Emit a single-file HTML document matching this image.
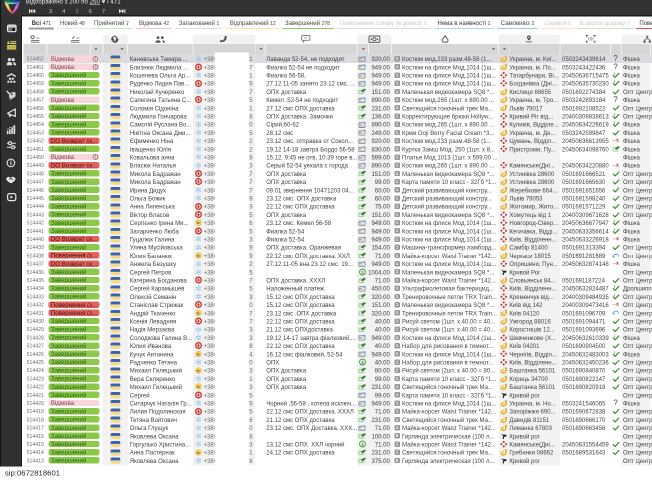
<!DOCTYPE html><html><head><meta charset="utf-8"><style>
*{box-sizing:border-box}
html,body{margin:0;padding:0}
body{width:652px;height:480px;overflow:hidden;background:#fff;position:relative;font-family:"Liberation Sans",sans-serif;color:#333}
.a{position:absolute}
svg.a{overflow:visible}
.t{position:absolute;white-space:nowrap;font-size:6px;line-height:8.2px}
#w{position:absolute;left:0;top:0;width:1304px;height:960px;overflow:hidden;transform:scale(0.5);transform-origin:0 0;will-change:transform}
#z{position:absolute;left:0;top:0;width:652px;height:480px;zoom:2}
.pill{position:absolute;height:6.4px;border-radius:2.2px;font-size:6.1px;line-height:8px;padding-left:2.2px;white-space:nowrap;overflow:hidden}
.pill span{position:relative;top:-0.6px}
.G{background:#8cc94a;color:#2f6216}
.P{background:#f7d6dc;color:#84404e}
.D{background:#e3625c;color:#451515}
</style></head><body><div id="w"><div id="z"><div class="a" style="left:102.9px;top:34.5px;width:24.5px;height:430.8px;background:#f2f2f2;border-radius:2.5px 2.5px 0 0"></div>
<div class="a" style="left:193px;top:34.5px;width:62.2px;height:430.8px;background:#f2f2f2;border-radius:2.5px 2.5px 0 0"></div>
<div class="a" style="left:357.2px;top:34.5px;width:34.3px;height:430.8px;background:#f2f2f2;border-radius:2.5px 2.5px 0 0"></div>
<div class="a" style="left:498.4px;top:34.5px;width:61.6px;height:430.8px;background:#f2f2f2;border-radius:2.5px 2.5px 0 0"></div>
<div class="a" style="left:621.4px;top:34.5px;width:29.2px;height:430.8px;background:#f2f2f2;border-radius:2.5px 2.5px 0 0"></div>
<svg class="a" style="left:30px;top:35px" width="10" height="8" viewBox="0 0 10 8"><circle cx="2.6" cy="2.2" r="1.6" fill="none" stroke="#6a6a6a" stroke-width="1"/><rect x="6" y="2.5" width="3.6" height="1" fill="#999"/><rect x="1" y="5" width="8.4" height="0.9" fill="#6a6a6a"/><rect x="1" y="6.8" width="8.4" height="0.9" fill="#6a6a6a"/></svg>
<svg class="a" style="left:70.5px;top:35px" width="10" height="8" viewBox="0 0 10 8"><path d="M2 3.8 L3.8 1" stroke="#6a6a6a" stroke-width="1.1"/><rect x="5.5" y="2.5" width="3.6" height="1" fill="#999"/><rect x="0.5" y="5" width="8.4" height="0.9" fill="#6a6a6a"/><rect x="0.5" y="6.8" width="8.4" height="0.9" fill="#6a6a6a"/></svg>
<svg class="a" style="left:111.2px;top:35.7px" width="8" height="8" viewBox="0 0 8 8"><circle cx="3.8" cy="3.8" r="3.6" fill="#4a4a4a"/><path d="M2.4 1.3 Q3.4 0.7 4.1 1.6 Q5.6 2 5.2 3.4 Q4.6 4.6 4.1 6.4 Q3.2 5.2 3 4 Q1.9 3.3 2.4 1.3Z" fill="#f4f4f4"/><path d="M5.3 0.8 Q7 1.6 7.2 3.4" fill="none" stroke="#f4f4f4" stroke-width="0.7"/><path d="M0.8 4.6 Q1.4 6.4 3 7.2" fill="none" stroke="#f4f4f4" stroke-width="0.5"/></svg>
<svg class="a" style="left:155.2px;top:36px" width="11" height="7.5" viewBox="0 0 11 7.5"><circle cx="3" cy="1.6" r="1.4" fill="#555"/><circle cx="7.3" cy="1.6" r="1.4" fill="#555"/><path d="M0.4 6.8 Q0.4 4.2 3 4.2 Q5.6 4.2 5.6 6.8Z" fill="#555"/><path d="M7.6 4.3 Q10 4.5 10 6.8 L8 6.8Z" fill="#555"/></svg>
<svg class="a" style="left:219.6px;top:35.6px" width="8" height="7" viewBox="0 0 8 7"><path d="M5.2 0.3 L7.1 0.8 Q7.8 3.8 5.2 5.6 Q2.6 7.2 0.3 6.4 L0.9 4.6 L2.8 4.9 Q4.6 4.2 5 2.4Z" fill="#505050"/></svg>
<svg class="a" style="left:301px;top:35px" width="10" height="8" viewBox="0 0 10 8"><path d="M1.6 0.6 H7.9 Q8.9 0.6 8.9 1.6 V4.3 Q8.9 5.3 7.9 5.3 H3.6 L2.4 7 L2.4 5.3 H1.6 Q0.6 5.3 0.6 4.3 V1.6 Q0.6 0.6 1.6 0.6Z" fill="none" stroke="#777" stroke-width="0.9"/><rect x="3" y="2.6" width="3.2" height="0.8" fill="#999"/></svg>
<svg class="a" style="left:368.6px;top:35.6px" width="12" height="7.5" viewBox="0 0 12 7.5"><rect x="0.5" y="0.5" width="10.8" height="6.4" rx="1.2" fill="none" stroke="#5a5a5a" stroke-width="1"/><path d="M1.6 3.7 L3.4 2.4 V5Z M10.2 3.7 L8.4 2.4 V5Z" fill="#666"/><circle cx="5.9" cy="3.7" r="1.6" fill="none" stroke="#555" stroke-width="0.9"/></svg>
<svg class="a" style="left:441.6px;top:35px" width="8" height="8" viewBox="0 0 8 8"><path d="M3.6 0.7 L1.6 3.6 Q0.6 4.2 0.7 5.6 Q0.9 7.2 2.4 7.2 H4.8 Q6.3 7.2 6.5 5.6 Q6.6 4.2 5.6 3.6Z" fill="none" stroke="#6a6a6a" stroke-width="1.1" stroke-linejoin="round"/></svg>
<svg class="a" style="left:525.5px;top:35px" width="8" height="8" viewBox="0 0 8 8"><path d="M3.4 0.4 Q5.2 0.4 5.3 2.4 Q5.3 3.8 3.4 5.6 Q1.5 3.8 1.5 2.4 Q1.6 0.4 3.4 0.4Z" fill="#555"/><circle cx="3.4" cy="2.3" r="0.7" fill="#f2f2f2"/><path d="M0.6 6 Q0.6 7 3.4 7 Q6.2 7 6.2 6" fill="none" stroke="#666" stroke-width="0.9"/></svg>
<svg class="a" style="left:585.8px;top:35.2px" width="10" height="8" viewBox="0 0 10 8"><path d="M0.5 2 V0.5 H2 M7.5 0.5 H9 V2 M9 5.5 V7 H7.5 M2 7 H0.5 V5.5" fill="none" stroke="#555" stroke-width="0.9"/><rect x="2.4" y="2" width="0.6" height="3.6" fill="#888"/><rect x="3.7" y="2" width="1" height="3.6" fill="#aaa"/><rect x="5.3" y="2" width="0.6" height="3.6" fill="#888"/><rect x="6.5" y="2" width="0.9" height="3.6" fill="#aaa"/></svg>
<svg class="a" style="left:643px;top:35.6px" width="9" height="8" viewBox="0 0 9 8"><circle cx="4.2" cy="1.2" r="1.1" fill="#666"/><path d="M4.2 1.2 V3.2 M4.2 3.2 Q1.6 3.6 1.6 5.6 M4.2 3.2 Q6.8 3.6 6.8 5.6" fill="none" stroke="#666" stroke-width="0.9"/><circle cx="1.6" cy="6.2" r="1.2" fill="#555"/><circle cx="6.8" cy="6.2" r="1.2" fill="#555"/></svg>
<div class="a" style="left:23.5px;top:44px;width:628.5px;height:10.6px;background:#d6d6d6"></div>
<div class="a" style="left:46.7px;top:44px;width:1px;height:10.6px;background:#f2f2f2"></div>
<div class="a" style="left:90px;top:44px;width:1px;height:10.6px;background:#f2f2f2"></div>
<div class="a" style="left:102.4px;top:44px;width:1px;height:10.6px;background:#f2f2f2"></div>
<div class="a" style="left:126.9px;top:44px;width:1px;height:10.6px;background:#f2f2f2"></div>
<div class="a" style="left:192.5px;top:44px;width:1px;height:10.6px;background:#f2f2f2"></div>
<div class="a" style="left:254.7px;top:44px;width:1px;height:10.6px;background:#f2f2f2"></div>
<div class="a" style="left:264.6px;top:44px;width:1px;height:10.6px;background:#f2f2f2"></div>
<div class="a" style="left:356.7px;top:44px;width:1px;height:10.6px;background:#f2f2f2"></div>
<div class="a" style="left:368px;top:44px;width:1px;height:10.6px;background:#f2f2f2"></div>
<div class="a" style="left:391px;top:44px;width:1px;height:10.6px;background:#f2f2f2"></div>
<div class="a" style="left:497.9px;top:44px;width:1px;height:10.6px;background:#f2f2f2"></div>
<div class="a" style="left:508.6px;top:44px;width:1px;height:10.6px;background:#f2f2f2"></div>
<div class="a" style="left:559.5px;top:44px;width:1px;height:10.6px;background:#f2f2f2"></div>
<div class="a" style="left:609.9px;top:44px;width:1px;height:10.6px;background:#f2f2f2"></div>
<div class="a" style="left:620.9px;top:44px;width:1px;height:10.6px;background:#f2f2f2"></div>
<div class="a" style="left:650.1px;top:44px;width:1px;height:10.6px;background:#f2f2f2"></div>
<svg class="a" style="left:94.6px;top:48px" width="3" height="2.3" viewBox="0 0 3 2.3"><path d="M0 0 H3 L1.5 2.3Z" fill="#6e6e6e"/></svg>
<svg class="a" style="left:120.3px;top:48px" width="3" height="2.3" viewBox="0 0 3 2.3"><path d="M0 0 H3 L1.5 2.3Z" fill="#6e6e6e"/></svg>
<svg class="a" style="left:259.5px;top:48px" width="3" height="2.3" viewBox="0 0 3 2.3"><path d="M0 0 H3 L1.5 2.3Z" fill="#6e6e6e"/></svg>
<svg class="a" style="left:361.8px;top:48px" width="3" height="2.3" viewBox="0 0 3 2.3"><path d="M0 0 H3 L1.5 2.3Z" fill="#6e6e6e"/></svg>
<svg class="a" style="left:492px;top:48px" width="3" height="2.3" viewBox="0 0 3 2.3"><path d="M0 0 H3 L1.5 2.3Z" fill="#6e6e6e"/></svg>
<svg class="a" style="left:503px;top:48px" width="3" height="2.3" viewBox="0 0 3 2.3"><path d="M0 0 H3 L1.5 2.3Z" fill="#6e6e6e"/></svg>
<div class="a" style="left:23.5px;top:54.6px;width:628.5px;height:8.2px;background:#dcdce0"></div>
<div class="t" style="left:26.6px;top:55.1px;color:#6c6c6c;font-size:5.2px">514462</div>
<div class="pill P" style="left:48.7px;top:55.4px;width:50.9px"><span>Відмова</span></div>
<svg class="a" style="left:92.4px;top:55.8px" width="6" height="6" viewBox="0 0 6 6"><circle cx="2.9" cy="2.9" r="2.4" fill="none" stroke="#8a5560" stroke-width="0.7"/><rect x="2.6" y="1.5" width="0.6" height="1.8" fill="#8a5560"/><rect x="2.6" y="3.8" width="0.6" height="0.6" fill="#8a5560"/></svg>
<svg class="a" style="left:110.3px;top:55.7px" width="9.8" height="6.2" viewBox="0 0 9.8 6.2"><rect x="0" y="0" width="9.8" height="6.2" rx="1.6" fill="#f6dc80"/><path d="M1.6 0 H8.2 Q9.8 0 9.8 1.6 V3 H0 V1.6 Q0 0 1.6 0Z" fill="#3d60ae"/><rect x="0" y="2.9" width="9.8" height="0.35" fill="#d8dce8"/></svg>
<div class="t" style="left:129.8px;top:55.1px;color:#3e3e3e">Каневська Тамара ...</div>
<svg class="a" style="left:195px;top:55.3px" width="7" height="7" viewBox="0 0 7 7"><line x1="3.4" y1="3.4" x2="3.4" y2="0.6" stroke="#7ab4ec" stroke-width="0.7" stroke-linecap="round"/><line x1="3.4" y1="3.4" x2="0.98" y2="2" stroke="#7ab4ec" stroke-width="0.7" stroke-linecap="round"/><line x1="3.4" y1="3.4" x2="0.98" y2="4.8" stroke="#7ab4ec" stroke-width="0.7" stroke-linecap="round"/><line x1="3.4" y1="3.4" x2="3.4" y2="6.2" stroke="#7ab4ec" stroke-width="0.7" stroke-linecap="round"/><line x1="3.4" y1="3.4" x2="5.82" y2="4.8" stroke="#7ab4ec" stroke-width="0.7" stroke-linecap="round"/><line x1="3.4" y1="3.4" x2="5.82" y2="2" stroke="#7ab4ec" stroke-width="0.7" stroke-linecap="round"/><circle cx="3.4" cy="3.4" r="0.7" fill="#fff"/></svg>
<div class="t" style="left:203.6px;top:55.1px;color:#6a6a6a">+380</div>
<div class="t" style="left:249.2px;top:55.1px;color:#6a6a6a">1</div>
<div class="t" style="left:266.3px;top:55.1px;color:#3e3e3e">Лаванда 52-54, не подходит</div>
<svg class="a" style="left:358.6px;top:55.9px" width="8" height="6" viewBox="0 0 8 6"><rect x="0.4" y="1.2" width="6.2" height="4.4" rx="0.6" fill="none" stroke="#8a8a8a" stroke-width="0.8"/><rect x="0.6" y="2.4" width="3" height="0.8" fill="#8a8a8a"/><rect x="1" y="4" width="4.6" height="0.6" fill="#b0b0b0"/><rect x="4.9" y="0.3" width="2" height="2" rx="0.4" fill="#5aa8ea"/></svg>
<div class="t" style="left:360px;width:29.8px;text-align:right;top:55.1px;color:#3e3e3e">920.00</div>
<div class="a" style="left:394.4px;top:56px;width:5.4px;height:5.4px;border-radius:1.3px;background:#979797;color:#fff;font-weight:bold;font-size:4.2px;line-height:5.6px;text-align:center">1</div>
<div class="t" style="left:402px;top:55.1px;color:#444">Костюм мод.233 разм.48-58 (1...</div>
<svg class="a" style="left:500px;top:55.5px" width="8" height="7" viewBox="0 0 8 7"><path d="M4.4 0.5 L7 0.3 Q7.6 4.4 5 6.3 Q2.4 7.6 0.9 5.6 Q0.2 4 1.4 2.4 L2.7 3.3 Q2.1 4.4 2.8 5 Q4.4 5.6 5.1 3.4 Q5.3 1.8 4.4 0.5Z" fill="#f0b22c"/><path d="M3.4 1.6 Q3.9 3 3.3 4.2" fill="none" stroke="#f4c24a" stroke-width="0.9"/></svg>
<div class="t" style="left:509.4px;top:55.1px;color:#444">Украина, м. Киї...</div>
<div class="t" style="left:562px;top:55.1px;color:#444">0503243439614</div>
<div class="t" style="left:613.2px;top:54.2px;color:#474747;font-size:8px;line-height:8.6px">?</div>
<div class="t" style="left:623px;top:55.1px;color:#444">Фішка</div>
<div class="t" style="left:26.6px;top:63.3px;color:#6c6c6c;font-size:5.2px">514461</div>
<div class="pill P" style="left:48.7px;top:63.6px;width:50.9px"><span>Відмова</span></div>
<svg class="a" style="left:92.4px;top:64px" width="6" height="6" viewBox="0 0 6 6"><circle cx="2.9" cy="2.9" r="2.4" fill="none" stroke="#8a5560" stroke-width="0.7"/><rect x="2.6" y="1.5" width="0.6" height="1.8" fill="#8a5560"/><rect x="2.6" y="3.8" width="0.6" height="0.6" fill="#8a5560"/></svg>
<svg class="a" style="left:110.3px;top:63.9px" width="9.8" height="6.2" viewBox="0 0 9.8 6.2"><rect x="0" y="0" width="9.8" height="6.2" rx="1.6" fill="#f6dc80"/><path d="M1.6 0 H8.2 Q9.8 0 9.8 1.6 V3 H0 V1.6 Q0 0 1.6 0Z" fill="#3d60ae"/><rect x="0" y="2.9" width="9.8" height="0.35" fill="#d8dce8"/></svg>
<div class="t" style="left:129.8px;top:63.3px;color:#3e3e3e">Близнюк Людмила ...</div>
<svg class="a" style="left:194.9px;top:63.4px" width="7" height="7" viewBox="0 0 7 7"><circle cx="3.5" cy="3.5" r="2.8" fill="#fff" stroke="#c8322a" stroke-width="1.3"/><path d="M4 1.6 Q2.2 2.2 2.3 3.9 Q2.6 5.2 3.8 5 Q4.9 4.6 4.6 3.3 Q3.7 3 4 1.6Z" fill="#c8322a"/></svg>
<div class="t" style="left:203.6px;top:63.3px;color:#6a6a6a">+380</div>
<div class="t" style="left:249.2px;top:63.3px;color:#6a6a6a">7</div>
<div class="t" style="left:266.3px;top:63.3px;color:#3e3e3e">Фиалка 52-54 не подходит</div>
<svg class="a" style="left:358.6px;top:64.1px" width="8" height="6" viewBox="0 0 8 6"><rect x="0.4" y="1.2" width="6.2" height="4.4" rx="0.6" fill="none" stroke="#8a8a8a" stroke-width="0.8"/><rect x="0.6" y="2.4" width="3" height="0.8" fill="#8a8a8a"/><rect x="1" y="4" width="4.6" height="0.6" fill="#b0b0b0"/><rect x="4.9" y="0.3" width="2" height="2" rx="0.4" fill="#5aa8ea"/></svg>
<div class="t" style="left:360px;width:29.8px;text-align:right;top:63.3px;color:#3e3e3e">949.00</div>
<div class="a" style="left:394.4px;top:64.2px;width:5.4px;height:5.4px;border-radius:1.3px;background:#979797;color:#fff;font-weight:bold;font-size:4.2px;line-height:5.6px;text-align:center">1</div>
<div class="t" style="left:402px;top:63.3px;color:#444">Костюм на флисе Мод.1014 (1ш...</div>
<svg class="a" style="left:500px;top:63.7px" width="8" height="7" viewBox="0 0 8 7"><path d="M4.4 0.5 L7 0.3 Q7.6 4.4 5 6.3 Q2.4 7.6 0.9 5.6 Q0.2 4 1.4 2.4 L2.7 3.3 Q2.1 4.4 2.8 5 Q4.4 5.6 5.1 3.4 Q5.3 1.8 4.4 0.5Z" fill="#f0b22c"/><path d="M3.4 1.6 Q3.9 3 3.3 4.2" fill="none" stroke="#f4c24a" stroke-width="0.9"/></svg>
<div class="t" style="left:509.4px;top:63.3px;color:#444">Украина, м. По...</div>
<div class="t" style="left:562px;top:63.3px;color:#444">0503243422436</div>
<div class="t" style="left:613.2px;top:62.4px;color:#474747;font-size:8px;line-height:8.6px">?</div>
<div class="t" style="left:623px;top:63.3px;color:#444">Фішка</div>
<div class="t" style="left:26.6px;top:71.5px;color:#6c6c6c;font-size:5.2px">514460</div>
<div class="pill G" style="left:48.7px;top:71.8px;width:50.9px"><span>Завершений</span></div>
<svg class="a" style="left:110.3px;top:72.1px" width="9.8" height="6.2" viewBox="0 0 9.8 6.2"><rect x="0" y="0" width="9.8" height="6.2" rx="1.6" fill="#f6dc80"/><path d="M1.6 0 H8.2 Q9.8 0 9.8 1.6 V3 H0 V1.6 Q0 0 1.6 0Z" fill="#3d60ae"/><rect x="0" y="2.9" width="9.8" height="0.35" fill="#d8dce8"/></svg>
<div class="t" style="left:129.8px;top:71.5px;color:#3e3e3e">Кошелева Ольга Ар...</div>
<svg class="a" style="left:195px;top:71.7px" width="7" height="7" viewBox="0 0 7 7"><line x1="3.4" y1="3.4" x2="3.4" y2="0.6" stroke="#7ab4ec" stroke-width="0.7" stroke-linecap="round"/><line x1="3.4" y1="3.4" x2="0.98" y2="2" stroke="#7ab4ec" stroke-width="0.7" stroke-linecap="round"/><line x1="3.4" y1="3.4" x2="0.98" y2="4.8" stroke="#7ab4ec" stroke-width="0.7" stroke-linecap="round"/><line x1="3.4" y1="3.4" x2="3.4" y2="6.2" stroke="#7ab4ec" stroke-width="0.7" stroke-linecap="round"/><line x1="3.4" y1="3.4" x2="5.82" y2="4.8" stroke="#7ab4ec" stroke-width="0.7" stroke-linecap="round"/><line x1="3.4" y1="3.4" x2="5.82" y2="2" stroke="#7ab4ec" stroke-width="0.7" stroke-linecap="round"/><circle cx="3.4" cy="3.4" r="0.7" fill="#fff"/></svg>
<div class="t" style="left:203.6px;top:71.5px;color:#6a6a6a">+380</div>
<div class="t" style="left:249.2px;top:71.5px;color:#6a6a6a">1</div>
<div class="t" style="left:266.3px;top:71.5px;color:#3e3e3e">Фиалка 56-58,</div>
<svg class="a" style="left:358.6px;top:72.3px" width="8" height="6" viewBox="0 0 8 6"><rect x="0.4" y="1.2" width="6.2" height="4.4" rx="0.6" fill="none" stroke="#8a8a8a" stroke-width="0.8"/><rect x="0.6" y="2.4" width="3" height="0.8" fill="#8a8a8a"/><rect x="1" y="4" width="4.6" height="0.6" fill="#b0b0b0"/><rect x="4.9" y="0.3" width="2" height="2" rx="0.4" fill="#5aa8ea"/></svg>
<div class="t" style="left:360px;width:29.8px;text-align:right;top:71.5px;color:#3e3e3e">949.00</div>
<div class="a" style="left:394.4px;top:72.4px;width:5.4px;height:5.4px;border-radius:1.3px;background:#979797;color:#fff;font-weight:bold;font-size:4.2px;line-height:5.6px;text-align:center">1</div>
<div class="t" style="left:402px;top:71.5px;color:#444">Костюм на флисе Мод.1014 (1ш...</div>
<svg class="a" style="left:500.6px;top:71.9px" width="7" height="7" viewBox="0 0 7 7"><circle cx="3.2" cy="3.2" r="3.4" fill="#fbe4e4"/><circle cx="3.2" cy="3.2" r="1.4" fill="#fff"/><circle cx="3.2" cy="1" r="1.05" fill="#a04040"/><circle cx="3.2" cy="5.4" r="1.05" fill="#a04040"/><circle cx="1" cy="3.2" r="1" fill="#a04040"/><circle cx="5.4" cy="3.2" r="1" fill="#a04040"/></svg>
<div class="t" style="left:509.4px;top:71.5px;color:#444">Татарбунари, Ві...</div>
<div class="t" style="left:562px;top:71.5px;color:#444">20450636715475</div>
<svg class="a" style="left:612.5px;top:72px" width="7" height="6.5" viewBox="0 0 7 6.5"><path d="M0.8 3.6 L2.6 5.3 L6.4 1.4" fill="none" stroke="#3a9032" stroke-width="1.25" stroke-linecap="round" stroke-linejoin="round"/><path d="M1.8 0.4 V3" stroke="#3a9032" stroke-width="0.6"/></svg>
<div class="t" style="left:623px;top:71.5px;color:#444">Фішка</div>
<div class="t" style="left:26.6px;top:79.7px;color:#6c6c6c;font-size:5.2px">514459</div>
<div class="pill G" style="left:48.7px;top:80px;width:50.9px"><span>Завершений</span></div>
<svg class="a" style="left:110.3px;top:80.3px" width="9.8" height="6.2" viewBox="0 0 9.8 6.2"><rect x="0" y="0" width="9.8" height="6.2" rx="1.6" fill="#f6dc80"/><path d="M1.6 0 H8.2 Q9.8 0 9.8 1.6 V3 H0 V1.6 Q0 0 1.6 0Z" fill="#3d60ae"/><rect x="0" y="2.9" width="9.8" height="0.35" fill="#d8dce8"/></svg>
<div class="t" style="left:129.8px;top:79.7px;color:#3e3e3e">Руденко Лидия Пав...</div>
<svg class="a" style="left:194.9px;top:79.8px" width="7" height="7" viewBox="0 0 7 7"><circle cx="3.5" cy="3.5" r="2.8" fill="#fff" stroke="#c8322a" stroke-width="1.3"/><path d="M4 1.6 Q2.2 2.2 2.3 3.9 Q2.6 5.2 3.8 5 Q4.9 4.6 4.6 3.3 Q3.7 3 4 1.6Z" fill="#c8322a"/></svg>
<div class="t" style="left:203.6px;top:79.7px;color:#6a6a6a">+380</div>
<div class="t" style="left:249.2px;top:79.7px;color:#6a6a6a">9</div>
<div class="t" style="left:266.3px;top:79.7px;color:#3e3e3e">27.12 11-05 занято 23.12 смс. ...</div>
<svg class="a" style="left:358.6px;top:80.5px" width="8" height="6" viewBox="0 0 8 6"><rect x="0.4" y="1.2" width="6.2" height="4.4" rx="0.6" fill="none" stroke="#8a8a8a" stroke-width="0.8"/><rect x="0.6" y="2.4" width="3" height="0.8" fill="#8a8a8a"/><rect x="1" y="4" width="4.6" height="0.6" fill="#b0b0b0"/><rect x="4.9" y="0.3" width="2" height="2" rx="0.4" fill="#5aa8ea"/></svg>
<div class="t" style="left:360px;width:29.8px;text-align:right;top:79.7px;color:#3e3e3e">949.00</div>
<div class="a" style="left:394.4px;top:80.6px;width:5.4px;height:5.4px;border-radius:1.3px;background:#979797;color:#fff;font-weight:bold;font-size:4.2px;line-height:5.6px;text-align:center">1</div>
<div class="t" style="left:402px;top:79.7px;color:#444">Костюм на флисе Мод.1014 (1ш...</div>
<svg class="a" style="left:500.6px;top:80.1px" width="7" height="7" viewBox="0 0 7 7"><circle cx="3.2" cy="3.2" r="3.4" fill="#fbe4e4"/><circle cx="3.2" cy="3.2" r="1.4" fill="#fff"/><circle cx="3.2" cy="1" r="1.05" fill="#a04040"/><circle cx="3.2" cy="5.4" r="1.05" fill="#a04040"/><circle cx="1" cy="3.2" r="1" fill="#a04040"/><circle cx="5.4" cy="3.2" r="1" fill="#a04040"/></svg>
<div class="t" style="left:509.4px;top:79.7px;color:#444">Богданівка (Дні...</div>
<div class="t" style="left:562px;top:79.7px;color:#444">20450635730230</div>
<svg class="a" style="left:612.5px;top:80.2px" width="7" height="6.5" viewBox="0 0 7 6.5"><path d="M0.8 3.6 L2.6 5.3 L6.4 1.4" fill="none" stroke="#3a9032" stroke-width="1.25" stroke-linecap="round" stroke-linejoin="round"/><path d="M1.8 0.4 V3" stroke="#3a9032" stroke-width="0.6"/></svg>
<div class="t" style="left:623px;top:79.7px;color:#444">Фішка</div>
<div class="t" style="left:26.6px;top:87.9px;color:#6c6c6c;font-size:5.2px">514458</div>
<div class="pill G" style="left:48.7px;top:88.2px;width:50.9px"><span>Завершений</span></div>
<svg class="a" style="left:110.3px;top:88.5px" width="9.8" height="6.2" viewBox="0 0 9.8 6.2"><rect x="0" y="0" width="9.8" height="6.2" rx="1.6" fill="#f6dc80"/><path d="M1.6 0 H8.2 Q9.8 0 9.8 1.6 V3 H0 V1.6 Q0 0 1.6 0Z" fill="#3d60ae"/><rect x="0" y="2.9" width="9.8" height="0.35" fill="#d8dce8"/></svg>
<div class="t" style="left:129.8px;top:87.9px;color:#3e3e3e">Николай Кучеренко</div>
<svg class="a" style="left:195px;top:88.1px" width="7" height="7" viewBox="0 0 7 7"><line x1="3.4" y1="3.4" x2="3.4" y2="0.6" stroke="#7ab4ec" stroke-width="0.7" stroke-linecap="round"/><line x1="3.4" y1="3.4" x2="0.98" y2="2" stroke="#7ab4ec" stroke-width="0.7" stroke-linecap="round"/><line x1="3.4" y1="3.4" x2="0.98" y2="4.8" stroke="#7ab4ec" stroke-width="0.7" stroke-linecap="round"/><line x1="3.4" y1="3.4" x2="3.4" y2="6.2" stroke="#7ab4ec" stroke-width="0.7" stroke-linecap="round"/><line x1="3.4" y1="3.4" x2="5.82" y2="4.8" stroke="#7ab4ec" stroke-width="0.7" stroke-linecap="round"/><line x1="3.4" y1="3.4" x2="5.82" y2="2" stroke="#7ab4ec" stroke-width="0.7" stroke-linecap="round"/><circle cx="3.4" cy="3.4" r="0.7" fill="#fff"/></svg>
<div class="t" style="left:203.6px;top:87.9px;color:#6a6a6a">+380</div>
<div class="t" style="left:249.2px;top:87.9px;color:#6a6a6a">7</div>
<div class="t" style="left:266.3px;top:87.9px;color:#3e3e3e">ОПХ доставка</div>
<svg class="a" style="left:358.6px;top:88.2px" width="8" height="6" viewBox="0 0 8 6"><rect x="0.5" y="2.2" width="4.6" height="3.4" rx="0.4" fill="none" stroke="#8fbf88" stroke-width="0.8"/><path d="M2.4 3.6 Q3.6 1.4 6 0.8 Q7.6 0.8 7 2.2 Q5.6 3.6 3.4 4.2Z" fill="#2f8a2a"/></svg>
<div class="t" style="left:360px;width:29.8px;text-align:right;top:87.9px;color:#3e3e3e">151.00</div>
<div class="a" style="left:394.4px;top:88.8px;width:5.4px;height:5.4px;border-radius:1.3px;background:#979797;color:#fff;font-weight:bold;font-size:4.2px;line-height:5.6px;text-align:center">1</div>
<div class="t" style="left:402px;top:87.9px;color:#444">Маленькая видеокамера SQ8 *...</div>
<svg class="a" style="left:500px;top:88.3px" width="8" height="7" viewBox="0 0 8 7"><path d="M4.4 0.5 L7 0.3 Q7.6 4.4 5 6.3 Q2.4 7.6 0.9 5.6 Q0.2 4 1.4 2.4 L2.7 3.3 Q2.1 4.4 2.8 5 Q4.4 5.6 5.1 3.4 Q5.3 1.8 4.4 0.5Z" fill="#f0b22c"/><path d="M3.4 1.6 Q3.9 3 3.3 4.2" fill="none" stroke="#f4c24a" stroke-width="0.9"/></svg>
<div class="t" style="left:509.4px;top:87.9px;color:#444">Кислиця 68655</div>
<div class="t" style="left:562px;top:87.9px;color:#444">0501692274384</div>
<svg class="a" style="left:612.5px;top:88.8px" width="7" height="6" viewBox="0 0 7 6"><path d="M0.8 3.2 L2.6 4.9 L6.4 1" fill="none" stroke="#3a9032" stroke-width="1.25" stroke-linecap="round" stroke-linejoin="round"/></svg>
<div class="t" style="left:623px;top:87.9px;color:#444">Опт Центр</div>
<div class="t" style="left:26.6px;top:96.1px;color:#6c6c6c;font-size:5.2px">514457</div>
<div class="pill P" style="left:48.7px;top:96.4px;width:50.9px"><span>Відмова</span></div>
<svg class="a" style="left:110.3px;top:96.7px" width="9.8" height="6.2" viewBox="0 0 9.8 6.2"><rect x="0" y="0" width="9.8" height="6.2" rx="1.6" fill="#f6dc80"/><path d="M1.6 0 H8.2 Q9.8 0 9.8 1.6 V3 H0 V1.6 Q0 0 1.6 0Z" fill="#3d60ae"/><rect x="0" y="2.9" width="9.8" height="0.35" fill="#d8dce8"/></svg>
<div class="t" style="left:129.8px;top:96.1px;color:#3e3e3e">Сапегина Татьяна С...</div>
<svg class="a" style="left:194.9px;top:96.2px" width="7" height="7" viewBox="0 0 7 7"><circle cx="3.5" cy="3.5" r="2.8" fill="#fff" stroke="#c8322a" stroke-width="1.3"/><path d="M4 1.6 Q2.2 2.2 2.3 3.9 Q2.6 5.2 3.8 5 Q4.9 4.6 4.6 3.3 Q3.7 3 4 1.6Z" fill="#c8322a"/></svg>
<div class="t" style="left:203.6px;top:96.1px;color:#6a6a6a">+380</div>
<div class="t" style="left:249.2px;top:96.1px;color:#6a6a6a">5</div>
<div class="t" style="left:266.3px;top:96.1px;color:#3e3e3e">Кемел ,52-54 не подходит</div>
<svg class="a" style="left:358.6px;top:96.9px" width="8" height="6" viewBox="0 0 8 6"><rect x="0.4" y="1.2" width="6.2" height="4.4" rx="0.6" fill="none" stroke="#8a8a8a" stroke-width="0.8"/><rect x="0.6" y="2.4" width="3" height="0.8" fill="#8a8a8a"/><rect x="1" y="4" width="4.6" height="0.6" fill="#b0b0b0"/><rect x="4.9" y="0.3" width="2" height="2" rx="0.4" fill="#5aa8ea"/></svg>
<div class="t" style="left:360px;width:29.8px;text-align:right;top:96.1px;color:#3e3e3e">890.00</div>
<div class="a" style="left:394.4px;top:97px;width:5.4px;height:5.4px;border-radius:1.3px;background:#979797;color:#fff;font-weight:bold;font-size:4.2px;line-height:5.6px;text-align:center">1</div>
<div class="t" style="left:402px;top:96.1px;color:#444">Костюм мод.265 (1шт. x 890.00 ...</div>
<svg class="a" style="left:500px;top:96.5px" width="8" height="7" viewBox="0 0 8 7"><path d="M4.4 0.5 L7 0.3 Q7.6 4.4 5 6.3 Q2.4 7.6 0.9 5.6 Q0.2 4 1.4 2.4 L2.7 3.3 Q2.1 4.4 2.8 5 Q4.4 5.6 5.1 3.4 Q5.3 1.8 4.4 0.5Z" fill="#f0b22c"/><path d="M3.4 1.6 Q3.9 3 3.3 4.2" fill="none" stroke="#f4c24a" stroke-width="0.9"/></svg>
<div class="t" style="left:509.4px;top:96.1px;color:#444">Украина, м. Тро...</div>
<div class="t" style="left:562px;top:96.1px;color:#444">0503242893184</div>
<div class="t" style="left:613.2px;top:95.2px;color:#474747;font-size:8px;line-height:8.6px">?</div>
<div class="t" style="left:623px;top:96.1px;color:#444">Фішка</div>
<div class="t" style="left:26.6px;top:104.3px;color:#6c6c6c;font-size:5.2px">514456</div>
<div class="pill G" style="left:48.7px;top:104.6px;width:50.9px"><span>Завершений</span></div>
<svg class="a" style="left:110.3px;top:104.9px" width="9.8" height="6.2" viewBox="0 0 9.8 6.2"><rect x="0" y="0" width="9.8" height="6.2" rx="1.6" fill="#f6dc80"/><path d="M1.6 0 H8.2 Q9.8 0 9.8 1.6 V3 H0 V1.6 Q0 0 1.6 0Z" fill="#3d60ae"/><rect x="0" y="2.9" width="9.8" height="0.35" fill="#d8dce8"/></svg>
<div class="t" style="left:129.8px;top:104.3px;color:#3e3e3e">Соломія Сідоніна</div>
<svg class="a" style="left:195px;top:104.5px" width="7" height="7" viewBox="0 0 7 7"><line x1="3.4" y1="3.4" x2="3.4" y2="0.6" stroke="#7ab4ec" stroke-width="0.7" stroke-linecap="round"/><line x1="3.4" y1="3.4" x2="0.98" y2="2" stroke="#7ab4ec" stroke-width="0.7" stroke-linecap="round"/><line x1="3.4" y1="3.4" x2="0.98" y2="4.8" stroke="#7ab4ec" stroke-width="0.7" stroke-linecap="round"/><line x1="3.4" y1="3.4" x2="3.4" y2="6.2" stroke="#7ab4ec" stroke-width="0.7" stroke-linecap="round"/><line x1="3.4" y1="3.4" x2="5.82" y2="4.8" stroke="#7ab4ec" stroke-width="0.7" stroke-linecap="round"/><line x1="3.4" y1="3.4" x2="5.82" y2="2" stroke="#7ab4ec" stroke-width="0.7" stroke-linecap="round"/><circle cx="3.4" cy="3.4" r="0.7" fill="#fff"/></svg>
<div class="t" style="left:203.6px;top:104.3px;color:#6a6a6a">+380</div>
<div class="t" style="left:249.2px;top:104.3px;color:#6a6a6a">1</div>
<div class="t" style="left:266.3px;top:104.3px;color:#3e3e3e">27.12 смс ОПХ доставка</div>
<svg class="a" style="left:358.6px;top:104.6px" width="8" height="6" viewBox="0 0 8 6"><rect x="0.5" y="2.2" width="4.6" height="3.4" rx="0.4" fill="none" stroke="#8fbf88" stroke-width="0.8"/><path d="M2.4 3.6 Q3.6 1.4 6 0.8 Q7.6 0.8 7 2.2 Q5.6 3.6 3.4 4.2Z" fill="#2f8a2a"/></svg>
<div class="t" style="left:360px;width:29.8px;text-align:right;top:104.3px;color:#3e3e3e">231.00</div>
<div class="a" style="left:394.4px;top:105.2px;width:5.4px;height:5.4px;border-radius:1.3px;background:#979797;color:#fff;font-weight:bold;font-size:4.2px;line-height:5.6px;text-align:center">1</div>
<div class="t" style="left:402px;top:104.3px;color:#444">Светящийся гоночный трек Ма...</div>
<svg class="a" style="left:500px;top:104.7px" width="8" height="7" viewBox="0 0 8 7"><path d="M4.4 0.5 L7 0.3 Q7.6 4.4 5 6.3 Q2.4 7.6 0.9 5.6 Q0.2 4 1.4 2.4 L2.7 3.3 Q2.1 4.4 2.8 5 Q4.4 5.6 5.1 3.4 Q5.3 1.8 4.4 0.5Z" fill="#f0b22c"/><path d="M3.4 1.6 Q3.9 3 3.3 4.2" fill="none" stroke="#f4c24a" stroke-width="0.9"/></svg>
<div class="t" style="left:509.4px;top:104.3px;color:#444">Львів 79017</div>
<div class="t" style="left:562px;top:104.3px;color:#444">0501692108522</div>
<svg class="a" style="left:612.5px;top:105.2px" width="7" height="6" viewBox="0 0 7 6"><path d="M0.8 3.2 L2.6 4.9 L6.4 1" fill="none" stroke="#3a9032" stroke-width="1.25" stroke-linecap="round" stroke-linejoin="round"/></svg>
<div class="t" style="left:623px;top:104.3px;color:#444">Опт Центр</div>
<div class="t" style="left:26.6px;top:112.5px;color:#6c6c6c;font-size:5.2px">514455</div>
<div class="pill G" style="left:48.7px;top:112.8px;width:50.9px"><span>Завершений</span></div>
<svg class="a" style="left:110.3px;top:113.1px" width="9.8" height="6.2" viewBox="0 0 9.8 6.2"><rect x="0" y="0" width="9.8" height="6.2" rx="1.6" fill="#f6dc80"/><path d="M1.6 0 H8.2 Q9.8 0 9.8 1.6 V3 H0 V1.6 Q0 0 1.6 0Z" fill="#3d60ae"/><rect x="0" y="2.9" width="9.8" height="0.35" fill="#d8dce8"/></svg>
<div class="t" style="left:129.8px;top:112.5px;color:#3e3e3e">Людмила Гончарова</div>
<svg class="a" style="left:195px;top:112.7px" width="7" height="7" viewBox="0 0 7 7"><line x1="3.4" y1="3.4" x2="3.4" y2="0.6" stroke="#7ab4ec" stroke-width="0.7" stroke-linecap="round"/><line x1="3.4" y1="3.4" x2="0.98" y2="2" stroke="#7ab4ec" stroke-width="0.7" stroke-linecap="round"/><line x1="3.4" y1="3.4" x2="0.98" y2="4.8" stroke="#7ab4ec" stroke-width="0.7" stroke-linecap="round"/><line x1="3.4" y1="3.4" x2="3.4" y2="6.2" stroke="#7ab4ec" stroke-width="0.7" stroke-linecap="round"/><line x1="3.4" y1="3.4" x2="5.82" y2="4.8" stroke="#7ab4ec" stroke-width="0.7" stroke-linecap="round"/><line x1="3.4" y1="3.4" x2="5.82" y2="2" stroke="#7ab4ec" stroke-width="0.7" stroke-linecap="round"/><circle cx="3.4" cy="3.4" r="0.7" fill="#fff"/></svg>
<div class="t" style="left:203.6px;top:112.5px;color:#6a6a6a">+380</div>
<div class="t" style="left:249.2px;top:112.5px;color:#6a6a6a">8</div>
<div class="t" style="left:266.3px;top:112.5px;color:#3e3e3e">ОПХ доставка. Замочки</div>
<svg class="a" style="left:358.6px;top:112.8px" width="8" height="6" viewBox="0 0 8 6"><rect x="0.5" y="2.2" width="4.6" height="3.4" rx="0.4" fill="none" stroke="#8fbf88" stroke-width="0.8"/><path d="M2.4 3.6 Q3.6 1.4 6 0.8 Q7.6 0.8 7 2.2 Q5.6 3.6 3.4 4.2Z" fill="#2f8a2a"/></svg>
<div class="t" style="left:360px;width:29.8px;text-align:right;top:112.5px;color:#3e3e3e">136.00</div>
<div class="a" style="left:394.4px;top:113.4px;width:5.4px;height:5.4px;border-radius:1.3px;background:#979797;color:#fff;font-weight:bold;font-size:4.2px;line-height:5.6px;text-align:center">1</div>
<div class="t" style="left:402px;top:112.5px;color:#444">Корректирующие брюки Hollyw...</div>
<svg class="a" style="left:500.6px;top:112.9px" width="7" height="7" viewBox="0 0 7 7"><circle cx="3.2" cy="3.2" r="3.4" fill="#fbe4e4"/><circle cx="3.2" cy="3.2" r="1.4" fill="#fff"/><circle cx="3.2" cy="1" r="1.05" fill="#a04040"/><circle cx="3.2" cy="5.4" r="1.05" fill="#a04040"/><circle cx="1" cy="3.2" r="1" fill="#a04040"/><circle cx="5.4" cy="3.2" r="1" fill="#a04040"/></svg>
<div class="t" style="left:509.4px;top:112.5px;color:#444">Кривий Ріг від...</div>
<div class="t" style="left:562px;top:112.5px;color:#444">20400309838613</div>
<svg class="a" style="left:612.5px;top:113px" width="7" height="6.5" viewBox="0 0 7 6.5"><path d="M0.8 3.6 L2.6 5.3 L6.4 1.4" fill="none" stroke="#3a9032" stroke-width="1.25" stroke-linecap="round" stroke-linejoin="round"/><path d="M1.8 0.4 V3" stroke="#3a9032" stroke-width="0.6"/></svg>
<div class="t" style="left:623px;top:112.5px;color:#444">Опт Центр</div>
<div class="t" style="left:26.6px;top:120.7px;color:#6c6c6c;font-size:5.2px">514454</div>
<div class="pill G" style="left:48.7px;top:121px;width:50.9px"><span>Завершений</span></div>
<svg class="a" style="left:110.3px;top:121.3px" width="9.8" height="6.2" viewBox="0 0 9.8 6.2"><rect x="0" y="0" width="9.8" height="6.2" rx="1.6" fill="#f6dc80"/><path d="M1.6 0 H8.2 Q9.8 0 9.8 1.6 V3 H0 V1.6 Q0 0 1.6 0Z" fill="#3d60ae"/><rect x="0" y="2.9" width="9.8" height="0.35" fill="#d8dce8"/></svg>
<div class="t" style="left:129.8px;top:120.7px;color:#3e3e3e">Самотій Руслана Во...</div>
<svg class="a" style="left:195px;top:120.9px" width="7" height="7" viewBox="0 0 7 7"><line x1="3.4" y1="3.4" x2="3.4" y2="0.6" stroke="#7ab4ec" stroke-width="0.7" stroke-linecap="round"/><line x1="3.4" y1="3.4" x2="0.98" y2="2" stroke="#7ab4ec" stroke-width="0.7" stroke-linecap="round"/><line x1="3.4" y1="3.4" x2="0.98" y2="4.8" stroke="#7ab4ec" stroke-width="0.7" stroke-linecap="round"/><line x1="3.4" y1="3.4" x2="3.4" y2="6.2" stroke="#7ab4ec" stroke-width="0.7" stroke-linecap="round"/><line x1="3.4" y1="3.4" x2="5.82" y2="4.8" stroke="#7ab4ec" stroke-width="0.7" stroke-linecap="round"/><line x1="3.4" y1="3.4" x2="5.82" y2="2" stroke="#7ab4ec" stroke-width="0.7" stroke-linecap="round"/><circle cx="3.4" cy="3.4" r="0.7" fill="#fff"/></svg>
<div class="t" style="left:203.6px;top:120.7px;color:#6a6a6a">+380</div>
<div class="t" style="left:249.2px;top:120.7px;color:#6a6a6a">0</div>
<div class="t" style="left:266.3px;top:120.7px;color:#3e3e3e">Сірий,60-62</div>
<svg class="a" style="left:358.6px;top:121.5px" width="8" height="6" viewBox="0 0 8 6"><rect x="0.4" y="1.2" width="6.2" height="4.4" rx="0.6" fill="none" stroke="#8a8a8a" stroke-width="0.8"/><rect x="0.6" y="2.4" width="3" height="0.8" fill="#8a8a8a"/><rect x="1" y="4" width="4.6" height="0.6" fill="#b0b0b0"/><rect x="4.9" y="0.3" width="2" height="2" rx="0.4" fill="#5aa8ea"/></svg>
<div class="t" style="left:360px;width:29.8px;text-align:right;top:120.7px;color:#3e3e3e">890.00</div>
<div class="a" style="left:394.4px;top:121.6px;width:5.4px;height:5.4px;border-radius:1.3px;background:#979797;color:#fff;font-weight:bold;font-size:4.2px;line-height:5.6px;text-align:center">1</div>
<div class="t" style="left:402px;top:120.7px;color:#444">Костюм мод.265 (1шт. x 890.00 ...</div>
<svg class="a" style="left:500.6px;top:121.1px" width="7" height="7" viewBox="0 0 7 7"><circle cx="3.2" cy="3.2" r="3.4" fill="#fbe4e4"/><circle cx="3.2" cy="3.2" r="1.4" fill="#fff"/><circle cx="3.2" cy="1" r="1.05" fill="#a04040"/><circle cx="3.2" cy="5.4" r="1.05" fill="#a04040"/><circle cx="1" cy="3.2" r="1" fill="#a04040"/><circle cx="5.4" cy="3.2" r="1" fill="#a04040"/></svg>
<div class="t" style="left:509.4px;top:120.7px;color:#444">Куликів, Відділе...</div>
<div class="t" style="left:562px;top:120.7px;color:#444">20450634226619</div>
<svg class="a" style="left:612.5px;top:121.2px" width="7" height="6.5" viewBox="0 0 7 6.5"><path d="M0.8 3.6 L2.6 5.3 L6.4 1.4" fill="none" stroke="#3a9032" stroke-width="1.25" stroke-linecap="round" stroke-linejoin="round"/><path d="M1.8 0.4 V3" stroke="#3a9032" stroke-width="0.6"/></svg>
<div class="t" style="left:623px;top:120.7px;color:#444">Фішка</div>
<div class="t" style="left:26.6px;top:128.9px;color:#6c6c6c;font-size:5.2px">514453</div>
<div class="pill G" style="left:48.7px;top:129.2px;width:50.9px"><span>Завершений</span></div>
<svg class="a" style="left:110.3px;top:129.5px" width="9.8" height="6.2" viewBox="0 0 9.8 6.2"><rect x="0" y="0" width="9.8" height="6.2" rx="1.6" fill="#f6dc80"/><path d="M1.6 0 H8.2 Q9.8 0 9.8 1.6 V3 H0 V1.6 Q0 0 1.6 0Z" fill="#3d60ae"/><rect x="0" y="2.9" width="9.8" height="0.35" fill="#d8dce8"/></svg>
<div class="t" style="left:129.8px;top:128.9px;color:#3e3e3e">Нікітіна Оксана Дми...</div>
<svg class="a" style="left:195px;top:129.1px" width="7" height="7" viewBox="0 0 7 7"><line x1="3.4" y1="3.4" x2="3.4" y2="0.6" stroke="#7ab4ec" stroke-width="0.7" stroke-linecap="round"/><line x1="3.4" y1="3.4" x2="0.98" y2="2" stroke="#7ab4ec" stroke-width="0.7" stroke-linecap="round"/><line x1="3.4" y1="3.4" x2="0.98" y2="4.8" stroke="#7ab4ec" stroke-width="0.7" stroke-linecap="round"/><line x1="3.4" y1="3.4" x2="3.4" y2="6.2" stroke="#7ab4ec" stroke-width="0.7" stroke-linecap="round"/><line x1="3.4" y1="3.4" x2="5.82" y2="4.8" stroke="#7ab4ec" stroke-width="0.7" stroke-linecap="round"/><line x1="3.4" y1="3.4" x2="5.82" y2="2" stroke="#7ab4ec" stroke-width="0.7" stroke-linecap="round"/><circle cx="3.4" cy="3.4" r="0.7" fill="#fff"/></svg>
<div class="t" style="left:203.6px;top:128.9px;color:#6a6a6a">+380</div>
<div class="t" style="left:249.2px;top:128.9px;color:#6a6a6a">5</div>
<div class="t" style="left:266.3px;top:128.9px;color:#3e3e3e">28.12 смс</div>
<svg class="a" style="left:358.6px;top:129.7px" width="8" height="6" viewBox="0 0 8 6"><rect x="0.4" y="1.2" width="6.2" height="4.4" rx="0.6" fill="none" stroke="#8a8a8a" stroke-width="0.8"/><rect x="0.6" y="2.4" width="3" height="0.8" fill="#8a8a8a"/><rect x="1" y="4" width="4.6" height="0.6" fill="#b0b0b0"/><rect x="4.9" y="0.3" width="2" height="2" rx="0.4" fill="#5aa8ea"/></svg>
<div class="t" style="left:360px;width:29.8px;text-align:right;top:128.9px;color:#3e3e3e">249.00</div>
<div class="a" style="left:394.4px;top:129.8px;width:5.4px;height:5.4px;border-radius:1.3px;background:#979797;color:#fff;font-weight:bold;font-size:4.2px;line-height:5.6px;text-align:center">1</div>
<div class="t" style="left:402px;top:128.9px;color:#444">Крем Goji Berry Facial Cream *3...</div>
<svg class="a" style="left:500px;top:129.3px" width="8" height="7" viewBox="0 0 8 7"><path d="M4.4 0.5 L7 0.3 Q7.6 4.4 5 6.3 Q2.4 7.6 0.9 5.6 Q0.2 4 1.4 2.4 L2.7 3.3 Q2.1 4.4 2.8 5 Q4.4 5.6 5.1 3.4 Q5.3 1.8 4.4 0.5Z" fill="#f0b22c"/><path d="M3.4 1.6 Q3.9 3 3.3 4.2" fill="none" stroke="#f4c24a" stroke-width="0.9"/></svg>
<div class="t" style="left:509.4px;top:128.9px;color:#444">Украина, м. Де...</div>
<div class="t" style="left:562px;top:128.9px;color:#444">0503242599847</div>
<svg class="a" style="left:612.5px;top:129.8px" width="7" height="6" viewBox="0 0 7 6"><path d="M0.8 3.2 L2.6 4.9 L6.4 1" fill="none" stroke="#3a9032" stroke-width="1.25" stroke-linecap="round" stroke-linejoin="round"/></svg>
<div class="t" style="left:623px;top:128.9px;color:#444">Фішка</div>
<div class="t" style="left:26.6px;top:137.1px;color:#6c6c6c;font-size:5.2px">514452</div>
<div class="pill D" style="left:48.7px;top:137.4px;width:50.9px"><span>DO Возврат ск...</span></div>
<svg class="a" style="left:110.3px;top:137.7px" width="9.8" height="6.2" viewBox="0 0 9.8 6.2"><rect x="0" y="0" width="9.8" height="6.2" rx="1.6" fill="#f6dc80"/><path d="M1.6 0 H8.2 Q9.8 0 9.8 1.6 V3 H0 V1.6 Q0 0 1.6 0Z" fill="#3d60ae"/><rect x="0" y="2.9" width="9.8" height="0.35" fill="#d8dce8"/></svg>
<div class="t" style="left:129.8px;top:137.1px;color:#3e3e3e">Єфименко Ніна</div>
<svg class="a" style="left:195px;top:137.3px" width="7" height="7" viewBox="0 0 7 7"><line x1="3.4" y1="3.4" x2="3.4" y2="0.6" stroke="#7ab4ec" stroke-width="0.7" stroke-linecap="round"/><line x1="3.4" y1="3.4" x2="0.98" y2="2" stroke="#7ab4ec" stroke-width="0.7" stroke-linecap="round"/><line x1="3.4" y1="3.4" x2="0.98" y2="4.8" stroke="#7ab4ec" stroke-width="0.7" stroke-linecap="round"/><line x1="3.4" y1="3.4" x2="3.4" y2="6.2" stroke="#7ab4ec" stroke-width="0.7" stroke-linecap="round"/><line x1="3.4" y1="3.4" x2="5.82" y2="4.8" stroke="#7ab4ec" stroke-width="0.7" stroke-linecap="round"/><line x1="3.4" y1="3.4" x2="5.82" y2="2" stroke="#7ab4ec" stroke-width="0.7" stroke-linecap="round"/><circle cx="3.4" cy="3.4" r="0.7" fill="#fff"/></svg>
<div class="t" style="left:203.6px;top:137.1px;color:#6a6a6a">+380</div>
<div class="t" style="left:249.2px;top:137.1px;color:#6a6a6a">2</div>
<div class="t" style="left:266.3px;top:137.1px;color:#3e3e3e">23.12 смс. отправка от Сокол...</div>
<svg class="a" style="left:358.6px;top:137.9px" width="8" height="6" viewBox="0 0 8 6"><rect x="0.4" y="1.2" width="6.2" height="4.4" rx="0.6" fill="none" stroke="#8a8a8a" stroke-width="0.8"/><rect x="0.6" y="2.4" width="3" height="0.8" fill="#8a8a8a"/><rect x="1" y="4" width="4.6" height="0.6" fill="#b0b0b0"/><rect x="4.9" y="0.3" width="2" height="2" rx="0.4" fill="#5aa8ea"/></svg>
<div class="t" style="left:360px;width:29.8px;text-align:right;top:137.1px;color:#3e3e3e">920.00</div>
<div class="a" style="left:394.4px;top:138px;width:5.4px;height:5.4px;border-radius:1.3px;background:#979797;color:#fff;font-weight:bold;font-size:4.2px;line-height:5.6px;text-align:center">1</div>
<div class="t" style="left:402px;top:137.1px;color:#444">Костюм мод.233 разм.48-58 (1...</div>
<svg class="a" style="left:500.6px;top:137.5px" width="7" height="7" viewBox="0 0 7 7"><circle cx="3.2" cy="3.2" r="3.4" fill="#fbe4e4"/><circle cx="3.2" cy="3.2" r="1.4" fill="#fff"/><circle cx="3.2" cy="1" r="1.05" fill="#a04040"/><circle cx="3.2" cy="5.4" r="1.05" fill="#a04040"/><circle cx="1" cy="3.2" r="1" fill="#a04040"/><circle cx="5.4" cy="3.2" r="1" fill="#a04040"/></svg>
<div class="t" style="left:509.4px;top:137.1px;color:#444">Цумань, Відділ...</div>
<div class="t" style="left:562px;top:137.1px;color:#444">20450636613955</div>
<svg class="a" style="left:612px;top:138.2px" width="8" height="5" viewBox="0 0 8 5"><path d="M0.4 2.4 H4" stroke="#e0a0a0" stroke-width="0.7"/><path d="M4.4 0.8 L6.6 3.6 M6.6 0.8 L4.4 3.6" stroke="#c85050" stroke-width="0.8"/></svg>
<div class="t" style="left:623px;top:137.1px;color:#444">Фішка</div>
<div class="t" style="left:26.6px;top:145.3px;color:#6c6c6c;font-size:5.2px">514451</div>
<div class="pill G" style="left:48.7px;top:145.6px;width:50.9px"><span>Завершений</span></div>
<svg class="a" style="left:110.3px;top:145.9px" width="9.8" height="6.2" viewBox="0 0 9.8 6.2"><rect x="0" y="0" width="9.8" height="6.2" rx="1.6" fill="#f6dc80"/><path d="M1.6 0 H8.2 Q9.8 0 9.8 1.6 V3 H0 V1.6 Q0 0 1.6 0Z" fill="#3d60ae"/><rect x="0" y="2.9" width="9.8" height="0.35" fill="#d8dce8"/></svg>
<div class="t" style="left:129.8px;top:145.3px;color:#3e3e3e">Іващенко Юлія</div>
<svg class="a" style="left:195px;top:145.5px" width="7" height="7" viewBox="0 0 7 7"><line x1="3.4" y1="3.4" x2="3.4" y2="0.6" stroke="#7ab4ec" stroke-width="0.7" stroke-linecap="round"/><line x1="3.4" y1="3.4" x2="0.98" y2="2" stroke="#7ab4ec" stroke-width="0.7" stroke-linecap="round"/><line x1="3.4" y1="3.4" x2="0.98" y2="4.8" stroke="#7ab4ec" stroke-width="0.7" stroke-linecap="round"/><line x1="3.4" y1="3.4" x2="3.4" y2="6.2" stroke="#7ab4ec" stroke-width="0.7" stroke-linecap="round"/><line x1="3.4" y1="3.4" x2="5.82" y2="4.8" stroke="#7ab4ec" stroke-width="0.7" stroke-linecap="round"/><line x1="3.4" y1="3.4" x2="5.82" y2="2" stroke="#7ab4ec" stroke-width="0.7" stroke-linecap="round"/><circle cx="3.4" cy="3.4" r="0.7" fill="#fff"/></svg>
<div class="t" style="left:203.6px;top:145.3px;color:#6a6a6a">+380</div>
<div class="t" style="left:249.2px;top:145.3px;color:#6a6a6a">2</div>
<div class="t" style="left:266.3px;top:145.3px;color:#3e3e3e">19.12 14-18 завтра Бордо 56-58</div>
<svg class="a" style="left:358.6px;top:146.1px" width="8" height="6" viewBox="0 0 8 6"><rect x="0.4" y="1.2" width="6.2" height="4.4" rx="0.6" fill="none" stroke="#8a8a8a" stroke-width="0.8"/><rect x="0.6" y="2.4" width="3" height="0.8" fill="#8a8a8a"/><rect x="1" y="4" width="4.6" height="0.6" fill="#b0b0b0"/><rect x="4.9" y="0.3" width="2" height="2" rx="0.4" fill="#5aa8ea"/></svg>
<div class="t" style="left:360px;width:29.8px;text-align:right;top:145.3px;color:#3e3e3e">830.00</div>
<div class="a" style="left:394.4px;top:146.2px;width:5.4px;height:5.4px;border-radius:1.3px;background:#979797;color:#fff;font-weight:bold;font-size:4.2px;line-height:5.6px;text-align:center">1</div>
<div class="t" style="left:402px;top:145.3px;color:#444">Куртка Замш Мод. 250 (1шт. x 8...</div>
<svg class="a" style="left:500.6px;top:145.7px" width="7" height="7" viewBox="0 0 7 7"><circle cx="3.2" cy="3.2" r="3.4" fill="#fbe4e4"/><circle cx="3.2" cy="3.2" r="1.4" fill="#fff"/><circle cx="3.2" cy="1" r="1.05" fill="#a04040"/><circle cx="3.2" cy="5.4" r="1.05" fill="#a04040"/><circle cx="1" cy="3.2" r="1" fill="#a04040"/><circle cx="5.4" cy="3.2" r="1" fill="#a04040"/></svg>
<div class="t" style="left:509.4px;top:145.3px;color:#444">Пристроми, Пу...</div>
<div class="t" style="left:562px;top:145.3px;color:#444">20450634098760</div>
<svg class="a" style="left:612.4px;top:145.6px" width="8" height="6" viewBox="0 0 8 6"><rect x="0.5" y="2.2" width="4.6" height="3.4" rx="0.4" fill="none" stroke="#8fbf88" stroke-width="0.8"/><path d="M2.4 3.6 Q3.6 1.4 6 0.8 Q7.6 0.8 7 2.2 Q5.6 3.6 3.4 4.2Z" fill="#2f8a2a"/></svg>
<div class="t" style="left:623px;top:145.3px;color:#444">Фішка</div>
<div class="t" style="left:26.6px;top:153.5px;color:#6c6c6c;font-size:5.2px">514450</div>
<div class="pill P" style="left:48.7px;top:153.8px;width:50.9px"><span>Відмова</span></div>
<svg class="a" style="left:92.4px;top:154.2px" width="6" height="6" viewBox="0 0 6 6"><circle cx="2.9" cy="2.9" r="2.4" fill="none" stroke="#8a5560" stroke-width="0.7"/><rect x="2.6" y="1.5" width="0.6" height="1.8" fill="#8a5560"/><rect x="2.6" y="3.8" width="0.6" height="0.6" fill="#8a5560"/></svg>
<svg class="a" style="left:110.3px;top:154.1px" width="9.8" height="6.2" viewBox="0 0 9.8 6.2"><rect x="0" y="0" width="9.8" height="6.2" rx="1.6" fill="#f6dc80"/><path d="M1.6 0 H8.2 Q9.8 0 9.8 1.6 V3 H0 V1.6 Q0 0 1.6 0Z" fill="#3d60ae"/><rect x="0" y="2.9" width="9.8" height="0.35" fill="#d8dce8"/></svg>
<div class="t" style="left:129.8px;top:153.5px;color:#3e3e3e">Ковальова анна</div>
<svg class="a" style="left:195px;top:153.7px" width="7" height="7" viewBox="0 0 7 7"><line x1="3.4" y1="3.4" x2="3.4" y2="0.6" stroke="#7ab4ec" stroke-width="0.7" stroke-linecap="round"/><line x1="3.4" y1="3.4" x2="0.98" y2="2" stroke="#7ab4ec" stroke-width="0.7" stroke-linecap="round"/><line x1="3.4" y1="3.4" x2="0.98" y2="4.8" stroke="#7ab4ec" stroke-width="0.7" stroke-linecap="round"/><line x1="3.4" y1="3.4" x2="3.4" y2="6.2" stroke="#7ab4ec" stroke-width="0.7" stroke-linecap="round"/><line x1="3.4" y1="3.4" x2="5.82" y2="4.8" stroke="#7ab4ec" stroke-width="0.7" stroke-linecap="round"/><line x1="3.4" y1="3.4" x2="5.82" y2="2" stroke="#7ab4ec" stroke-width="0.7" stroke-linecap="round"/><circle cx="3.4" cy="3.4" r="0.7" fill="#fff"/></svg>
<div class="t" style="left:203.6px;top:153.5px;color:#6a6a6a">+380</div>
<div class="t" style="left:249.2px;top:153.5px;color:#6a6a6a">8</div>
<div class="t" style="left:266.3px;top:153.5px;color:#3e3e3e">15.12. 9:45 не отв, 10:39 горе в...</div>
<svg class="a" style="left:358.6px;top:154.3px" width="8" height="6" viewBox="0 0 8 6"><rect x="0.4" y="1.2" width="6.2" height="4.4" rx="0.6" fill="none" stroke="#8a8a8a" stroke-width="0.8"/><rect x="0.6" y="2.4" width="3" height="0.8" fill="#8a8a8a"/><rect x="1" y="4" width="4.6" height="0.6" fill="#b0b0b0"/><rect x="4.9" y="0.3" width="2" height="2" rx="0.4" fill="#5aa8ea"/></svg>
<div class="t" style="left:360px;width:29.8px;text-align:right;top:153.5px;color:#3e3e3e">599.00</div>
<div class="a" style="left:394.4px;top:154.4px;width:5.4px;height:5.4px;border-radius:1.3px;background:#979797;color:#fff;font-weight:bold;font-size:4.2px;line-height:5.6px;text-align:center">1</div>
<div class="t" style="left:402px;top:153.5px;color:#444">Платье Мод 1013 (1шт. x 599.00 ...</div>
<div class="t" style="left:509.4px;top:153.5px;color:#444"></div>
<div class="t" style="left:562px;top:153.5px;color:#444"></div>
<div class="t" style="left:623px;top:153.5px;color:#444">Фішка</div>
<div class="t" style="left:26.6px;top:161.7px;color:#6c6c6c;font-size:5.2px">514449</div>
<div class="pill D" style="left:48.7px;top:162px;width:50.9px"><span>DO Возврат ск...</span></div>
<svg class="a" style="left:110.3px;top:162.3px" width="9.8" height="6.2" viewBox="0 0 9.8 6.2"><rect x="0" y="0" width="9.8" height="6.2" rx="1.6" fill="#f6dc80"/><path d="M1.6 0 H8.2 Q9.8 0 9.8 1.6 V3 H0 V1.6 Q0 0 1.6 0Z" fill="#3d60ae"/><rect x="0" y="2.9" width="9.8" height="0.35" fill="#d8dce8"/></svg>
<div class="t" style="left:129.8px;top:161.7px;color:#3e3e3e">Власюк Наталья</div>
<svg class="a" style="left:195px;top:161.9px" width="7" height="7" viewBox="0 0 7 7"><line x1="3.4" y1="3.4" x2="3.4" y2="0.6" stroke="#7ab4ec" stroke-width="0.7" stroke-linecap="round"/><line x1="3.4" y1="3.4" x2="0.98" y2="2" stroke="#7ab4ec" stroke-width="0.7" stroke-linecap="round"/><line x1="3.4" y1="3.4" x2="0.98" y2="4.8" stroke="#7ab4ec" stroke-width="0.7" stroke-linecap="round"/><line x1="3.4" y1="3.4" x2="3.4" y2="6.2" stroke="#7ab4ec" stroke-width="0.7" stroke-linecap="round"/><line x1="3.4" y1="3.4" x2="5.82" y2="4.8" stroke="#7ab4ec" stroke-width="0.7" stroke-linecap="round"/><line x1="3.4" y1="3.4" x2="5.82" y2="2" stroke="#7ab4ec" stroke-width="0.7" stroke-linecap="round"/><circle cx="3.4" cy="3.4" r="0.7" fill="#fff"/></svg>
<div class="t" style="left:203.6px;top:161.7px;color:#6a6a6a">+380</div>
<div class="t" style="left:249.2px;top:161.7px;color:#6a6a6a">3</div>
<div class="t" style="left:266.3px;top:161.7px;color:#3e3e3e">Серый 52-54 уехала с города</div>
<svg class="a" style="left:358.6px;top:162.5px" width="8" height="6" viewBox="0 0 8 6"><rect x="0.4" y="1.2" width="6.2" height="4.4" rx="0.6" fill="none" stroke="#8a8a8a" stroke-width="0.8"/><rect x="0.6" y="2.4" width="3" height="0.8" fill="#8a8a8a"/><rect x="1" y="4" width="4.6" height="0.6" fill="#b0b0b0"/><rect x="4.9" y="0.3" width="2" height="2" rx="0.4" fill="#5aa8ea"/></svg>
<div class="t" style="left:360px;width:29.8px;text-align:right;top:161.7px;color:#3e3e3e">890.00</div>
<div class="a" style="left:394.4px;top:162.6px;width:5.4px;height:5.4px;border-radius:1.3px;background:#979797;color:#fff;font-weight:bold;font-size:4.2px;line-height:5.6px;text-align:center">1</div>
<div class="t" style="left:402px;top:161.7px;color:#444">Костюм мод.265 (1шт. x 890.00 ...</div>
<svg class="a" style="left:500.6px;top:162.1px" width="7" height="7" viewBox="0 0 7 7"><circle cx="3.2" cy="3.2" r="3.4" fill="#fbe4e4"/><circle cx="3.2" cy="3.2" r="1.4" fill="#fff"/><circle cx="3.2" cy="1" r="1.05" fill="#a04040"/><circle cx="3.2" cy="5.4" r="1.05" fill="#a04040"/><circle cx="1" cy="3.2" r="1" fill="#a04040"/><circle cx="5.4" cy="3.2" r="1" fill="#a04040"/></svg>
<div class="t" style="left:509.4px;top:161.7px;color:#444">Камянське(Дні...</div>
<div class="t" style="left:562px;top:161.7px;color:#444">20450634220880</div>
<svg class="a" style="left:612px;top:162.8px" width="8" height="5" viewBox="0 0 8 5"><path d="M0.4 2.4 H4" stroke="#e0a0a0" stroke-width="0.7"/><path d="M4.4 0.8 L6.6 3.6 M6.6 0.8 L4.4 3.6" stroke="#c85050" stroke-width="0.8"/></svg>
<div class="t" style="left:623px;top:161.7px;color:#444">Фішка</div>
<div class="t" style="left:26.6px;top:169.9px;color:#6c6c6c;font-size:5.2px">514448</div>
<div class="pill G" style="left:48.7px;top:170.2px;width:50.9px"><span>Завершений</span></div>
<svg class="a" style="left:110.3px;top:170.5px" width="9.8" height="6.2" viewBox="0 0 9.8 6.2"><rect x="0" y="0" width="9.8" height="6.2" rx="1.6" fill="#f6dc80"/><path d="M1.6 0 H8.2 Q9.8 0 9.8 1.6 V3 H0 V1.6 Q0 0 1.6 0Z" fill="#3d60ae"/><rect x="0" y="2.9" width="9.8" height="0.35" fill="#d8dce8"/></svg>
<div class="t" style="left:129.8px;top:169.9px;color:#3e3e3e">Микола Бадражан</div>
<svg class="a" style="left:194.9px;top:170px" width="7" height="7" viewBox="0 0 7 7"><circle cx="3.5" cy="3.5" r="2.8" fill="#fff" stroke="#c8322a" stroke-width="1.3"/><path d="M4 1.6 Q2.2 2.2 2.3 3.9 Q2.6 5.2 3.8 5 Q4.9 4.6 4.6 3.3 Q3.7 3 4 1.6Z" fill="#c8322a"/></svg>
<div class="t" style="left:203.6px;top:169.9px;color:#6a6a6a">+380</div>
<div class="t" style="left:249.2px;top:169.9px;color:#6a6a6a">7</div>
<div class="t" style="left:266.3px;top:169.9px;color:#3e3e3e">ОПХ доставка</div>
<svg class="a" style="left:358.6px;top:170.2px" width="8" height="6" viewBox="0 0 8 6"><rect x="0.5" y="2.2" width="4.6" height="3.4" rx="0.4" fill="none" stroke="#8fbf88" stroke-width="0.8"/><path d="M2.4 3.6 Q3.6 1.4 6 0.8 Q7.6 0.8 7 2.2 Q5.6 3.6 3.4 4.2Z" fill="#2f8a2a"/></svg>
<div class="t" style="left:360px;width:29.8px;text-align:right;top:169.9px;color:#3e3e3e">151.00</div>
<div class="a" style="left:394.4px;top:170.8px;width:5.4px;height:5.4px;border-radius:1.3px;background:#979797;color:#fff;font-weight:bold;font-size:4.2px;line-height:5.6px;text-align:center">1</div>
<div class="t" style="left:402px;top:169.9px;color:#444">Маленькая видеокамера SQ8 *...</div>
<svg class="a" style="left:500px;top:170.3px" width="8" height="7" viewBox="0 0 8 7"><path d="M4.4 0.5 L7 0.3 Q7.6 4.4 5 6.3 Q2.4 7.6 0.9 5.6 Q0.2 4 1.4 2.4 L2.7 3.3 Q2.1 4.4 2.8 5 Q4.4 5.6 5.1 3.4 Q5.3 1.8 4.4 0.5Z" fill="#f0b22c"/><path d="M3.4 1.6 Q3.9 3 3.3 4.2" fill="none" stroke="#f4c24a" stroke-width="0.9"/></svg>
<div class="t" style="left:509.4px;top:169.9px;color:#444">Устинівка 28600</div>
<div class="t" style="left:562px;top:169.9px;color:#444">0501691666521</div>
<svg class="a" style="left:612.5px;top:170.8px" width="7" height="6" viewBox="0 0 7 6"><path d="M0.8 3.2 L2.6 4.9 L6.4 1" fill="none" stroke="#3a9032" stroke-width="1.25" stroke-linecap="round" stroke-linejoin="round"/></svg>
<div class="t" style="left:623px;top:169.9px;color:#444">Опт Центр</div>
<div class="t" style="left:26.6px;top:178.1px;color:#6c6c6c;font-size:5.2px">514447</div>
<div class="pill G" style="left:48.7px;top:178.4px;width:50.9px"><span>Завершений</span></div>
<svg class="a" style="left:110.3px;top:178.7px" width="9.8" height="6.2" viewBox="0 0 9.8 6.2"><rect x="0" y="0" width="9.8" height="6.2" rx="1.6" fill="#f6dc80"/><path d="M1.6 0 H8.2 Q9.8 0 9.8 1.6 V3 H0 V1.6 Q0 0 1.6 0Z" fill="#3d60ae"/><rect x="0" y="2.9" width="9.8" height="0.35" fill="#d8dce8"/></svg>
<div class="t" style="left:129.8px;top:178.1px;color:#3e3e3e">Микола Бадражан</div>
<svg class="a" style="left:194.9px;top:178.2px" width="7" height="7" viewBox="0 0 7 7"><circle cx="3.5" cy="3.5" r="2.8" fill="#fff" stroke="#c8322a" stroke-width="1.3"/><path d="M4 1.6 Q2.2 2.2 2.3 3.9 Q2.6 5.2 3.8 5 Q4.9 4.6 4.6 3.3 Q3.7 3 4 1.6Z" fill="#c8322a"/></svg>
<div class="t" style="left:203.6px;top:178.1px;color:#6a6a6a">+380</div>
<div class="t" style="left:249.2px;top:178.1px;color:#6a6a6a">7</div>
<div class="t" style="left:266.3px;top:178.1px;color:#3e3e3e">ОПХ доставка</div>
<svg class="a" style="left:358.6px;top:178.4px" width="8" height="6" viewBox="0 0 8 6"><rect x="0.5" y="2.2" width="4.6" height="3.4" rx="0.4" fill="none" stroke="#8fbf88" stroke-width="0.8"/><path d="M2.4 3.6 Q3.6 1.4 6 0.8 Q7.6 0.8 7 2.2 Q5.6 3.6 3.4 4.2Z" fill="#2f8a2a"/></svg>
<div class="t" style="left:360px;width:29.8px;text-align:right;top:178.1px;color:#3e3e3e">99.00</div>
<div class="a" style="left:394.4px;top:179px;width:5.4px;height:5.4px;border-radius:1.3px;background:#979797;color:#fff;font-weight:bold;font-size:4.2px;line-height:5.6px;text-align:center">1</div>
<div class="t" style="left:402px;top:178.1px;color:#444">Карта памяти 10 класс - 32Гб *1...</div>
<svg class="a" style="left:500px;top:178.5px" width="8" height="7" viewBox="0 0 8 7"><path d="M4.4 0.5 L7 0.3 Q7.6 4.4 5 6.3 Q2.4 7.6 0.9 5.6 Q0.2 4 1.4 2.4 L2.7 3.3 Q2.1 4.4 2.8 5 Q4.4 5.6 5.1 3.4 Q5.3 1.8 4.4 0.5Z" fill="#f0b22c"/><path d="M3.4 1.6 Q3.9 3 3.3 4.2" fill="none" stroke="#f4c24a" stroke-width="0.9"/></svg>
<div class="t" style="left:509.4px;top:178.1px;color:#444">Устинівка 28600</div>
<div class="t" style="left:562px;top:178.1px;color:#444">0501691665630</div>
<svg class="a" style="left:612.5px;top:179px" width="7" height="6" viewBox="0 0 7 6"><path d="M0.8 3.2 L2.6 4.9 L6.4 1" fill="none" stroke="#3a9032" stroke-width="1.25" stroke-linecap="round" stroke-linejoin="round"/></svg>
<div class="t" style="left:623px;top:178.1px;color:#444">Опт Центр</div>
<div class="t" style="left:26.6px;top:186.3px;color:#6c6c6c;font-size:5.2px">514446</div>
<div class="pill G" style="left:48.7px;top:186.6px;width:50.9px"><span>Завершений</span></div>
<svg class="a" style="left:110.3px;top:186.9px" width="9.8" height="6.2" viewBox="0 0 9.8 6.2"><rect x="0" y="0" width="9.8" height="6.2" rx="1.6" fill="#f6dc80"/><path d="M1.6 0 H8.2 Q9.8 0 9.8 1.6 V3 H0 V1.6 Q0 0 1.6 0Z" fill="#3d60ae"/><rect x="0" y="2.9" width="9.8" height="0.35" fill="#d8dce8"/></svg>
<div class="t" style="left:129.8px;top:186.3px;color:#3e3e3e">Ирина Дидух</div>
<svg class="a" style="left:195px;top:186.5px" width="7" height="7" viewBox="0 0 7 7"><line x1="3.4" y1="3.4" x2="3.4" y2="0.6" stroke="#7ab4ec" stroke-width="0.7" stroke-linecap="round"/><line x1="3.4" y1="3.4" x2="0.98" y2="2" stroke="#7ab4ec" stroke-width="0.7" stroke-linecap="round"/><line x1="3.4" y1="3.4" x2="0.98" y2="4.8" stroke="#7ab4ec" stroke-width="0.7" stroke-linecap="round"/><line x1="3.4" y1="3.4" x2="3.4" y2="6.2" stroke="#7ab4ec" stroke-width="0.7" stroke-linecap="round"/><line x1="3.4" y1="3.4" x2="5.82" y2="4.8" stroke="#7ab4ec" stroke-width="0.7" stroke-linecap="round"/><line x1="3.4" y1="3.4" x2="5.82" y2="2" stroke="#7ab4ec" stroke-width="0.7" stroke-linecap="round"/><circle cx="3.4" cy="3.4" r="0.7" fill="#fff"/></svg>
<div class="t" style="left:203.6px;top:186.3px;color:#6a6a6a">+380</div>
<div class="t" style="left:249.2px;top:186.3px;color:#6a6a6a">7</div>
<div class="t" style="left:266.3px;top:186.3px;color:#3e3e3e">09.01 звернення 10471203 04...</div>
<svg class="a" style="left:358.6px;top:186.6px" width="8" height="6" viewBox="0 0 8 6"><rect x="0.5" y="2.2" width="4.6" height="3.4" rx="0.4" fill="none" stroke="#8fbf88" stroke-width="0.8"/><path d="M2.4 3.6 Q3.6 1.4 6 0.8 Q7.6 0.8 7 2.2 Q5.6 3.6 3.4 4.2Z" fill="#2f8a2a"/></svg>
<div class="t" style="left:360px;width:29.8px;text-align:right;top:186.3px;color:#3e3e3e">60.00</div>
<div class="a" style="left:394.4px;top:187.2px;width:5.4px;height:5.4px;border-radius:1.3px;background:#979797;color:#fff;font-weight:bold;font-size:4.2px;line-height:5.6px;text-align:center">1</div>
<div class="t" style="left:402px;top:186.3px;color:#444">Детский развивающий констру...</div>
<svg class="a" style="left:500px;top:186.7px" width="8" height="7" viewBox="0 0 8 7"><path d="M4.4 0.5 L7 0.3 Q7.6 4.4 5 6.3 Q2.4 7.6 0.9 5.6 Q0.2 4 1.4 2.4 L2.7 3.3 Q2.1 4.4 2.8 5 Q4.4 5.6 5.1 3.4 Q5.3 1.8 4.4 0.5Z" fill="#f0b22c"/><path d="M3.4 1.6 Q3.9 3 3.3 4.2" fill="none" stroke="#f4c24a" stroke-width="0.9"/></svg>
<div class="t" style="left:509.4px;top:186.3px;color:#444">Жеребкове 664...</div>
<div class="t" style="left:562px;top:186.3px;color:#444">0501691651656</div>
<svg class="a" style="left:612.5px;top:187.2px" width="7" height="6" viewBox="0 0 7 6"><path d="M0.8 3.2 L2.6 4.9 L6.4 1" fill="none" stroke="#3a9032" stroke-width="1.25" stroke-linecap="round" stroke-linejoin="round"/></svg>
<div class="t" style="left:623px;top:186.3px;color:#444">Опт Центр</div>
<div class="t" style="left:26.6px;top:194.5px;color:#6c6c6c;font-size:5.2px">514445</div>
<div class="pill G" style="left:48.7px;top:194.8px;width:50.9px"><span>Завершений</span></div>
<svg class="a" style="left:110.3px;top:195.1px" width="9.8" height="6.2" viewBox="0 0 9.8 6.2"><rect x="0" y="0" width="9.8" height="6.2" rx="1.6" fill="#f6dc80"/><path d="M1.6 0 H8.2 Q9.8 0 9.8 1.6 V3 H0 V1.6 Q0 0 1.6 0Z" fill="#3d60ae"/><rect x="0" y="2.9" width="9.8" height="0.35" fill="#d8dce8"/></svg>
<div class="t" style="left:129.8px;top:194.5px;color:#3e3e3e">Ольга Божик</div>
<svg class="a" style="left:195px;top:194.7px" width="7" height="7" viewBox="0 0 7 7"><line x1="3.4" y1="3.4" x2="3.4" y2="0.6" stroke="#7ab4ec" stroke-width="0.7" stroke-linecap="round"/><line x1="3.4" y1="3.4" x2="0.98" y2="2" stroke="#7ab4ec" stroke-width="0.7" stroke-linecap="round"/><line x1="3.4" y1="3.4" x2="0.98" y2="4.8" stroke="#7ab4ec" stroke-width="0.7" stroke-linecap="round"/><line x1="3.4" y1="3.4" x2="3.4" y2="6.2" stroke="#7ab4ec" stroke-width="0.7" stroke-linecap="round"/><line x1="3.4" y1="3.4" x2="5.82" y2="4.8" stroke="#7ab4ec" stroke-width="0.7" stroke-linecap="round"/><line x1="3.4" y1="3.4" x2="5.82" y2="2" stroke="#7ab4ec" stroke-width="0.7" stroke-linecap="round"/><circle cx="3.4" cy="3.4" r="0.7" fill="#fff"/></svg>
<div class="t" style="left:203.6px;top:194.5px;color:#6a6a6a">+380</div>
<div class="t" style="left:249.2px;top:194.5px;color:#6a6a6a">9</div>
<div class="t" style="left:266.3px;top:194.5px;color:#3e3e3e">23.12 смс. ОПХ доставка</div>
<svg class="a" style="left:358.6px;top:194.8px" width="8" height="6" viewBox="0 0 8 6"><rect x="0.5" y="2.2" width="4.6" height="3.4" rx="0.4" fill="none" stroke="#8fbf88" stroke-width="0.8"/><path d="M2.4 3.6 Q3.6 1.4 6 0.8 Q7.6 0.8 7 2.2 Q5.6 3.6 3.4 4.2Z" fill="#2f8a2a"/></svg>
<div class="t" style="left:360px;width:29.8px;text-align:right;top:194.5px;color:#3e3e3e">60.00</div>
<div class="a" style="left:394.4px;top:195.4px;width:5.4px;height:5.4px;border-radius:1.3px;background:#979797;color:#fff;font-weight:bold;font-size:4.2px;line-height:5.6px;text-align:center">1</div>
<div class="t" style="left:402px;top:194.5px;color:#444">Детский развивающий констру...</div>
<svg class="a" style="left:500px;top:194.9px" width="8" height="7" viewBox="0 0 8 7"><path d="M4.4 0.5 L7 0.3 Q7.6 4.4 5 6.3 Q2.4 7.6 0.9 5.6 Q0.2 4 1.4 2.4 L2.7 3.3 Q2.1 4.4 2.8 5 Q4.4 5.6 5.1 3.4 Q5.3 1.8 4.4 0.5Z" fill="#f0b22c"/><path d="M3.4 1.6 Q3.9 3 3.3 4.2" fill="none" stroke="#f4c24a" stroke-width="0.9"/></svg>
<div class="t" style="left:509.4px;top:194.5px;color:#444">Львів 79053</div>
<div class="t" style="left:562px;top:194.5px;color:#444">0501691598240</div>
<svg class="a" style="left:612.5px;top:195.4px" width="7" height="6" viewBox="0 0 7 6"><path d="M0.8 3.2 L2.6 4.9 L6.4 1" fill="none" stroke="#3a9032" stroke-width="1.25" stroke-linecap="round" stroke-linejoin="round"/></svg>
<div class="t" style="left:623px;top:194.5px;color:#444">Опт Центр</div>
<div class="t" style="left:26.6px;top:202.7px;color:#6c6c6c;font-size:5.2px">514444</div>
<div class="pill G" style="left:48.7px;top:203px;width:50.9px"><span>Завершений</span></div>
<svg class="a" style="left:110.3px;top:203.3px" width="9.8" height="6.2" viewBox="0 0 9.8 6.2"><rect x="0" y="0" width="9.8" height="6.2" rx="1.6" fill="#f6dc80"/><path d="M1.6 0 H8.2 Q9.8 0 9.8 1.6 V3 H0 V1.6 Q0 0 1.6 0Z" fill="#3d60ae"/><rect x="0" y="2.9" width="9.8" height="0.35" fill="#d8dce8"/></svg>
<div class="t" style="left:129.8px;top:202.7px;color:#3e3e3e">Анна Липенська</div>
<svg class="a" style="left:194.9px;top:202.8px" width="7" height="7" viewBox="0 0 7 7"><circle cx="3.5" cy="3.5" r="2.8" fill="#fff" stroke="#c8322a" stroke-width="1.3"/><path d="M4 1.6 Q2.2 2.2 2.3 3.9 Q2.6 5.2 3.8 5 Q4.9 4.6 4.6 3.3 Q3.7 3 4 1.6Z" fill="#c8322a"/></svg>
<div class="t" style="left:203.6px;top:202.7px;color:#6a6a6a">+380</div>
<div class="t" style="left:249.2px;top:202.7px;color:#6a6a6a">3</div>
<div class="t" style="left:266.3px;top:202.7px;color:#3e3e3e">22.12 смс ОПХ доставка</div>
<svg class="a" style="left:358.6px;top:203px" width="8" height="6" viewBox="0 0 8 6"><rect x="0.5" y="2.2" width="4.6" height="3.4" rx="0.4" fill="none" stroke="#8fbf88" stroke-width="0.8"/><path d="M2.4 3.6 Q3.6 1.4 6 0.8 Q7.6 0.8 7 2.2 Q5.6 3.6 3.4 4.2Z" fill="#2f8a2a"/></svg>
<div class="t" style="left:360px;width:29.8px;text-align:right;top:202.7px;color:#3e3e3e">75.00</div>
<div class="a" style="left:394.4px;top:203.6px;width:5.4px;height:5.4px;border-radius:1.3px;background:#979797;color:#fff;font-weight:bold;font-size:4.2px;line-height:5.6px;text-align:center">1</div>
<div class="t" style="left:402px;top:202.7px;color:#444">Детский развивающий констру...</div>
<svg class="a" style="left:500px;top:203.1px" width="8" height="7" viewBox="0 0 8 7"><path d="M4.4 0.5 L7 0.3 Q7.6 4.4 5 6.3 Q2.4 7.6 0.9 5.6 Q0.2 4 1.4 2.4 L2.7 3.3 Q2.1 4.4 2.8 5 Q4.4 5.6 5.1 3.4 Q5.3 1.8 4.4 0.5Z" fill="#f0b22c"/><path d="M3.4 1.6 Q3.9 3 3.3 4.2" fill="none" stroke="#f4c24a" stroke-width="0.9"/></svg>
<div class="t" style="left:509.4px;top:202.7px;color:#444">Житомир, Жито...</div>
<div class="t" style="left:562px;top:202.7px;color:#444">0501691571229</div>
<svg class="a" style="left:612.5px;top:203.6px" width="7" height="6" viewBox="0 0 7 6"><path d="M0.8 3.2 L2.6 4.9 L6.4 1" fill="none" stroke="#3a9032" stroke-width="1.25" stroke-linecap="round" stroke-linejoin="round"/></svg>
<div class="t" style="left:623px;top:202.7px;color:#444">Опт Центр</div>
<div class="t" style="left:26.6px;top:210.9px;color:#6c6c6c;font-size:5.2px">514443</div>
<div class="pill G" style="left:48.7px;top:211.2px;width:50.9px"><span>Завершений</span></div>
<svg class="a" style="left:110.3px;top:211.5px" width="9.8" height="6.2" viewBox="0 0 9.8 6.2"><rect x="0" y="0" width="9.8" height="6.2" rx="1.6" fill="#f6dc80"/><path d="M1.6 0 H8.2 Q9.8 0 9.8 1.6 V3 H0 V1.6 Q0 0 1.6 0Z" fill="#3d60ae"/><rect x="0" y="2.9" width="9.8" height="0.35" fill="#d8dce8"/></svg>
<div class="t" style="left:129.8px;top:210.9px;color:#3e3e3e">Віктор Власов</div>
<svg class="a" style="left:194.9px;top:211px" width="7" height="7" viewBox="0 0 7 7"><circle cx="3.5" cy="3.5" r="2.8" fill="#fff" stroke="#c8322a" stroke-width="1.3"/><path d="M4 1.6 Q2.2 2.2 2.3 3.9 Q2.6 5.2 3.8 5 Q4.9 4.6 4.6 3.3 Q3.7 3 4 1.6Z" fill="#c8322a"/></svg>
<div class="t" style="left:203.6px;top:210.9px;color:#6a6a6a">+380</div>
<div class="t" style="left:249.2px;top:210.9px;color:#6a6a6a">5</div>
<div class="t" style="left:266.3px;top:210.9px;color:#3e3e3e">ОПХ доставка</div>
<svg class="a" style="left:358.6px;top:211.2px" width="8" height="6" viewBox="0 0 8 6"><rect x="0.5" y="2.2" width="4.6" height="3.4" rx="0.4" fill="none" stroke="#8fbf88" stroke-width="0.8"/><path d="M2.4 3.6 Q3.6 1.4 6 0.8 Q7.6 0.8 7 2.2 Q5.6 3.6 3.4 4.2Z" fill="#2f8a2a"/></svg>
<div class="t" style="left:360px;width:29.8px;text-align:right;top:210.9px;color:#3e3e3e">151.00</div>
<div class="a" style="left:394.4px;top:211.8px;width:5.4px;height:5.4px;border-radius:1.3px;background:#979797;color:#fff;font-weight:bold;font-size:4.2px;line-height:5.6px;text-align:center">1</div>
<div class="t" style="left:402px;top:210.9px;color:#444">Маленькая видеокамера SQ8 *...</div>
<svg class="a" style="left:500.6px;top:211.3px" width="7" height="7" viewBox="0 0 7 7"><circle cx="3.2" cy="3.2" r="3.4" fill="#fbe4e4"/><circle cx="3.2" cy="3.2" r="1.4" fill="#fff"/><circle cx="3.2" cy="1" r="1.05" fill="#a04040"/><circle cx="3.2" cy="5.4" r="1.05" fill="#a04040"/><circle cx="1" cy="3.2" r="1" fill="#a04040"/><circle cx="5.4" cy="3.2" r="1" fill="#a04040"/></svg>
<div class="t" style="left:509.4px;top:210.9px;color:#444">Хомутець від 1</div>
<div class="t" style="left:562px;top:210.9px;color:#444">20400309671628</div>
<svg class="a" style="left:612.5px;top:211.8px" width="7" height="6" viewBox="0 0 7 6"><path d="M0.8 3.2 L2.6 4.9 L6.4 1" fill="none" stroke="#3a9032" stroke-width="1.25" stroke-linecap="round" stroke-linejoin="round"/></svg>
<div class="t" style="left:623px;top:210.9px;color:#444">Опт Центр</div>
<div class="t" style="left:26.6px;top:219.1px;color:#6c6c6c;font-size:5.2px">514442</div>
<div class="pill G" style="left:48.7px;top:219.4px;width:50.9px"><span>Завершений</span></div>
<svg class="a" style="left:110.3px;top:219.7px" width="9.8" height="6.2" viewBox="0 0 9.8 6.2"><rect x="0" y="0" width="9.8" height="6.2" rx="1.6" fill="#f6dc80"/><path d="M1.6 0 H8.2 Q9.8 0 9.8 1.6 V3 H0 V1.6 Q0 0 1.6 0Z" fill="#3d60ae"/><rect x="0" y="2.9" width="9.8" height="0.35" fill="#d8dce8"/></svg>
<div class="t" style="left:129.8px;top:219.1px;color:#3e3e3e">Сергієнко Ірина Ми...</div>
<svg class="a" style="left:194.9px;top:219.2px" width="7" height="7" viewBox="0 0 7 7"><circle cx="3.5" cy="3.5" r="3.3" fill="#f1cc5a"/><text x="1.6" y="5" font-size="3.6" font-family="Liberation Sans" font-weight="bold" fill="#555">lc</text></svg>
<div class="t" style="left:203.6px;top:219.1px;color:#6a6a6a">+380</div>
<div class="t" style="left:249.2px;top:219.1px;color:#6a6a6a">6</div>
<div class="t" style="left:266.3px;top:219.1px;color:#3e3e3e">23.12 смс. Кемел 56-58</div>
<svg class="a" style="left:358.6px;top:219.9px" width="8" height="6" viewBox="0 0 8 6"><rect x="0.4" y="1.2" width="6.2" height="4.4" rx="0.6" fill="none" stroke="#8a8a8a" stroke-width="0.8"/><rect x="0.6" y="2.4" width="3" height="0.8" fill="#8a8a8a"/><rect x="1" y="4" width="4.6" height="0.6" fill="#b0b0b0"/><rect x="4.9" y="0.3" width="2" height="2" rx="0.4" fill="#5aa8ea"/></svg>
<div class="t" style="left:360px;width:29.8px;text-align:right;top:219.1px;color:#3e3e3e">949.00</div>
<div class="a" style="left:394.4px;top:220px;width:5.4px;height:5.4px;border-radius:1.3px;background:#979797;color:#fff;font-weight:bold;font-size:4.2px;line-height:5.6px;text-align:center">1</div>
<div class="t" style="left:402px;top:219.1px;color:#444">Костюм на флисе Мод.1014 (1ш...</div>
<svg class="a" style="left:500.6px;top:219.5px" width="7" height="7" viewBox="0 0 7 7"><circle cx="3.2" cy="3.2" r="3.4" fill="#fbe4e4"/><circle cx="3.2" cy="3.2" r="1.4" fill="#fff"/><circle cx="3.2" cy="1" r="1.05" fill="#a04040"/><circle cx="3.2" cy="5.4" r="1.05" fill="#a04040"/><circle cx="1" cy="3.2" r="1" fill="#a04040"/><circle cx="5.4" cy="3.2" r="1" fill="#a04040"/></svg>
<div class="t" style="left:509.4px;top:219.1px;color:#444">Новгород-Сівер...</div>
<div class="t" style="left:562px;top:219.1px;color:#444">20450636677947</div>
<svg class="a" style="left:612.5px;top:219.6px" width="7" height="6.5" viewBox="0 0 7 6.5"><path d="M0.8 3.6 L2.6 5.3 L6.4 1.4" fill="none" stroke="#3a9032" stroke-width="1.25" stroke-linecap="round" stroke-linejoin="round"/><path d="M1.8 0.4 V3" stroke="#3a9032" stroke-width="0.6"/></svg>
<div class="t" style="left:623px;top:219.1px;color:#444">Фішка</div>
<div class="t" style="left:26.6px;top:227.3px;color:#6c6c6c;font-size:5.2px">514441</div>
<div class="pill G" style="left:48.7px;top:227.6px;width:50.9px"><span>Завершений</span></div>
<svg class="a" style="left:110.3px;top:227.9px" width="9.8" height="6.2" viewBox="0 0 9.8 6.2"><rect x="0" y="0" width="9.8" height="6.2" rx="1.6" fill="#f6dc80"/><path d="M1.6 0 H8.2 Q9.8 0 9.8 1.6 V3 H0 V1.6 Q0 0 1.6 0Z" fill="#3d60ae"/><rect x="0" y="2.9" width="9.8" height="0.35" fill="#d8dce8"/></svg>
<div class="t" style="left:129.8px;top:227.3px;color:#3e3e3e">Захарченко Люба</div>
<svg class="a" style="left:194.9px;top:227.4px" width="7" height="7" viewBox="0 0 7 7"><circle cx="3.5" cy="3.5" r="2.8" fill="#fff" stroke="#c8322a" stroke-width="1.3"/><path d="M4 1.6 Q2.2 2.2 2.3 3.9 Q2.6 5.2 3.8 5 Q4.9 4.6 4.6 3.3 Q3.7 3 4 1.6Z" fill="#c8322a"/></svg>
<div class="t" style="left:203.6px;top:227.3px;color:#6a6a6a">+380</div>
<div class="t" style="left:249.2px;top:227.3px;color:#6a6a6a">5</div>
<div class="t" style="left:266.3px;top:227.3px;color:#3e3e3e">Фиалка 52-54</div>
<svg class="a" style="left:358.6px;top:228.1px" width="8" height="6" viewBox="0 0 8 6"><rect x="0.4" y="1.2" width="6.2" height="4.4" rx="0.6" fill="none" stroke="#8a8a8a" stroke-width="0.8"/><rect x="0.6" y="2.4" width="3" height="0.8" fill="#8a8a8a"/><rect x="1" y="4" width="4.6" height="0.6" fill="#b0b0b0"/><rect x="4.9" y="0.3" width="2" height="2" rx="0.4" fill="#5aa8ea"/></svg>
<div class="t" style="left:360px;width:29.8px;text-align:right;top:227.3px;color:#3e3e3e">949.00</div>
<div class="a" style="left:394.4px;top:228.2px;width:5.4px;height:5.4px;border-radius:1.3px;background:#979797;color:#fff;font-weight:bold;font-size:4.2px;line-height:5.6px;text-align:center">1</div>
<div class="t" style="left:402px;top:227.3px;color:#444">Костюм на флисе Мод.1014 (1ш...</div>
<svg class="a" style="left:500.6px;top:227.7px" width="7" height="7" viewBox="0 0 7 7"><circle cx="3.2" cy="3.2" r="3.4" fill="#fbe4e4"/><circle cx="3.2" cy="3.2" r="1.4" fill="#fff"/><circle cx="3.2" cy="1" r="1.05" fill="#a04040"/><circle cx="3.2" cy="5.4" r="1.05" fill="#a04040"/><circle cx="1" cy="3.2" r="1" fill="#a04040"/><circle cx="5.4" cy="3.2" r="1" fill="#a04040"/></svg>
<div class="t" style="left:509.4px;top:227.3px;color:#444">Кегичівка, Відді...</div>
<div class="t" style="left:562px;top:227.3px;color:#444">20450633356614</div>
<svg class="a" style="left:612.5px;top:227.8px" width="7" height="6.5" viewBox="0 0 7 6.5"><path d="M0.8 3.6 L2.6 5.3 L6.4 1.4" fill="none" stroke="#3a9032" stroke-width="1.25" stroke-linecap="round" stroke-linejoin="round"/><path d="M1.8 0.4 V3" stroke="#3a9032" stroke-width="0.6"/></svg>
<div class="t" style="left:623px;top:227.3px;color:#444">Фішка</div>
<div class="t" style="left:26.6px;top:235.5px;color:#6c6c6c;font-size:5.2px">514440</div>
<div class="pill D" style="left:48.7px;top:235.8px;width:50.9px"><span>DO Возврат ск...</span></div>
<svg class="a" style="left:110.3px;top:236.1px" width="9.8" height="6.2" viewBox="0 0 9.8 6.2"><rect x="0" y="0" width="9.8" height="6.2" rx="1.6" fill="#f6dc80"/><path d="M1.6 0 H8.2 Q9.8 0 9.8 1.6 V3 H0 V1.6 Q0 0 1.6 0Z" fill="#3d60ae"/><rect x="0" y="2.9" width="9.8" height="0.35" fill="#d8dce8"/></svg>
<div class="t" style="left:129.8px;top:235.5px;color:#3e3e3e">Гуцалюк Галина</div>
<svg class="a" style="left:195px;top:235.7px" width="7" height="7" viewBox="0 0 7 7"><line x1="3.4" y1="3.4" x2="3.4" y2="0.6" stroke="#7ab4ec" stroke-width="0.7" stroke-linecap="round"/><line x1="3.4" y1="3.4" x2="0.98" y2="2" stroke="#7ab4ec" stroke-width="0.7" stroke-linecap="round"/><line x1="3.4" y1="3.4" x2="0.98" y2="4.8" stroke="#7ab4ec" stroke-width="0.7" stroke-linecap="round"/><line x1="3.4" y1="3.4" x2="3.4" y2="6.2" stroke="#7ab4ec" stroke-width="0.7" stroke-linecap="round"/><line x1="3.4" y1="3.4" x2="5.82" y2="4.8" stroke="#7ab4ec" stroke-width="0.7" stroke-linecap="round"/><line x1="3.4" y1="3.4" x2="5.82" y2="2" stroke="#7ab4ec" stroke-width="0.7" stroke-linecap="round"/><circle cx="3.4" cy="3.4" r="0.7" fill="#fff"/></svg>
<div class="t" style="left:203.6px;top:235.5px;color:#6a6a6a">+380</div>
<div class="t" style="left:249.2px;top:235.5px;color:#6a6a6a">3</div>
<div class="t" style="left:266.3px;top:235.5px;color:#3e3e3e">Фиалка 52-54</div>
<svg class="a" style="left:358.6px;top:236.3px" width="8" height="6" viewBox="0 0 8 6"><rect x="0.4" y="1.2" width="6.2" height="4.4" rx="0.6" fill="none" stroke="#8a8a8a" stroke-width="0.8"/><rect x="0.6" y="2.4" width="3" height="0.8" fill="#8a8a8a"/><rect x="1" y="4" width="4.6" height="0.6" fill="#b0b0b0"/><rect x="4.9" y="0.3" width="2" height="2" rx="0.4" fill="#5aa8ea"/></svg>
<div class="t" style="left:360px;width:29.8px;text-align:right;top:235.5px;color:#3e3e3e">949.00</div>
<div class="a" style="left:394.4px;top:236.4px;width:5.4px;height:5.4px;border-radius:1.3px;background:#979797;color:#fff;font-weight:bold;font-size:4.2px;line-height:5.6px;text-align:center">1</div>
<div class="t" style="left:402px;top:235.5px;color:#444">Костюм на флисе Мод.1014 (1ш...</div>
<svg class="a" style="left:500.6px;top:235.9px" width="7" height="7" viewBox="0 0 7 7"><circle cx="3.2" cy="3.2" r="3.4" fill="#fbe4e4"/><circle cx="3.2" cy="3.2" r="1.4" fill="#fff"/><circle cx="3.2" cy="1" r="1.05" fill="#a04040"/><circle cx="3.2" cy="5.4" r="1.05" fill="#a04040"/><circle cx="1" cy="3.2" r="1" fill="#a04040"/><circle cx="5.4" cy="3.2" r="1" fill="#a04040"/></svg>
<div class="t" style="left:509.4px;top:235.5px;color:#444">Київ, Відділенн...</div>
<div class="t" style="left:562px;top:235.5px;color:#444">20450633226918</div>
<svg class="a" style="left:612px;top:236.6px" width="8" height="5" viewBox="0 0 8 5"><path d="M0.4 2.4 H4" stroke="#e0a0a0" stroke-width="0.7"/><path d="M4.4 0.8 L6.6 3.6 M6.6 0.8 L4.4 3.6" stroke="#c85050" stroke-width="0.8"/></svg>
<div class="t" style="left:623px;top:235.5px;color:#444">Фішка</div>
<div class="t" style="left:26.6px;top:243.7px;color:#6c6c6c;font-size:5.2px">514439</div>
<div class="pill G" style="left:48.7px;top:244px;width:50.9px"><span>Завершений</span></div>
<svg class="a" style="left:110.3px;top:244.3px" width="9.8" height="6.2" viewBox="0 0 9.8 6.2"><rect x="0" y="0" width="9.8" height="6.2" rx="1.6" fill="#f6dc80"/><path d="M1.6 0 H8.2 Q9.8 0 9.8 1.6 V3 H0 V1.6 Q0 0 1.6 0Z" fill="#3d60ae"/><rect x="0" y="2.9" width="9.8" height="0.35" fill="#d8dce8"/></svg>
<div class="t" style="left:129.8px;top:243.7px;color:#3e3e3e">Уляна Мусійовська</div>
<svg class="a" style="left:195px;top:243.9px" width="7" height="7" viewBox="0 0 7 7"><line x1="3.4" y1="3.4" x2="3.4" y2="0.6" stroke="#7ab4ec" stroke-width="0.7" stroke-linecap="round"/><line x1="3.4" y1="3.4" x2="0.98" y2="2" stroke="#7ab4ec" stroke-width="0.7" stroke-linecap="round"/><line x1="3.4" y1="3.4" x2="0.98" y2="4.8" stroke="#7ab4ec" stroke-width="0.7" stroke-linecap="round"/><line x1="3.4" y1="3.4" x2="3.4" y2="6.2" stroke="#7ab4ec" stroke-width="0.7" stroke-linecap="round"/><line x1="3.4" y1="3.4" x2="5.82" y2="4.8" stroke="#7ab4ec" stroke-width="0.7" stroke-linecap="round"/><line x1="3.4" y1="3.4" x2="5.82" y2="2" stroke="#7ab4ec" stroke-width="0.7" stroke-linecap="round"/><circle cx="3.4" cy="3.4" r="0.7" fill="#fff"/></svg>
<div class="t" style="left:203.6px;top:243.7px;color:#6a6a6a">+380</div>
<div class="t" style="left:249.2px;top:243.7px;color:#6a6a6a">9</div>
<div class="t" style="left:266.3px;top:243.7px;color:#3e3e3e">ОПХ доставка. Оранжевая</div>
<svg class="a" style="left:358.6px;top:244px" width="8" height="6" viewBox="0 0 8 6"><rect x="0.5" y="2.2" width="4.6" height="3.4" rx="0.4" fill="none" stroke="#8fbf88" stroke-width="0.8"/><path d="M2.4 3.6 Q3.6 1.4 6 0.8 Q7.6 0.8 7 2.2 Q5.6 3.6 3.4 4.2Z" fill="#2f8a2a"/></svg>
<div class="t" style="left:360px;width:29.8px;text-align:right;top:243.7px;color:#3e3e3e">154.00</div>
<div class="a" style="left:394.4px;top:244.6px;width:5.4px;height:5.4px;border-radius:1.3px;background:#979797;color:#fff;font-weight:bold;font-size:4.2px;line-height:5.6px;text-align:center">1</div>
<div class="t" style="left:402px;top:243.7px;color:#444">Машина-трансформер ламборд...</div>
<svg class="a" style="left:500px;top:244.1px" width="8" height="7" viewBox="0 0 8 7"><path d="M4.4 0.5 L7 0.3 Q7.6 4.4 5 6.3 Q2.4 7.6 0.9 5.6 Q0.2 4 1.4 2.4 L2.7 3.3 Q2.1 4.4 2.8 5 Q4.4 5.6 5.1 3.4 Q5.3 1.8 4.4 0.5Z" fill="#f0b22c"/><path d="M3.4 1.6 Q3.9 3 3.3 4.2" fill="none" stroke="#f4c24a" stroke-width="0.9"/></svg>
<div class="t" style="left:509.4px;top:243.7px;color:#444">Самбір 81400</div>
<div class="t" style="left:562px;top:243.7px;color:#444">0501691313394</div>
<svg class="a" style="left:612.5px;top:244.6px" width="7" height="6" viewBox="0 0 7 6"><path d="M0.8 3.2 L2.6 4.9 L6.4 1" fill="none" stroke="#3a9032" stroke-width="1.25" stroke-linecap="round" stroke-linejoin="round"/></svg>
<div class="t" style="left:623px;top:243.7px;color:#444">Опт Центр</div>
<div class="t" style="left:26.6px;top:251.9px;color:#6c6c6c;font-size:5.2px">514438</div>
<div class="pill D" style="left:48.7px;top:252.2px;width:50.9px"><span>Повернення (з...</span></div>
<svg class="a" style="left:110.3px;top:252.5px" width="9.8" height="6.2" viewBox="0 0 9.8 6.2"><rect x="0" y="0" width="9.8" height="6.2" rx="1.6" fill="#f6dc80"/><path d="M1.6 0 H8.2 Q9.8 0 9.8 1.6 V3 H0 V1.6 Q0 0 1.6 0Z" fill="#3d60ae"/><rect x="0" y="2.9" width="9.8" height="0.35" fill="#d8dce8"/></svg>
<div class="t" style="left:129.8px;top:251.9px;color:#3e3e3e">Юлия Баланюк</div>
<svg class="a" style="left:194.9px;top:252px" width="7" height="7" viewBox="0 0 7 7"><circle cx="3.5" cy="3.5" r="3.3" fill="#f1cc5a"/><text x="1.6" y="5" font-size="3.6" font-family="Liberation Sans" font-weight="bold" fill="#555">lc</text></svg>
<div class="t" style="left:203.6px;top:251.9px;color:#6a6a6a">+380</div>
<div class="t" style="left:249.2px;top:251.9px;color:#6a6a6a">9</div>
<div class="t" style="left:266.3px;top:251.9px;color:#3e3e3e">22.12 смс ОПХ доставка. ХХЛ</div>
<svg class="a" style="left:358.6px;top:252.2px" width="8" height="6" viewBox="0 0 8 6"><rect x="0.5" y="2.2" width="4.6" height="3.4" rx="0.4" fill="none" stroke="#8fbf88" stroke-width="0.8"/><path d="M2.4 3.6 Q3.6 1.4 6 0.8 Q7.6 0.8 7 2.2 Q5.6 3.6 3.4 4.2Z" fill="#2f8a2a"/></svg>
<div class="t" style="left:360px;width:29.8px;text-align:right;top:251.9px;color:#3e3e3e">71.00</div>
<div class="a" style="left:394.4px;top:252.8px;width:5.4px;height:5.4px;border-radius:1.3px;background:#979797;color:#fff;font-weight:bold;font-size:4.2px;line-height:5.6px;text-align:center">1</div>
<div class="t" style="left:402px;top:251.9px;color:#444">Майка-корсет Waist Trainer *142...</div>
<svg class="a" style="left:500px;top:252.3px" width="8" height="7" viewBox="0 0 8 7"><path d="M4.4 0.5 L7 0.3 Q7.6 4.4 5 6.3 Q2.4 7.6 0.9 5.6 Q0.2 4 1.4 2.4 L2.7 3.3 Q2.1 4.4 2.8 5 Q4.4 5.6 5.1 3.4 Q5.3 1.8 4.4 0.5Z" fill="#f0b22c"/><path d="M3.4 1.6 Q3.9 3 3.3 4.2" fill="none" stroke="#f4c24a" stroke-width="0.9"/></svg>
<div class="t" style="left:509.4px;top:251.9px;color:#444">Черкаси 18015</div>
<div class="t" style="left:562px;top:251.9px;color:#444">0501691281689</div>
<svg class="a" style="left:612px;top:252.8px" width="8" height="6" viewBox="0 0 8 6"><path d="M1.2 4 Q1 1.2 4 1.2 Q6.8 1.2 6.6 3.6" fill="none" stroke="#5a9be0" stroke-width="0.8"/><path d="M1 2.2 L1.2 4.4 L3 3.4" fill="none" stroke="#5a9be0" stroke-width="0.7"/></svg>
<div class="t" style="left:623px;top:251.9px;color:#444">Опт Центр</div>
<div class="t" style="left:26.6px;top:260.1px;color:#6c6c6c;font-size:5.2px">514437</div>
<div class="pill D" style="left:48.7px;top:260.4px;width:50.9px"><span>DO Возврат ск...</span></div>
<svg class="a" style="left:110.3px;top:260.7px" width="9.8" height="6.2" viewBox="0 0 9.8 6.2"><rect x="0" y="0" width="9.8" height="6.2" rx="1.6" fill="#f6dc80"/><path d="M1.6 0 H8.2 Q9.8 0 9.8 1.6 V3 H0 V1.6 Q0 0 1.6 0Z" fill="#3d60ae"/><rect x="0" y="2.9" width="9.8" height="0.35" fill="#d8dce8"/></svg>
<div class="t" style="left:129.8px;top:260.1px;color:#3e3e3e">Анжела Безушку</div>
<svg class="a" style="left:195px;top:260.3px" width="7" height="7" viewBox="0 0 7 7"><line x1="3.4" y1="3.4" x2="3.4" y2="0.6" stroke="#7ab4ec" stroke-width="0.7" stroke-linecap="round"/><line x1="3.4" y1="3.4" x2="0.98" y2="2" stroke="#7ab4ec" stroke-width="0.7" stroke-linecap="round"/><line x1="3.4" y1="3.4" x2="0.98" y2="4.8" stroke="#7ab4ec" stroke-width="0.7" stroke-linecap="round"/><line x1="3.4" y1="3.4" x2="3.4" y2="6.2" stroke="#7ab4ec" stroke-width="0.7" stroke-linecap="round"/><line x1="3.4" y1="3.4" x2="5.82" y2="4.8" stroke="#7ab4ec" stroke-width="0.7" stroke-linecap="round"/><line x1="3.4" y1="3.4" x2="5.82" y2="2" stroke="#7ab4ec" stroke-width="0.7" stroke-linecap="round"/><circle cx="3.4" cy="3.4" r="0.7" fill="#fff"/></svg>
<div class="t" style="left:203.6px;top:260.1px;color:#6a6a6a">+380</div>
<div class="t" style="left:249.2px;top:260.1px;color:#6a6a6a">2</div>
<div class="t" style="left:266.3px;top:260.1px;color:#3e3e3e">27.12 11-05 вна 23.12 смс. 19...</div>
<svg class="a" style="left:358.6px;top:260.9px" width="8" height="6" viewBox="0 0 8 6"><rect x="0.4" y="1.2" width="6.2" height="4.4" rx="0.6" fill="none" stroke="#8a8a8a" stroke-width="0.8"/><rect x="0.6" y="2.4" width="3" height="0.8" fill="#8a8a8a"/><rect x="1" y="4" width="4.6" height="0.6" fill="#b0b0b0"/><rect x="4.9" y="0.3" width="2" height="2" rx="0.4" fill="#5aa8ea"/></svg>
<div class="t" style="left:360px;width:29.8px;text-align:right;top:260.1px;color:#3e3e3e">949.00</div>
<div class="a" style="left:394.4px;top:261px;width:5.4px;height:5.4px;border-radius:1.3px;background:#979797;color:#fff;font-weight:bold;font-size:4.2px;line-height:5.6px;text-align:center">1</div>
<div class="t" style="left:402px;top:260.1px;color:#444">Костюм на флисе Мод.1014 (1ш...</div>
<svg class="a" style="left:500.6px;top:260.5px" width="7" height="7" viewBox="0 0 7 7"><circle cx="3.2" cy="3.2" r="3.4" fill="#fbe4e4"/><circle cx="3.2" cy="3.2" r="1.4" fill="#fff"/><circle cx="3.2" cy="1" r="1.05" fill="#a04040"/><circle cx="3.2" cy="5.4" r="1.05" fill="#a04040"/><circle cx="1" cy="3.2" r="1" fill="#a04040"/><circle cx="5.4" cy="3.2" r="1" fill="#a04040"/></svg>
<div class="t" style="left:509.4px;top:260.1px;color:#444">Опришени, Пун...</div>
<div class="t" style="left:562px;top:260.1px;color:#444">20450632874148</div>
<svg class="a" style="left:612px;top:261.2px" width="8" height="5" viewBox="0 0 8 5"><path d="M0.4 2.4 H4" stroke="#e0a0a0" stroke-width="0.7"/><path d="M4.4 0.8 L6.6 3.6 M6.6 0.8 L4.4 3.6" stroke="#c85050" stroke-width="0.8"/></svg>
<div class="t" style="left:623px;top:260.1px;color:#444">Фішка</div>
<div class="t" style="left:26.6px;top:268.3px;color:#6c6c6c;font-size:5.2px">514436</div>
<div class="pill G" style="left:48.7px;top:268.6px;width:50.9px"><span>Завершений</span></div>
<svg class="a" style="left:110.3px;top:268.9px" width="9.8" height="6.2" viewBox="0 0 9.8 6.2"><rect x="0" y="0" width="9.8" height="6.2" rx="1.6" fill="#f6dc80"/><path d="M1.6 0 H8.2 Q9.8 0 9.8 1.6 V3 H0 V1.6 Q0 0 1.6 0Z" fill="#3d60ae"/><rect x="0" y="2.9" width="9.8" height="0.35" fill="#d8dce8"/></svg>
<div class="t" style="left:129.8px;top:268.3px;color:#3e3e3e">Сергей Петров</div>
<svg class="a" style="left:195px;top:268.5px" width="7" height="7" viewBox="0 0 7 7"><line x1="3.4" y1="3.4" x2="3.4" y2="0.6" stroke="#7ab4ec" stroke-width="0.7" stroke-linecap="round"/><line x1="3.4" y1="3.4" x2="0.98" y2="2" stroke="#7ab4ec" stroke-width="0.7" stroke-linecap="round"/><line x1="3.4" y1="3.4" x2="0.98" y2="4.8" stroke="#7ab4ec" stroke-width="0.7" stroke-linecap="round"/><line x1="3.4" y1="3.4" x2="3.4" y2="6.2" stroke="#7ab4ec" stroke-width="0.7" stroke-linecap="round"/><line x1="3.4" y1="3.4" x2="5.82" y2="4.8" stroke="#7ab4ec" stroke-width="0.7" stroke-linecap="round"/><line x1="3.4" y1="3.4" x2="5.82" y2="2" stroke="#7ab4ec" stroke-width="0.7" stroke-linecap="round"/><circle cx="3.4" cy="3.4" r="0.7" fill="#fff"/></svg>
<div class="t" style="left:203.6px;top:268.3px;color:#6a6a6a">+380</div>
<div class="t" style="left:249.2px;top:268.3px;color:#6a6a6a">5</div>
<div class="t" style="left:266.3px;top:268.3px;color:#3e3e3e"></div>
<svg class="a" style="left:358.8px;top:268.4px" width="7" height="7" viewBox="0 0 7 7"><circle cx="3.5" cy="3.5" r="3" fill="#e6f4e2" stroke="#4a9a4a" stroke-width="0.9"/><text x="2.2" y="5.3" font-size="4.6" font-family="Liberation Sans" fill="#3a8a3a">$</text></svg>
<div class="t" style="left:360px;width:29.8px;text-align:right;top:268.3px;color:#3e3e3e">1004.00</div>
<div class="a" style="left:394.4px;top:269.2px;width:5.4px;height:5.4px;border-radius:1.3px;background:#979797;color:#fff;font-weight:bold;font-size:4.2px;line-height:5.6px;text-align:center">2</div>
<div class="t" style="left:402px;top:268.3px;color:#444">Маленькая видеокамера SQ8 *...</div>
<svg class="a" style="left:500.6px;top:268.8px" width="7" height="7" viewBox="0 0 7 7"><path d="M0.6 0.6 L2.8 3.2 L2 6 L3.2 6 L3.8 3.8 L6.2 3.2 L5.6 1.6 L3 1.8Z" fill="#1e1e1e"/></svg>
<div class="t" style="left:509.4px;top:268.3px;color:#444">Кривой Рог</div>
<div class="t" style="left:562px;top:268.3px;color:#444"></div>
<div class="t" style="left:623px;top:268.3px;color:#444">Опт Центр</div>
<div class="t" style="left:26.6px;top:276.5px;color:#6c6c6c;font-size:5.2px">514435</div>
<div class="pill G" style="left:48.7px;top:276.8px;width:50.9px"><span>Завершений</span></div>
<svg class="a" style="left:110.3px;top:277.1px" width="9.8" height="6.2" viewBox="0 0 9.8 6.2"><rect x="0" y="0" width="9.8" height="6.2" rx="1.6" fill="#f6dc80"/><path d="M1.6 0 H8.2 Q9.8 0 9.8 1.6 V3 H0 V1.6 Q0 0 1.6 0Z" fill="#3d60ae"/><rect x="0" y="2.9" width="9.8" height="0.35" fill="#d8dce8"/></svg>
<div class="t" style="left:129.8px;top:276.5px;color:#3e3e3e">Катерина Богданова</div>
<svg class="a" style="left:194.9px;top:276.6px" width="7" height="7" viewBox="0 0 7 7"><circle cx="3.5" cy="3.5" r="2.8" fill="#fff" stroke="#c8322a" stroke-width="1.3"/><path d="M4 1.6 Q2.2 2.2 2.3 3.9 Q2.6 5.2 3.8 5 Q4.9 4.6 4.6 3.3 Q3.7 3 4 1.6Z" fill="#c8322a"/></svg>
<div class="t" style="left:203.6px;top:276.5px;color:#6a6a6a">+380</div>
<div class="t" style="left:249.2px;top:276.5px;color:#6a6a6a">7</div>
<div class="t" style="left:266.3px;top:276.5px;color:#3e3e3e">ОПХ доставка. ХХХЛ</div>
<svg class="a" style="left:358.6px;top:276.8px" width="8" height="6" viewBox="0 0 8 6"><rect x="0.5" y="2.2" width="4.6" height="3.4" rx="0.4" fill="none" stroke="#8fbf88" stroke-width="0.8"/><path d="M2.4 3.6 Q3.6 1.4 6 0.8 Q7.6 0.8 7 2.2 Q5.6 3.6 3.4 4.2Z" fill="#2f8a2a"/></svg>
<div class="t" style="left:360px;width:29.8px;text-align:right;top:276.5px;color:#3e3e3e">71.00</div>
<div class="a" style="left:394.4px;top:277.4px;width:5.4px;height:5.4px;border-radius:1.3px;background:#979797;color:#fff;font-weight:bold;font-size:4.2px;line-height:5.6px;text-align:center">1</div>
<div class="t" style="left:402px;top:276.5px;color:#444">Майка-корсет Waist Trainer *142...</div>
<svg class="a" style="left:500px;top:276.9px" width="8" height="7" viewBox="0 0 8 7"><path d="M4.4 0.5 L7 0.3 Q7.6 4.4 5 6.3 Q2.4 7.6 0.9 5.6 Q0.2 4 1.4 2.4 L2.7 3.3 Q2.1 4.4 2.8 5 Q4.4 5.6 5.1 3.4 Q5.3 1.8 4.4 0.5Z" fill="#f0b22c"/><path d="M3.4 1.6 Q3.9 3 3.3 4.2" fill="none" stroke="#f4c24a" stroke-width="0.9"/></svg>
<div class="t" style="left:509.4px;top:276.5px;color:#444">Словьянськ 84...</div>
<div class="t" style="left:562px;top:276.5px;color:#444">0501691187224</div>
<svg class="a" style="left:612.5px;top:277.4px" width="7" height="6" viewBox="0 0 7 6"><path d="M0.8 3.2 L2.6 4.9 L6.4 1" fill="none" stroke="#3a9032" stroke-width="1.25" stroke-linecap="round" stroke-linejoin="round"/></svg>
<div class="t" style="left:623px;top:276.5px;color:#444">Опт Центр</div>
<div class="t" style="left:26.6px;top:284.7px;color:#6c6c6c;font-size:5.2px">514434</div>
<div class="pill G" style="left:48.7px;top:285px;width:50.9px"><span>Завершений</span></div>
<svg class="a" style="left:110.3px;top:285.3px" width="9.8" height="6.2" viewBox="0 0 9.8 6.2"><rect x="0" y="0" width="9.8" height="6.2" rx="1.6" fill="#f6dc80"/><path d="M1.6 0 H8.2 Q9.8 0 9.8 1.6 V3 H0 V1.6 Q0 0 1.6 0Z" fill="#3d60ae"/><rect x="0" y="2.9" width="9.8" height="0.35" fill="#d8dce8"/></svg>
<div class="t" style="left:129.8px;top:284.7px;color:#3e3e3e">Сергей Карамышев</div>
<svg class="a" style="left:195px;top:284.9px" width="7" height="7" viewBox="0 0 7 7"><line x1="3.4" y1="3.4" x2="3.4" y2="0.6" stroke="#7ab4ec" stroke-width="0.7" stroke-linecap="round"/><line x1="3.4" y1="3.4" x2="0.98" y2="2" stroke="#7ab4ec" stroke-width="0.7" stroke-linecap="round"/><line x1="3.4" y1="3.4" x2="0.98" y2="4.8" stroke="#7ab4ec" stroke-width="0.7" stroke-linecap="round"/><line x1="3.4" y1="3.4" x2="3.4" y2="6.2" stroke="#7ab4ec" stroke-width="0.7" stroke-linecap="round"/><line x1="3.4" y1="3.4" x2="5.82" y2="4.8" stroke="#7ab4ec" stroke-width="0.7" stroke-linecap="round"/><line x1="3.4" y1="3.4" x2="5.82" y2="2" stroke="#7ab4ec" stroke-width="0.7" stroke-linecap="round"/><circle cx="3.4" cy="3.4" r="0.7" fill="#fff"/></svg>
<div class="t" style="left:203.6px;top:284.7px;color:#6a6a6a">+380</div>
<div class="t" style="left:249.2px;top:284.7px;color:#6a6a6a">5</div>
<div class="t" style="left:266.3px;top:284.7px;color:#3e3e3e">Наложенный платеж</div>
<svg class="a" style="left:358.6px;top:285.5px" width="8" height="6" viewBox="0 0 8 6"><rect x="0.4" y="1.2" width="6.2" height="4.4" rx="0.6" fill="none" stroke="#8a8a8a" stroke-width="0.8"/><rect x="0.6" y="2.4" width="3" height="0.8" fill="#8a8a8a"/><rect x="1" y="4" width="4.6" height="0.6" fill="#b0b0b0"/><rect x="4.9" y="0.3" width="2" height="2" rx="0.4" fill="#5aa8ea"/></svg>
<div class="t" style="left:360px;width:29.8px;text-align:right;top:284.7px;color:#3e3e3e">450.00</div>
<div class="a" style="left:394.4px;top:285.6px;width:5.4px;height:5.4px;border-radius:1.3px;background:#979797;color:#fff;font-weight:bold;font-size:4.2px;line-height:5.6px;text-align:center">1</div>
<div class="t" style="left:402px;top:284.7px;color:#444">Ультрафиолетовая бактерицид...</div>
<svg class="a" style="left:500.6px;top:285.1px" width="7" height="7" viewBox="0 0 7 7"><circle cx="3.2" cy="3.2" r="3.4" fill="#fbe4e4"/><circle cx="3.2" cy="3.2" r="1.4" fill="#fff"/><circle cx="3.2" cy="1" r="1.05" fill="#a04040"/><circle cx="3.2" cy="5.4" r="1.05" fill="#a04040"/><circle cx="1" cy="3.2" r="1" fill="#a04040"/><circle cx="5.4" cy="3.2" r="1" fill="#a04040"/></svg>
<div class="t" style="left:509.4px;top:284.7px;color:#444">Київ, Відділенн...</div>
<div class="t" style="left:562px;top:284.7px;color:#444">20450632824487</div>
<svg class="a" style="left:612.5px;top:285.2px" width="7" height="6.5" viewBox="0 0 7 6.5"><path d="M0.8 3.6 L2.6 5.3 L6.4 1.4" fill="none" stroke="#3a9032" stroke-width="1.25" stroke-linecap="round" stroke-linejoin="round"/><path d="M1.8 0.4 V3" stroke="#3a9032" stroke-width="0.6"/></svg>
<div class="t" style="left:623px;top:284.7px;color:#444">Дропшипп...</div>
<div class="t" style="left:26.6px;top:292.9px;color:#6c6c6c;font-size:5.2px">514433</div>
<div class="pill G" style="left:48.7px;top:293.2px;width:50.9px"><span>Завершений</span></div>
<svg class="a" style="left:110.3px;top:293.5px" width="9.8" height="6.2" viewBox="0 0 9.8 6.2"><rect x="0" y="0" width="9.8" height="6.2" rx="1.6" fill="#f6dc80"/><path d="M1.6 0 H8.2 Q9.8 0 9.8 1.6 V3 H0 V1.6 Q0 0 1.6 0Z" fill="#3d60ae"/><rect x="0" y="2.9" width="9.8" height="0.35" fill="#d8dce8"/></svg>
<div class="t" style="left:129.8px;top:292.9px;color:#3e3e3e">Олексій Семанін</div>
<svg class="a" style="left:195px;top:293.1px" width="7" height="7" viewBox="0 0 7 7"><line x1="3.4" y1="3.4" x2="3.4" y2="0.6" stroke="#7ab4ec" stroke-width="0.7" stroke-linecap="round"/><line x1="3.4" y1="3.4" x2="0.98" y2="2" stroke="#7ab4ec" stroke-width="0.7" stroke-linecap="round"/><line x1="3.4" y1="3.4" x2="0.98" y2="4.8" stroke="#7ab4ec" stroke-width="0.7" stroke-linecap="round"/><line x1="3.4" y1="3.4" x2="3.4" y2="6.2" stroke="#7ab4ec" stroke-width="0.7" stroke-linecap="round"/><line x1="3.4" y1="3.4" x2="5.82" y2="4.8" stroke="#7ab4ec" stroke-width="0.7" stroke-linecap="round"/><line x1="3.4" y1="3.4" x2="5.82" y2="2" stroke="#7ab4ec" stroke-width="0.7" stroke-linecap="round"/><circle cx="3.4" cy="3.4" r="0.7" fill="#fff"/></svg>
<div class="t" style="left:203.6px;top:292.9px;color:#6a6a6a">+380</div>
<div class="t" style="left:249.2px;top:292.9px;color:#6a6a6a">3</div>
<div class="t" style="left:266.3px;top:292.9px;color:#3e3e3e">15.12 смс ОПХ доставка</div>
<svg class="a" style="left:358.6px;top:293.2px" width="8" height="6" viewBox="0 0 8 6"><rect x="0.5" y="2.2" width="4.6" height="3.4" rx="0.4" fill="none" stroke="#8fbf88" stroke-width="0.8"/><path d="M2.4 3.6 Q3.6 1.4 6 0.8 Q7.6 0.8 7 2.2 Q5.6 3.6 3.4 4.2Z" fill="#2f8a2a"/></svg>
<div class="t" style="left:360px;width:29.8px;text-align:right;top:292.9px;color:#3e3e3e">320.00</div>
<div class="a" style="left:394.4px;top:293.8px;width:5.4px;height:5.4px;border-radius:1.3px;background:#979797;color:#fff;font-weight:bold;font-size:4.2px;line-height:5.6px;text-align:center">1</div>
<div class="t" style="left:402px;top:292.9px;color:#444">Тренировочные петли TRX Train...</div>
<svg class="a" style="left:500.6px;top:293.3px" width="7" height="7" viewBox="0 0 7 7"><circle cx="3.2" cy="3.2" r="3.4" fill="#fbe4e4"/><circle cx="3.2" cy="3.2" r="1.4" fill="#fff"/><circle cx="3.2" cy="1" r="1.05" fill="#a04040"/><circle cx="3.2" cy="5.4" r="1.05" fill="#a04040"/><circle cx="1" cy="3.2" r="1" fill="#a04040"/><circle cx="5.4" cy="3.2" r="1" fill="#a04040"/></svg>
<div class="t" style="left:509.4px;top:292.9px;color:#444">Кременчук від...</div>
<div class="t" style="left:562px;top:292.9px;color:#444">20400309484935</div>
<svg class="a" style="left:612.5px;top:293.4px" width="7" height="6.5" viewBox="0 0 7 6.5"><path d="M0.8 3.6 L2.6 5.3 L6.4 1.4" fill="none" stroke="#3a9032" stroke-width="1.25" stroke-linecap="round" stroke-linejoin="round"/><path d="M1.8 0.4 V3" stroke="#3a9032" stroke-width="0.6"/></svg>
<div class="t" style="left:623px;top:292.9px;color:#444">Опт Центр</div>
<div class="t" style="left:26.6px;top:301.1px;color:#6c6c6c;font-size:5.2px">514432</div>
<div class="pill D" style="left:48.7px;top:301.4px;width:50.9px"><span>Повернення (з...</span></div>
<svg class="a" style="left:110.3px;top:301.7px" width="9.8" height="6.2" viewBox="0 0 9.8 6.2"><rect x="0" y="0" width="9.8" height="6.2" rx="1.6" fill="#f6dc80"/><path d="M1.6 0 H8.2 Q9.8 0 9.8 1.6 V3 H0 V1.6 Q0 0 1.6 0Z" fill="#3d60ae"/><rect x="0" y="2.9" width="9.8" height="0.35" fill="#d8dce8"/></svg>
<div class="t" style="left:129.8px;top:301.1px;color:#3e3e3e">Станіслав Стрижак</div>
<svg class="a" style="left:194.9px;top:301.2px" width="7" height="7" viewBox="0 0 7 7"><circle cx="3.5" cy="3.5" r="2.8" fill="#fff" stroke="#c8322a" stroke-width="1.3"/><path d="M4 1.6 Q2.2 2.2 2.3 3.9 Q2.6 5.2 3.8 5 Q4.9 4.6 4.6 3.3 Q3.7 3 4 1.6Z" fill="#c8322a"/></svg>
<div class="t" style="left:203.6px;top:301.1px;color:#6a6a6a">+380</div>
<div class="t" style="left:249.2px;top:301.1px;color:#6a6a6a">0</div>
<div class="t" style="left:266.3px;top:301.1px;color:#3e3e3e">15.12 смс ОПХ доставка</div>
<svg class="a" style="left:358.6px;top:301.4px" width="8" height="6" viewBox="0 0 8 6"><rect x="0.5" y="2.2" width="4.6" height="3.4" rx="0.4" fill="none" stroke="#8fbf88" stroke-width="0.8"/><path d="M2.4 3.6 Q3.6 1.4 6 0.8 Q7.6 0.8 7 2.2 Q5.6 3.6 3.4 4.2Z" fill="#2f8a2a"/></svg>
<div class="t" style="left:360px;width:29.8px;text-align:right;top:301.1px;color:#3e3e3e">151.00</div>
<div class="a" style="left:394.4px;top:302px;width:5.4px;height:5.4px;border-radius:1.3px;background:#979797;color:#fff;font-weight:bold;font-size:4.2px;line-height:5.6px;text-align:center">1</div>
<div class="t" style="left:402px;top:301.1px;color:#444">Маленькая видеокамера SQ8 *...</div>
<svg class="a" style="left:500.6px;top:301.5px" width="7" height="7" viewBox="0 0 7 7"><circle cx="3.2" cy="3.2" r="3.4" fill="#fbe4e4"/><circle cx="3.2" cy="3.2" r="1.4" fill="#fff"/><circle cx="3.2" cy="1" r="1.05" fill="#a04040"/><circle cx="3.2" cy="5.4" r="1.05" fill="#a04040"/><circle cx="1" cy="3.2" r="1" fill="#a04040"/><circle cx="5.4" cy="3.2" r="1" fill="#a04040"/></svg>
<div class="t" style="left:509.4px;top:301.1px;color:#444">Київ від 142</div>
<div class="t" style="left:562px;top:301.1px;color:#444">20400309473416</div>
<svg class="a" style="left:612px;top:302.2px" width="8" height="5" viewBox="0 0 8 5"><path d="M0.4 2.4 H4" stroke="#e0a0a0" stroke-width="0.7"/><path d="M4.4 0.8 L6.6 3.6 M6.6 0.8 L4.4 3.6" stroke="#c85050" stroke-width="0.8"/></svg>
<div class="t" style="left:623px;top:301.1px;color:#444">Опт Центр</div>
<div class="t" style="left:26.6px;top:309.3px;color:#6c6c6c;font-size:5.2px">514431</div>
<div class="pill D" style="left:48.7px;top:309.6px;width:50.9px"><span>Повернення (з...</span></div>
<svg class="a" style="left:110.3px;top:309.9px" width="9.8" height="6.2" viewBox="0 0 9.8 6.2"><rect x="0" y="0" width="9.8" height="6.2" rx="1.6" fill="#f6dc80"/><path d="M1.6 0 H8.2 Q9.8 0 9.8 1.6 V3 H0 V1.6 Q0 0 1.6 0Z" fill="#3d60ae"/><rect x="0" y="2.9" width="9.8" height="0.35" fill="#d8dce8"/></svg>
<div class="t" style="left:129.8px;top:309.3px;color:#3e3e3e">Андрій Ткаченко</div>
<svg class="a" style="left:194.9px;top:309.4px" width="7" height="7" viewBox="0 0 7 7"><circle cx="3.5" cy="3.5" r="3.3" fill="#f1cc5a"/><text x="1.6" y="5" font-size="3.6" font-family="Liberation Sans" font-weight="bold" fill="#555">lc</text></svg>
<div class="t" style="left:203.6px;top:309.3px;color:#6a6a6a">+380</div>
<div class="t" style="left:249.2px;top:309.3px;color:#6a6a6a">7</div>
<div class="t" style="left:266.3px;top:309.3px;color:#3e3e3e">23.12 смс .ОПХ доставка</div>
<svg class="a" style="left:358.6px;top:309.6px" width="8" height="6" viewBox="0 0 8 6"><rect x="0.5" y="2.2" width="4.6" height="3.4" rx="0.4" fill="none" stroke="#8fbf88" stroke-width="0.8"/><path d="M2.4 3.6 Q3.6 1.4 6 0.8 Q7.6 0.8 7 2.2 Q5.6 3.6 3.4 4.2Z" fill="#2f8a2a"/></svg>
<div class="t" style="left:360px;width:29.8px;text-align:right;top:309.3px;color:#3e3e3e">320.00</div>
<div class="a" style="left:394.4px;top:310.2px;width:5.4px;height:5.4px;border-radius:1.3px;background:#979797;color:#fff;font-weight:bold;font-size:4.2px;line-height:5.6px;text-align:center">1</div>
<div class="t" style="left:402px;top:309.3px;color:#444">Тренировочные петли TRX Train...</div>
<svg class="a" style="left:500px;top:309.7px" width="8" height="7" viewBox="0 0 8 7"><path d="M4.4 0.5 L7 0.3 Q7.6 4.4 5 6.3 Q2.4 7.6 0.9 5.6 Q0.2 4 1.4 2.4 L2.7 3.3 Q2.1 4.4 2.8 5 Q4.4 5.6 5.1 3.4 Q5.3 1.8 4.4 0.5Z" fill="#f0b22c"/><path d="M3.4 1.6 Q3.9 3 3.3 4.2" fill="none" stroke="#f4c24a" stroke-width="0.9"/></svg>
<div class="t" style="left:509.4px;top:309.3px;color:#444">Київ 04120</div>
<div class="t" style="left:562px;top:309.3px;color:#444">0501691096709</div>
<svg class="a" style="left:612px;top:310.2px" width="8" height="6" viewBox="0 0 8 6"><path d="M1.2 4 Q1 1.2 4 1.2 Q6.8 1.2 6.6 3.6" fill="none" stroke="#5a9be0" stroke-width="0.8"/><path d="M1 2.2 L1.2 4.4 L3 3.4" fill="none" stroke="#5a9be0" stroke-width="0.7"/></svg>
<div class="t" style="left:623px;top:309.3px;color:#444">Опт Центр</div>
<div class="t" style="left:26.6px;top:317.5px;color:#6c6c6c;font-size:5.2px">514430</div>
<div class="pill G" style="left:48.7px;top:317.8px;width:50.9px"><span>Завершений</span></div>
<svg class="a" style="left:110.3px;top:318.1px" width="9.8" height="6.2" viewBox="0 0 9.8 6.2"><rect x="0" y="0" width="9.8" height="6.2" rx="1.6" fill="#f6dc80"/><path d="M1.6 0 H8.2 Q9.8 0 9.8 1.6 V3 H0 V1.6 Q0 0 1.6 0Z" fill="#3d60ae"/><rect x="0" y="2.9" width="9.8" height="0.35" fill="#d8dce8"/></svg>
<div class="t" style="left:129.8px;top:317.5px;color:#3e3e3e">Ксенія Левадняя</div>
<svg class="a" style="left:194.9px;top:317.6px" width="7" height="7" viewBox="0 0 7 7"><circle cx="3.5" cy="3.5" r="2.8" fill="#fff" stroke="#c8322a" stroke-width="1.3"/><path d="M4 1.6 Q2.2 2.2 2.3 3.9 Q2.6 5.2 3.8 5 Q4.9 4.6 4.6 3.3 Q3.7 3 4 1.6Z" fill="#c8322a"/></svg>
<div class="t" style="left:203.6px;top:317.5px;color:#6a6a6a">+380</div>
<div class="t" style="left:249.2px;top:317.5px;color:#6a6a6a">7</div>
<div class="t" style="left:266.3px;top:317.5px;color:#3e3e3e">22.12 смс ОПХ доставка</div>
<svg class="a" style="left:358.6px;top:317.8px" width="8" height="6" viewBox="0 0 8 6"><rect x="0.5" y="2.2" width="4.6" height="3.4" rx="0.4" fill="none" stroke="#8fbf88" stroke-width="0.8"/><path d="M2.4 3.6 Q3.6 1.4 6 0.8 Q7.6 0.8 7 2.2 Q5.6 3.6 3.4 4.2Z" fill="#2f8a2a"/></svg>
<div class="t" style="left:360px;width:29.8px;text-align:right;top:317.5px;color:#3e3e3e">40.00</div>
<div class="a" style="left:394.4px;top:318.4px;width:5.4px;height:5.4px;border-radius:1.3px;background:#979797;color:#fff;font-weight:bold;font-size:4.2px;line-height:5.6px;text-align:center">1</div>
<div class="t" style="left:402px;top:317.5px;color:#444">Рисуй светом (1шт. x 40.00 = 40...</div>
<svg class="a" style="left:500px;top:317.9px" width="8" height="7" viewBox="0 0 8 7"><path d="M4.4 0.5 L7 0.3 Q7.6 4.4 5 6.3 Q2.4 7.6 0.9 5.6 Q0.2 4 1.4 2.4 L2.7 3.3 Q2.1 4.4 2.8 5 Q4.4 5.6 5.1 3.4 Q5.3 1.8 4.4 0.5Z" fill="#f0b22c"/><path d="M3.4 1.6 Q3.9 3 3.3 4.2" fill="none" stroke="#f4c24a" stroke-width="0.9"/></svg>
<div class="t" style="left:509.4px;top:317.5px;color:#444">Ужгород 88016</div>
<div class="t" style="left:562px;top:317.5px;color:#444">0501691094471</div>
<svg class="a" style="left:612.5px;top:318.4px" width="7" height="6" viewBox="0 0 7 6"><path d="M0.8 3.2 L2.6 4.9 L6.4 1" fill="none" stroke="#3a9032" stroke-width="1.25" stroke-linecap="round" stroke-linejoin="round"/></svg>
<div class="t" style="left:623px;top:317.5px;color:#444">Опт Центр</div>
<div class="t" style="left:26.6px;top:325.7px;color:#6c6c6c;font-size:5.2px">514429</div>
<div class="pill G" style="left:48.7px;top:326px;width:50.9px"><span>Завершений</span></div>
<svg class="a" style="left:110.3px;top:326.3px" width="9.8" height="6.2" viewBox="0 0 9.8 6.2"><rect x="0" y="0" width="9.8" height="6.2" rx="1.6" fill="#f6dc80"/><path d="M1.6 0 H8.2 Q9.8 0 9.8 1.6 V3 H0 V1.6 Q0 0 1.6 0Z" fill="#3d60ae"/><rect x="0" y="2.9" width="9.8" height="0.35" fill="#d8dce8"/></svg>
<div class="t" style="left:129.8px;top:325.7px;color:#3e3e3e">Надія Мерзаєва</div>
<svg class="a" style="left:195px;top:325.9px" width="7" height="7" viewBox="0 0 7 7"><line x1="3.4" y1="3.4" x2="3.4" y2="0.6" stroke="#7ab4ec" stroke-width="0.7" stroke-linecap="round"/><line x1="3.4" y1="3.4" x2="0.98" y2="2" stroke="#7ab4ec" stroke-width="0.7" stroke-linecap="round"/><line x1="3.4" y1="3.4" x2="0.98" y2="4.8" stroke="#7ab4ec" stroke-width="0.7" stroke-linecap="round"/><line x1="3.4" y1="3.4" x2="3.4" y2="6.2" stroke="#7ab4ec" stroke-width="0.7" stroke-linecap="round"/><line x1="3.4" y1="3.4" x2="5.82" y2="4.8" stroke="#7ab4ec" stroke-width="0.7" stroke-linecap="round"/><line x1="3.4" y1="3.4" x2="5.82" y2="2" stroke="#7ab4ec" stroke-width="0.7" stroke-linecap="round"/><circle cx="3.4" cy="3.4" r="0.7" fill="#fff"/></svg>
<div class="t" style="left:203.6px;top:325.7px;color:#6a6a6a">+380</div>
<div class="t" style="left:249.2px;top:325.7px;color:#6a6a6a">3</div>
<div class="t" style="left:266.3px;top:325.7px;color:#3e3e3e">21.12 смс ОПХдоставка</div>
<svg class="a" style="left:358.6px;top:326px" width="8" height="6" viewBox="0 0 8 6"><rect x="0.5" y="2.2" width="4.6" height="3.4" rx="0.4" fill="none" stroke="#8fbf88" stroke-width="0.8"/><path d="M2.4 3.6 Q3.6 1.4 6 0.8 Q7.6 0.8 7 2.2 Q5.6 3.6 3.4 4.2Z" fill="#2f8a2a"/></svg>
<div class="t" style="left:360px;width:29.8px;text-align:right;top:325.7px;color:#3e3e3e">40.00</div>
<div class="a" style="left:394.4px;top:326.6px;width:5.4px;height:5.4px;border-radius:1.3px;background:#979797;color:#fff;font-weight:bold;font-size:4.2px;line-height:5.6px;text-align:center">1</div>
<div class="t" style="left:402px;top:325.7px;color:#444">Рисуй светом (1шт. x 40.00 = 40...</div>
<svg class="a" style="left:500px;top:326.1px" width="8" height="7" viewBox="0 0 8 7"><path d="M4.4 0.5 L7 0.3 Q7.6 4.4 5 6.3 Q2.4 7.6 0.9 5.6 Q0.2 4 1.4 2.4 L2.7 3.3 Q2.1 4.4 2.8 5 Q4.4 5.6 5.1 3.4 Q5.3 1.8 4.4 0.5Z" fill="#f0b22c"/><path d="M3.4 1.6 Q3.9 3 3.3 4.2" fill="none" stroke="#f4c24a" stroke-width="0.9"/></svg>
<div class="t" style="left:509.4px;top:325.7px;color:#444">Коростишів 12...</div>
<div class="t" style="left:562px;top:325.7px;color:#444">0501691093696</div>
<svg class="a" style="left:612.5px;top:326.6px" width="7" height="6" viewBox="0 0 7 6"><path d="M0.8 3.2 L2.6 4.9 L6.4 1" fill="none" stroke="#3a9032" stroke-width="1.25" stroke-linecap="round" stroke-linejoin="round"/></svg>
<div class="t" style="left:623px;top:325.7px;color:#444">Опт Центр</div>
<div class="t" style="left:26.6px;top:333.9px;color:#6c6c6c;font-size:5.2px">514428</div>
<div class="pill G" style="left:48.7px;top:334.2px;width:50.9px"><span>Завершений</span></div>
<svg class="a" style="left:110.3px;top:334.5px" width="9.8" height="6.2" viewBox="0 0 9.8 6.2"><rect x="0" y="0" width="9.8" height="6.2" rx="1.6" fill="#f6dc80"/><path d="M1.6 0 H8.2 Q9.8 0 9.8 1.6 V3 H0 V1.6 Q0 0 1.6 0Z" fill="#3d60ae"/><rect x="0" y="2.9" width="9.8" height="0.35" fill="#d8dce8"/></svg>
<div class="t" style="left:129.8px;top:333.9px;color:#3e3e3e">Солодкова Галина В...</div>
<svg class="a" style="left:195px;top:334.1px" width="7" height="7" viewBox="0 0 7 7"><line x1="3.4" y1="3.4" x2="3.4" y2="0.6" stroke="#7ab4ec" stroke-width="0.7" stroke-linecap="round"/><line x1="3.4" y1="3.4" x2="0.98" y2="2" stroke="#7ab4ec" stroke-width="0.7" stroke-linecap="round"/><line x1="3.4" y1="3.4" x2="0.98" y2="4.8" stroke="#7ab4ec" stroke-width="0.7" stroke-linecap="round"/><line x1="3.4" y1="3.4" x2="3.4" y2="6.2" stroke="#7ab4ec" stroke-width="0.7" stroke-linecap="round"/><line x1="3.4" y1="3.4" x2="5.82" y2="4.8" stroke="#7ab4ec" stroke-width="0.7" stroke-linecap="round"/><line x1="3.4" y1="3.4" x2="5.82" y2="2" stroke="#7ab4ec" stroke-width="0.7" stroke-linecap="round"/><circle cx="3.4" cy="3.4" r="0.7" fill="#fff"/></svg>
<div class="t" style="left:203.6px;top:333.9px;color:#6a6a6a">+380</div>
<div class="t" style="left:249.2px;top:333.9px;color:#6a6a6a">3</div>
<div class="t" style="left:266.3px;top:333.9px;color:#3e3e3e">19.12 14-17 завтра фіалковий,...</div>
<svg class="a" style="left:358.6px;top:334.7px" width="8" height="6" viewBox="0 0 8 6"><rect x="0.4" y="1.2" width="6.2" height="4.4" rx="0.6" fill="none" stroke="#8a8a8a" stroke-width="0.8"/><rect x="0.6" y="2.4" width="3" height="0.8" fill="#8a8a8a"/><rect x="1" y="4" width="4.6" height="0.6" fill="#b0b0b0"/><rect x="4.9" y="0.3" width="2" height="2" rx="0.4" fill="#5aa8ea"/></svg>
<div class="t" style="left:360px;width:29.8px;text-align:right;top:333.9px;color:#3e3e3e">949.00</div>
<div class="a" style="left:394.4px;top:334.8px;width:5.4px;height:5.4px;border-radius:1.3px;background:#979797;color:#fff;font-weight:bold;font-size:4.2px;line-height:5.6px;text-align:center">1</div>
<div class="t" style="left:402px;top:333.9px;color:#444">Костюм на флисе Мод.1014 (1ш...</div>
<svg class="a" style="left:500.6px;top:334.3px" width="7" height="7" viewBox="0 0 7 7"><circle cx="3.2" cy="3.2" r="3.4" fill="#fbe4e4"/><circle cx="3.2" cy="3.2" r="1.4" fill="#fff"/><circle cx="3.2" cy="1" r="1.05" fill="#a04040"/><circle cx="3.2" cy="5.4" r="1.05" fill="#a04040"/><circle cx="1" cy="3.2" r="1" fill="#a04040"/><circle cx="5.4" cy="3.2" r="1" fill="#a04040"/></svg>
<div class="t" style="left:509.4px;top:333.9px;color:#444">Шевченкове (Х...</div>
<div class="t" style="left:562px;top:333.9px;color:#444">20450632610339</div>
<svg class="a" style="left:612.5px;top:334.4px" width="7" height="6.5" viewBox="0 0 7 6.5"><path d="M0.8 3.6 L2.6 5.3 L6.4 1.4" fill="none" stroke="#3a9032" stroke-width="1.25" stroke-linecap="round" stroke-linejoin="round"/><path d="M1.8 0.4 V3" stroke="#3a9032" stroke-width="0.6"/></svg>
<div class="t" style="left:623px;top:333.9px;color:#444">Фішка</div>
<div class="t" style="left:26.6px;top:342.1px;color:#6c6c6c;font-size:5.2px">514427</div>
<div class="pill G" style="left:48.7px;top:342.4px;width:50.9px"><span>Завершений</span></div>
<svg class="a" style="left:110.3px;top:342.7px" width="9.8" height="6.2" viewBox="0 0 9.8 6.2"><rect x="0" y="0" width="9.8" height="6.2" rx="1.6" fill="#f6dc80"/><path d="M1.6 0 H8.2 Q9.8 0 9.8 1.6 V3 H0 V1.6 Q0 0 1.6 0Z" fill="#3d60ae"/><rect x="0" y="2.9" width="9.8" height="0.35" fill="#d8dce8"/></svg>
<div class="t" style="left:129.8px;top:342.1px;color:#3e3e3e">Юлия Иванова</div>
<svg class="a" style="left:194.9px;top:342.2px" width="7" height="7" viewBox="0 0 7 7"><circle cx="3.5" cy="3.5" r="2.8" fill="#fff" stroke="#c8322a" stroke-width="1.3"/><path d="M4 1.6 Q2.2 2.2 2.3 3.9 Q2.6 5.2 3.8 5 Q4.9 4.6 4.6 3.3 Q3.7 3 4 1.6Z" fill="#c8322a"/></svg>
<div class="t" style="left:203.6px;top:342.1px;color:#6a6a6a">+380</div>
<div class="t" style="left:249.2px;top:342.1px;color:#6a6a6a">8</div>
<div class="t" style="left:266.3px;top:342.1px;color:#3e3e3e">22.12 смс ОПХ доставка</div>
<svg class="a" style="left:358.6px;top:342.4px" width="8" height="6" viewBox="0 0 8 6"><rect x="0.5" y="2.2" width="4.6" height="3.4" rx="0.4" fill="none" stroke="#8fbf88" stroke-width="0.8"/><path d="M2.4 3.6 Q3.6 1.4 6 0.8 Q7.6 0.8 7 2.2 Q5.6 3.6 3.4 4.2Z" fill="#2f8a2a"/></svg>
<div class="t" style="left:360px;width:29.8px;text-align:right;top:342.1px;color:#3e3e3e">40.00</div>
<div class="a" style="left:394.4px;top:343px;width:5.4px;height:5.4px;border-radius:1.3px;background:#979797;color:#fff;font-weight:bold;font-size:4.2px;line-height:5.6px;text-align:center">1</div>
<div class="t" style="left:402px;top:342.1px;color:#444">Набор для рисования в темнот...</div>
<svg class="a" style="left:500px;top:342.5px" width="8" height="7" viewBox="0 0 8 7"><path d="M4.4 0.5 L7 0.3 Q7.6 4.4 5 6.3 Q2.4 7.6 0.9 5.6 Q0.2 4 1.4 2.4 L2.7 3.3 Q2.1 4.4 2.8 5 Q4.4 5.6 5.1 3.4 Q5.3 1.8 4.4 0.5Z" fill="#f0b22c"/><path d="M3.4 1.6 Q3.9 3 3.3 4.2" fill="none" stroke="#f4c24a" stroke-width="0.9"/></svg>
<div class="t" style="left:509.4px;top:342.1px;color:#444">Київ 04201</div>
<div class="t" style="left:562px;top:342.1px;color:#444">0501690904500</div>
<svg class="a" style="left:612.5px;top:343px" width="7" height="6" viewBox="0 0 7 6"><path d="M0.8 3.2 L2.6 4.9 L6.4 1" fill="none" stroke="#3a9032" stroke-width="1.25" stroke-linecap="round" stroke-linejoin="round"/></svg>
<div class="t" style="left:623px;top:342.1px;color:#444">Опт Центр</div>
<div class="t" style="left:26.6px;top:350.3px;color:#6c6c6c;font-size:5.2px">514426</div>
<div class="pill G" style="left:48.7px;top:350.6px;width:50.9px"><span>Завершений</span></div>
<svg class="a" style="left:110.3px;top:350.9px" width="9.8" height="6.2" viewBox="0 0 9.8 6.2"><rect x="0" y="0" width="9.8" height="6.2" rx="1.6" fill="#f6dc80"/><path d="M1.6 0 H8.2 Q9.8 0 9.8 1.6 V3 H0 V1.6 Q0 0 1.6 0Z" fill="#3d60ae"/><rect x="0" y="2.9" width="9.8" height="0.35" fill="#d8dce8"/></svg>
<div class="t" style="left:129.8px;top:350.3px;color:#3e3e3e">Кучук Антонина</div>
<svg class="a" style="left:194.9px;top:350.4px" width="7" height="7" viewBox="0 0 7 7"><circle cx="3.5" cy="3.5" r="3.3" fill="#f1cc5a"/><text x="1.6" y="5" font-size="3.6" font-family="Liberation Sans" font-weight="bold" fill="#555">lc</text></svg>
<div class="t" style="left:203.6px;top:350.3px;color:#6a6a6a">+380</div>
<div class="t" style="left:249.2px;top:350.3px;color:#6a6a6a">4</div>
<div class="t" style="left:266.3px;top:350.3px;color:#3e3e3e">16.12 смс фіалковий, 52-54</div>
<svg class="a" style="left:358.6px;top:351.1px" width="8" height="6" viewBox="0 0 8 6"><rect x="0.4" y="1.2" width="6.2" height="4.4" rx="0.6" fill="none" stroke="#8a8a8a" stroke-width="0.8"/><rect x="0.6" y="2.4" width="3" height="0.8" fill="#8a8a8a"/><rect x="1" y="4" width="4.6" height="0.6" fill="#b0b0b0"/><rect x="4.9" y="0.3" width="2" height="2" rx="0.4" fill="#5aa8ea"/></svg>
<div class="t" style="left:360px;width:29.8px;text-align:right;top:350.3px;color:#3e3e3e">949.00</div>
<div class="a" style="left:394.4px;top:351.2px;width:5.4px;height:5.4px;border-radius:1.3px;background:#979797;color:#fff;font-weight:bold;font-size:4.2px;line-height:5.6px;text-align:center">1</div>
<div class="t" style="left:402px;top:350.3px;color:#444">Костюм на флисе Мод.1014 (1ш...</div>
<svg class="a" style="left:500.6px;top:350.7px" width="7" height="7" viewBox="0 0 7 7"><circle cx="3.2" cy="3.2" r="3.4" fill="#fbe4e4"/><circle cx="3.2" cy="3.2" r="1.4" fill="#fff"/><circle cx="3.2" cy="1" r="1.05" fill="#a04040"/><circle cx="3.2" cy="5.4" r="1.05" fill="#a04040"/><circle cx="1" cy="3.2" r="1" fill="#a04040"/><circle cx="5.4" cy="3.2" r="1" fill="#a04040"/></svg>
<div class="t" style="left:509.4px;top:350.3px;color:#444">Чернігів, Відділ...</div>
<div class="t" style="left:562px;top:350.3px;color:#444">20450632483003</div>
<svg class="a" style="left:612.5px;top:350.8px" width="7" height="6.5" viewBox="0 0 7 6.5"><path d="M0.8 3.6 L2.6 5.3 L6.4 1.4" fill="none" stroke="#3a9032" stroke-width="1.25" stroke-linecap="round" stroke-linejoin="round"/><path d="M1.8 0.4 V3" stroke="#3a9032" stroke-width="0.6"/></svg>
<div class="t" style="left:623px;top:350.3px;color:#444">Фішка</div>
<div class="t" style="left:26.6px;top:358.5px;color:#6c6c6c;font-size:5.2px">514425</div>
<div class="pill G" style="left:48.7px;top:358.8px;width:50.9px"><span>Завершений</span></div>
<svg class="a" style="left:110.3px;top:359.1px" width="9.8" height="6.2" viewBox="0 0 9.8 6.2"><rect x="0" y="0" width="9.8" height="6.2" rx="1.6" fill="#f6dc80"/><path d="M1.6 0 H8.2 Q9.8 0 9.8 1.6 V3 H0 V1.6 Q0 0 1.6 0Z" fill="#3d60ae"/><rect x="0" y="2.9" width="9.8" height="0.35" fill="#d8dce8"/></svg>
<div class="t" style="left:129.8px;top:358.5px;color:#3e3e3e">Радченко Тетяна</div>
<svg class="a" style="left:195px;top:358.7px" width="7" height="7" viewBox="0 0 7 7"><line x1="3.4" y1="3.4" x2="3.4" y2="0.6" stroke="#7ab4ec" stroke-width="0.7" stroke-linecap="round"/><line x1="3.4" y1="3.4" x2="0.98" y2="2" stroke="#7ab4ec" stroke-width="0.7" stroke-linecap="round"/><line x1="3.4" y1="3.4" x2="0.98" y2="4.8" stroke="#7ab4ec" stroke-width="0.7" stroke-linecap="round"/><line x1="3.4" y1="3.4" x2="3.4" y2="6.2" stroke="#7ab4ec" stroke-width="0.7" stroke-linecap="round"/><line x1="3.4" y1="3.4" x2="5.82" y2="4.8" stroke="#7ab4ec" stroke-width="0.7" stroke-linecap="round"/><line x1="3.4" y1="3.4" x2="5.82" y2="2" stroke="#7ab4ec" stroke-width="0.7" stroke-linecap="round"/><circle cx="3.4" cy="3.4" r="0.7" fill="#fff"/></svg>
<div class="t" style="left:203.6px;top:358.5px;color:#6a6a6a">+380</div>
<div class="t" style="left:249.2px;top:358.5px;color:#6a6a6a">0</div>
<div class="t" style="left:266.3px;top:358.5px;color:#3e3e3e">ОПХ</div>
<svg class="a" style="left:358.8px;top:358.6px" width="7" height="7" viewBox="0 0 7 7"><circle cx="3.5" cy="3.5" r="3" fill="#e6f4e2" stroke="#4a9a4a" stroke-width="0.9"/><text x="2.2" y="5.3" font-size="4.6" font-family="Liberation Sans" fill="#3a8a3a">$</text></svg>
<div class="t" style="left:360px;width:29.8px;text-align:right;top:358.5px;color:#3e3e3e">40.00</div>
<div class="a" style="left:394.4px;top:359.4px;width:5.4px;height:5.4px;border-radius:1.3px;background:#979797;color:#fff;font-weight:bold;font-size:4.2px;line-height:5.6px;text-align:center">1</div>
<div class="t" style="left:402px;top:358.5px;color:#444">Набор для рисования в темнот...</div>
<svg class="a" style="left:500.6px;top:358.9px" width="7" height="7" viewBox="0 0 7 7"><circle cx="3.2" cy="3.2" r="3.4" fill="#fbe4e4"/><circle cx="3.2" cy="3.2" r="1.4" fill="#fff"/><circle cx="3.2" cy="1" r="1.05" fill="#a04040"/><circle cx="3.2" cy="5.4" r="1.05" fill="#a04040"/><circle cx="1" cy="3.2" r="1" fill="#a04040"/><circle cx="5.4" cy="3.2" r="1" fill="#a04040"/></svg>
<div class="t" style="left:509.4px;top:358.5px;color:#444">Київ, Відділенн...</div>
<div class="t" style="left:562px;top:358.5px;color:#444">20450632450236</div>
<svg class="a" style="left:612.5px;top:359.4px" width="7" height="6" viewBox="0 0 7 6"><path d="M0.8 3.2 L2.6 4.9 L6.4 1" fill="none" stroke="#3a9032" stroke-width="1.25" stroke-linecap="round" stroke-linejoin="round"/></svg>
<div class="t" style="left:623px;top:358.5px;color:#444">Опт Центр</div>
<div class="t" style="left:26.6px;top:366.7px;color:#6c6c6c;font-size:5.2px">514424</div>
<div class="pill G" style="left:48.7px;top:367px;width:50.9px"><span>Завершений</span></div>
<svg class="a" style="left:110.3px;top:367.3px" width="9.8" height="6.2" viewBox="0 0 9.8 6.2"><rect x="0" y="0" width="9.8" height="6.2" rx="1.6" fill="#f6dc80"/><path d="M1.6 0 H8.2 Q9.8 0 9.8 1.6 V3 H0 V1.6 Q0 0 1.6 0Z" fill="#3d60ae"/><rect x="0" y="2.9" width="9.8" height="0.35" fill="#d8dce8"/></svg>
<div class="t" style="left:129.8px;top:366.7px;color:#3e3e3e">Михаил Гилецький</div>
<svg class="a" style="left:194.9px;top:366.8px" width="7" height="7" viewBox="0 0 7 7"><circle cx="3.5" cy="3.5" r="3.3" fill="#f1cc5a"/><text x="1.6" y="5" font-size="3.6" font-family="Liberation Sans" font-weight="bold" fill="#555">lc</text></svg>
<div class="t" style="left:203.6px;top:366.7px;color:#6a6a6a">+380</div>
<div class="t" style="left:249.2px;top:366.7px;color:#6a6a6a">3</div>
<div class="t" style="left:266.3px;top:366.7px;color:#3e3e3e">ОПХ доставка</div>
<svg class="a" style="left:358.6px;top:367px" width="8" height="6" viewBox="0 0 8 6"><rect x="0.5" y="2.2" width="4.6" height="3.4" rx="0.4" fill="none" stroke="#8fbf88" stroke-width="0.8"/><path d="M2.4 3.6 Q3.6 1.4 6 0.8 Q7.6 0.8 7 2.2 Q5.6 3.6 3.4 4.2Z" fill="#2f8a2a"/></svg>
<div class="t" style="left:360px;width:29.8px;text-align:right;top:366.7px;color:#3e3e3e">80.00</div>
<div class="a" style="left:394.4px;top:367.6px;width:5.4px;height:5.4px;border-radius:1.3px;background:#979797;color:#fff;font-weight:bold;font-size:4.2px;line-height:5.6px;text-align:center">2</div>
<div class="t" style="left:402px;top:366.7px;color:#444">Рисуй светом (2шт. x 40.00 = 80...</div>
<svg class="a" style="left:500px;top:367.1px" width="8" height="7" viewBox="0 0 8 7"><path d="M4.4 0.5 L7 0.3 Q7.6 4.4 5 6.3 Q2.4 7.6 0.9 5.6 Q0.2 4 1.4 2.4 L2.7 3.3 Q2.1 4.4 2.8 5 Q4.4 5.6 5.1 3.4 Q5.3 1.8 4.4 0.5Z" fill="#f0b22c"/><path d="M3.4 1.6 Q3.9 3 3.3 4.2" fill="none" stroke="#f4c24a" stroke-width="0.9"/></svg>
<div class="t" style="left:509.4px;top:366.7px;color:#444">Баштанка 56101</div>
<div class="t" style="left:562px;top:366.7px;color:#444">0501690840870</div>
<svg class="a" style="left:612.5px;top:367.6px" width="7" height="6" viewBox="0 0 7 6"><path d="M0.8 3.2 L2.6 4.9 L6.4 1" fill="none" stroke="#3a9032" stroke-width="1.25" stroke-linecap="round" stroke-linejoin="round"/></svg>
<div class="t" style="left:623px;top:366.7px;color:#444">Опт Центр</div>
<div class="t" style="left:26.6px;top:374.9px;color:#6c6c6c;font-size:5.2px">514423</div>
<div class="pill G" style="left:48.7px;top:375.2px;width:50.9px"><span>Завершений</span></div>
<svg class="a" style="left:110.3px;top:375.5px" width="9.8" height="6.2" viewBox="0 0 9.8 6.2"><rect x="0" y="0" width="9.8" height="6.2" rx="1.6" fill="#f6dc80"/><path d="M1.6 0 H8.2 Q9.8 0 9.8 1.6 V3 H0 V1.6 Q0 0 1.6 0Z" fill="#3d60ae"/><rect x="0" y="2.9" width="9.8" height="0.35" fill="#d8dce8"/></svg>
<div class="t" style="left:129.8px;top:374.9px;color:#3e3e3e">Вера Скляренко</div>
<svg class="a" style="left:195px;top:375.1px" width="7" height="7" viewBox="0 0 7 7"><line x1="3.4" y1="3.4" x2="3.4" y2="0.6" stroke="#7ab4ec" stroke-width="0.7" stroke-linecap="round"/><line x1="3.4" y1="3.4" x2="0.98" y2="2" stroke="#7ab4ec" stroke-width="0.7" stroke-linecap="round"/><line x1="3.4" y1="3.4" x2="0.98" y2="4.8" stroke="#7ab4ec" stroke-width="0.7" stroke-linecap="round"/><line x1="3.4" y1="3.4" x2="3.4" y2="6.2" stroke="#7ab4ec" stroke-width="0.7" stroke-linecap="round"/><line x1="3.4" y1="3.4" x2="5.82" y2="4.8" stroke="#7ab4ec" stroke-width="0.7" stroke-linecap="round"/><line x1="3.4" y1="3.4" x2="5.82" y2="2" stroke="#7ab4ec" stroke-width="0.7" stroke-linecap="round"/><circle cx="3.4" cy="3.4" r="0.7" fill="#fff"/></svg>
<div class="t" style="left:203.6px;top:374.9px;color:#6a6a6a">+380</div>
<div class="t" style="left:249.2px;top:374.9px;color:#6a6a6a">1</div>
<div class="t" style="left:266.3px;top:374.9px;color:#3e3e3e">ОПХ доставка</div>
<svg class="a" style="left:358.6px;top:375.2px" width="8" height="6" viewBox="0 0 8 6"><rect x="0.5" y="2.2" width="4.6" height="3.4" rx="0.4" fill="none" stroke="#8fbf88" stroke-width="0.8"/><path d="M2.4 3.6 Q3.6 1.4 6 0.8 Q7.6 0.8 7 2.2 Q5.6 3.6 3.4 4.2Z" fill="#2f8a2a"/></svg>
<div class="t" style="left:360px;width:29.8px;text-align:right;top:374.9px;color:#3e3e3e">99.00</div>
<div class="a" style="left:394.4px;top:375.8px;width:5.4px;height:5.4px;border-radius:1.3px;background:#979797;color:#fff;font-weight:bold;font-size:4.2px;line-height:5.6px;text-align:center">1</div>
<div class="t" style="left:402px;top:374.9px;color:#444">Карта памяти 10 класс - 32Гб *1...</div>
<svg class="a" style="left:500px;top:375.3px" width="8" height="7" viewBox="0 0 8 7"><path d="M4.4 0.5 L7 0.3 Q7.6 4.4 5 6.3 Q2.4 7.6 0.9 5.6 Q0.2 4 1.4 2.4 L2.7 3.3 Q2.1 4.4 2.8 5 Q4.4 5.6 5.1 3.4 Q5.3 1.8 4.4 0.5Z" fill="#f0b22c"/><path d="M3.4 1.6 Q3.9 3 3.3 4.2" fill="none" stroke="#f4c24a" stroke-width="0.9"/></svg>
<div class="t" style="left:509.4px;top:374.9px;color:#444">Корець 34700</div>
<div class="t" style="left:562px;top:374.9px;color:#444">0501690822147</div>
<svg class="a" style="left:612.5px;top:375.8px" width="7" height="6" viewBox="0 0 7 6"><path d="M0.8 3.2 L2.6 4.9 L6.4 1" fill="none" stroke="#3a9032" stroke-width="1.25" stroke-linecap="round" stroke-linejoin="round"/></svg>
<div class="t" style="left:623px;top:374.9px;color:#444">Опт Центр</div>
<div class="t" style="left:26.6px;top:383.1px;color:#6c6c6c;font-size:5.2px">514422</div>
<div class="pill G" style="left:48.7px;top:383.4px;width:50.9px"><span>Завершений</span></div>
<svg class="a" style="left:110.3px;top:383.7px" width="9.8" height="6.2" viewBox="0 0 9.8 6.2"><rect x="0" y="0" width="9.8" height="6.2" rx="1.6" fill="#f6dc80"/><path d="M1.6 0 H8.2 Q9.8 0 9.8 1.6 V3 H0 V1.6 Q0 0 1.6 0Z" fill="#3d60ae"/><rect x="0" y="2.9" width="9.8" height="0.35" fill="#d8dce8"/></svg>
<div class="t" style="left:129.8px;top:383.1px;color:#3e3e3e">Михаил Гилецький</div>
<svg class="a" style="left:194.9px;top:383.2px" width="7" height="7" viewBox="0 0 7 7"><circle cx="3.5" cy="3.5" r="3.3" fill="#f1cc5a"/><text x="1.6" y="5" font-size="3.6" font-family="Liberation Sans" font-weight="bold" fill="#555">lc</text></svg>
<div class="t" style="left:203.6px;top:383.1px;color:#6a6a6a">+380</div>
<div class="t" style="left:249.2px;top:383.1px;color:#6a6a6a">3</div>
<div class="t" style="left:266.3px;top:383.1px;color:#3e3e3e">ОПХ доставка</div>
<svg class="a" style="left:358.6px;top:383.4px" width="8" height="6" viewBox="0 0 8 6"><rect x="0.5" y="2.2" width="4.6" height="3.4" rx="0.4" fill="none" stroke="#8fbf88" stroke-width="0.8"/><path d="M2.4 3.6 Q3.6 1.4 6 0.8 Q7.6 0.8 7 2.2 Q5.6 3.6 3.4 4.2Z" fill="#2f8a2a"/></svg>
<div class="t" style="left:360px;width:29.8px;text-align:right;top:383.1px;color:#3e3e3e">231.00</div>
<div class="a" style="left:394.4px;top:384px;width:5.4px;height:5.4px;border-radius:1.3px;background:#979797;color:#fff;font-weight:bold;font-size:4.2px;line-height:5.6px;text-align:center">1</div>
<div class="t" style="left:402px;top:383.1px;color:#444">Светящийся гоночный трек Ма...</div>
<svg class="a" style="left:500px;top:383.5px" width="8" height="7" viewBox="0 0 8 7"><path d="M4.4 0.5 L7 0.3 Q7.6 4.4 5 6.3 Q2.4 7.6 0.9 5.6 Q0.2 4 1.4 2.4 L2.7 3.3 Q2.1 4.4 2.8 5 Q4.4 5.6 5.1 3.4 Q5.3 1.8 4.4 0.5Z" fill="#f0b22c"/><path d="M3.4 1.6 Q3.9 3 3.3 4.2" fill="none" stroke="#f4c24a" stroke-width="0.9"/></svg>
<div class="t" style="left:509.4px;top:383.1px;color:#444">Баштанка 56101</div>
<div class="t" style="left:562px;top:383.1px;color:#444">0501690820918</div>
<svg class="a" style="left:612.5px;top:384px" width="7" height="6" viewBox="0 0 7 6"><path d="M0.8 3.2 L2.6 4.9 L6.4 1" fill="none" stroke="#3a9032" stroke-width="1.25" stroke-linecap="round" stroke-linejoin="round"/></svg>
<div class="t" style="left:623px;top:383.1px;color:#444">Опт Центр</div>
<div class="t" style="left:26.6px;top:391.3px;color:#6c6c6c;font-size:5.2px">514421</div>
<div class="pill G" style="left:48.7px;top:391.6px;width:50.9px"><span>Завершений</span></div>
<svg class="a" style="left:110.3px;top:391.9px" width="9.8" height="6.2" viewBox="0 0 9.8 6.2"><rect x="0" y="0" width="9.8" height="6.2" rx="1.6" fill="#f6dc80"/><path d="M1.6 0 H8.2 Q9.8 0 9.8 1.6 V3 H0 V1.6 Q0 0 1.6 0Z" fill="#3d60ae"/><rect x="0" y="2.9" width="9.8" height="0.35" fill="#d8dce8"/></svg>
<div class="t" style="left:129.8px;top:391.3px;color:#3e3e3e">Сергей</div>
<svg class="a" style="left:194.9px;top:391.4px" width="7" height="7" viewBox="0 0 7 7"><circle cx="3.5" cy="3.5" r="2.8" fill="#fff" stroke="#c8322a" stroke-width="1.3"/><path d="M4 1.6 Q2.2 2.2 2.3 3.9 Q2.6 5.2 3.8 5 Q4.9 4.6 4.6 3.3 Q3.7 3 4 1.6Z" fill="#c8322a"/></svg>
<div class="t" style="left:203.6px;top:391.3px;color:#6a6a6a">+380</div>
<div class="t" style="left:249.2px;top:391.3px;color:#6a6a6a">5</div>
<div class="t" style="left:266.3px;top:391.3px;color:#3e3e3e"></div>
<svg class="a" style="left:358.6px;top:392.1px" width="8" height="6" viewBox="0 0 8 6"><rect x="0.4" y="1.2" width="6.2" height="4.4" rx="0.6" fill="none" stroke="#8a8a8a" stroke-width="0.8"/><rect x="0.6" y="2.4" width="3" height="0.8" fill="#8a8a8a"/><rect x="1" y="4" width="4.6" height="0.6" fill="#b0b0b0"/><rect x="4.9" y="0.3" width="2" height="2" rx="0.4" fill="#5aa8ea"/></svg>
<div class="t" style="left:360px;width:29.8px;text-align:right;top:391.3px;color:#3e3e3e">99.00</div>
<div class="a" style="left:394.4px;top:392.2px;width:5.4px;height:5.4px;border-radius:1.3px;background:#979797;color:#fff;font-weight:bold;font-size:4.2px;line-height:5.6px;text-align:center">1</div>
<div class="t" style="left:402px;top:391.3px;color:#444">Карта памяти 10 класс - 32Гб *1...</div>
<svg class="a" style="left:500.6px;top:391.8px" width="7" height="7" viewBox="0 0 7 7"><path d="M0.6 0.6 L2.8 3.2 L2 6 L3.2 6 L3.8 3.8 L6.2 3.2 L5.6 1.6 L3 1.8Z" fill="#1e1e1e"/></svg>
<div class="t" style="left:509.4px;top:391.3px;color:#444">Кривой рог</div>
<div class="t" style="left:562px;top:391.3px;color:#444"></div>
<div class="t" style="left:623px;top:391.3px;color:#444">Опт Центр</div>
<div class="t" style="left:26.6px;top:399.5px;color:#6c6c6c;font-size:5.2px">514420</div>
<div class="pill P" style="left:48.7px;top:399.8px;width:50.9px"><span>Відмова</span></div>
<svg class="a" style="left:110.3px;top:400.1px" width="9.8" height="6.2" viewBox="0 0 9.8 6.2"><rect x="0" y="0" width="9.8" height="6.2" rx="1.6" fill="#f6dc80"/><path d="M1.6 0 H8.2 Q9.8 0 9.8 1.6 V3 H0 V1.6 Q0 0 1.6 0Z" fill="#3d60ae"/><rect x="0" y="2.9" width="9.8" height="0.35" fill="#d8dce8"/></svg>
<div class="t" style="left:129.8px;top:399.5px;color:#3e3e3e">Ситарчук Наталія Гр...</div>
<svg class="a" style="left:195px;top:399.7px" width="7" height="7" viewBox="0 0 7 7"><line x1="3.4" y1="3.4" x2="3.4" y2="0.6" stroke="#7ab4ec" stroke-width="0.7" stroke-linecap="round"/><line x1="3.4" y1="3.4" x2="0.98" y2="2" stroke="#7ab4ec" stroke-width="0.7" stroke-linecap="round"/><line x1="3.4" y1="3.4" x2="0.98" y2="4.8" stroke="#7ab4ec" stroke-width="0.7" stroke-linecap="round"/><line x1="3.4" y1="3.4" x2="3.4" y2="6.2" stroke="#7ab4ec" stroke-width="0.7" stroke-linecap="round"/><line x1="3.4" y1="3.4" x2="5.82" y2="4.8" stroke="#7ab4ec" stroke-width="0.7" stroke-linecap="round"/><line x1="3.4" y1="3.4" x2="5.82" y2="2" stroke="#7ab4ec" stroke-width="0.7" stroke-linecap="round"/><circle cx="3.4" cy="3.4" r="0.7" fill="#fff"/></svg>
<div class="t" style="left:203.6px;top:399.5px;color:#6a6a6a">+380</div>
<div class="t" style="left:249.2px;top:399.5px;color:#6a6a6a">9</div>
<div class="t" style="left:266.3px;top:399.5px;color:#3e3e3e">Чорний ,56-58 , хотела исключ...</div>
<svg class="a" style="left:358.6px;top:400.3px" width="8" height="6" viewBox="0 0 8 6"><rect x="0.4" y="1.2" width="6.2" height="4.4" rx="0.6" fill="none" stroke="#8a8a8a" stroke-width="0.8"/><rect x="0.6" y="2.4" width="3" height="0.8" fill="#8a8a8a"/><rect x="1" y="4" width="4.6" height="0.6" fill="#b0b0b0"/><rect x="4.9" y="0.3" width="2" height="2" rx="0.4" fill="#5aa8ea"/></svg>
<div class="t" style="left:360px;width:29.8px;text-align:right;top:399.5px;color:#3e3e3e">949.00</div>
<div class="a" style="left:394.4px;top:400.4px;width:5.4px;height:5.4px;border-radius:1.3px;background:#979797;color:#fff;font-weight:bold;font-size:4.2px;line-height:5.6px;text-align:center">1</div>
<div class="t" style="left:402px;top:399.5px;color:#444">Костюм на флисе Мод.1014 (1ш...</div>
<svg class="a" style="left:500px;top:399.9px" width="8" height="7" viewBox="0 0 8 7"><path d="M4.4 0.5 L7 0.3 Q7.6 4.4 5 6.3 Q2.4 7.6 0.9 5.6 Q0.2 4 1.4 2.4 L2.7 3.3 Q2.1 4.4 2.8 5 Q4.4 5.6 5.1 3.4 Q5.3 1.8 4.4 0.5Z" fill="#f0b22c"/><path d="M3.4 1.6 Q3.9 3 3.3 4.2" fill="none" stroke="#f4c24a" stroke-width="0.9"/></svg>
<div class="t" style="left:509.4px;top:399.5px;color:#444">Украина, м. Но...</div>
<div class="t" style="left:562px;top:399.5px;color:#444">0503241546065</div>
<div class="t" style="left:613.2px;top:398.6px;color:#474747;font-size:8px;line-height:8.6px">?</div>
<div class="t" style="left:623px;top:399.5px;color:#444">Фішка</div>
<div class="t" style="left:26.6px;top:407.7px;color:#6c6c6c;font-size:5.2px">514419</div>
<div class="pill G" style="left:48.7px;top:408px;width:50.9px"><span>Завершений</span></div>
<svg class="a" style="left:110.3px;top:408.3px" width="9.8" height="6.2" viewBox="0 0 9.8 6.2"><rect x="0" y="0" width="9.8" height="6.2" rx="1.6" fill="#f6dc80"/><path d="M1.6 0 H8.2 Q9.8 0 9.8 1.6 V3 H0 V1.6 Q0 0 1.6 0Z" fill="#3d60ae"/><rect x="0" y="2.9" width="9.8" height="0.35" fill="#d8dce8"/></svg>
<div class="t" style="left:129.8px;top:407.7px;color:#3e3e3e">Лилия Подолинская</div>
<svg class="a" style="left:194.9px;top:407.8px" width="7" height="7" viewBox="0 0 7 7"><circle cx="3.5" cy="3.5" r="2.8" fill="#fff" stroke="#c8322a" stroke-width="1.3"/><path d="M4 1.6 Q2.2 2.2 2.3 3.9 Q2.6 5.2 3.8 5 Q4.9 4.6 4.6 3.3 Q3.7 3 4 1.6Z" fill="#c8322a"/></svg>
<div class="t" style="left:203.6px;top:407.7px;color:#6a6a6a">+380</div>
<div class="t" style="left:249.2px;top:407.7px;color:#6a6a6a">5</div>
<div class="t" style="left:266.3px;top:407.7px;color:#3e3e3e">22.12 смс ОПХ доставка. ХХХЛ</div>
<svg class="a" style="left:358.6px;top:408px" width="8" height="6" viewBox="0 0 8 6"><rect x="0.5" y="2.2" width="4.6" height="3.4" rx="0.4" fill="none" stroke="#8fbf88" stroke-width="0.8"/><path d="M2.4 3.6 Q3.6 1.4 6 0.8 Q7.6 0.8 7 2.2 Q5.6 3.6 3.4 4.2Z" fill="#2f8a2a"/></svg>
<div class="t" style="left:360px;width:29.8px;text-align:right;top:407.7px;color:#3e3e3e">71.00</div>
<div class="a" style="left:394.4px;top:408.6px;width:5.4px;height:5.4px;border-radius:1.3px;background:#979797;color:#fff;font-weight:bold;font-size:4.2px;line-height:5.6px;text-align:center">1</div>
<div class="t" style="left:402px;top:407.7px;color:#444">Майка-корсет Waist Trainer *142...</div>
<svg class="a" style="left:500px;top:408.1px" width="8" height="7" viewBox="0 0 8 7"><path d="M4.4 0.5 L7 0.3 Q7.6 4.4 5 6.3 Q2.4 7.6 0.9 5.6 Q0.2 4 1.4 2.4 L2.7 3.3 Q2.1 4.4 2.8 5 Q4.4 5.6 5.1 3.4 Q5.3 1.8 4.4 0.5Z" fill="#f0b22c"/><path d="M3.4 1.6 Q3.9 3 3.3 4.2" fill="none" stroke="#f4c24a" stroke-width="0.9"/></svg>
<div class="t" style="left:509.4px;top:407.7px;color:#444">Запоріжжя 690...</div>
<div class="t" style="left:562px;top:407.7px;color:#444">0501690672838</div>
<svg class="a" style="left:612.5px;top:408.6px" width="7" height="6" viewBox="0 0 7 6"><path d="M0.8 3.2 L2.6 4.9 L6.4 1" fill="none" stroke="#3a9032" stroke-width="1.25" stroke-linecap="round" stroke-linejoin="round"/></svg>
<div class="t" style="left:623px;top:407.7px;color:#444">Опт Центр</div>
<div class="t" style="left:26.6px;top:415.9px;color:#6c6c6c;font-size:5.2px">514418</div>
<div class="pill G" style="left:48.7px;top:416.2px;width:50.9px"><span>Завершений</span></div>
<svg class="a" style="left:110.3px;top:416.5px" width="9.8" height="6.2" viewBox="0 0 9.8 6.2"><rect x="0" y="0" width="9.8" height="6.2" rx="1.6" fill="#f6dc80"/><path d="M1.6 0 H8.2 Q9.8 0 9.8 1.6 V3 H0 V1.6 Q0 0 1.6 0Z" fill="#3d60ae"/><rect x="0" y="2.9" width="9.8" height="0.35" fill="#d8dce8"/></svg>
<div class="t" style="left:129.8px;top:415.9px;color:#3e3e3e">Тетяна Войтович</div>
<svg class="a" style="left:195px;top:416.1px" width="7" height="7" viewBox="0 0 7 7"><line x1="3.4" y1="3.4" x2="3.4" y2="0.6" stroke="#7ab4ec" stroke-width="0.7" stroke-linecap="round"/><line x1="3.4" y1="3.4" x2="0.98" y2="2" stroke="#7ab4ec" stroke-width="0.7" stroke-linecap="round"/><line x1="3.4" y1="3.4" x2="0.98" y2="4.8" stroke="#7ab4ec" stroke-width="0.7" stroke-linecap="round"/><line x1="3.4" y1="3.4" x2="3.4" y2="6.2" stroke="#7ab4ec" stroke-width="0.7" stroke-linecap="round"/><line x1="3.4" y1="3.4" x2="5.82" y2="4.8" stroke="#7ab4ec" stroke-width="0.7" stroke-linecap="round"/><line x1="3.4" y1="3.4" x2="5.82" y2="2" stroke="#7ab4ec" stroke-width="0.7" stroke-linecap="round"/><circle cx="3.4" cy="3.4" r="0.7" fill="#fff"/></svg>
<div class="t" style="left:203.6px;top:415.9px;color:#6a6a6a">+380</div>
<div class="t" style="left:249.2px;top:415.9px;color:#6a6a6a">6</div>
<div class="t" style="left:266.3px;top:415.9px;color:#3e3e3e">21.12 смс ОПХ доставка</div>
<svg class="a" style="left:358.6px;top:416.2px" width="8" height="6" viewBox="0 0 8 6"><rect x="0.5" y="2.2" width="4.6" height="3.4" rx="0.4" fill="none" stroke="#8fbf88" stroke-width="0.8"/><path d="M2.4 3.6 Q3.6 1.4 6 0.8 Q7.6 0.8 7 2.2 Q5.6 3.6 3.4 4.2Z" fill="#2f8a2a"/></svg>
<div class="t" style="left:360px;width:29.8px;text-align:right;top:415.9px;color:#3e3e3e">231.00</div>
<div class="a" style="left:394.4px;top:416.8px;width:5.4px;height:5.4px;border-radius:1.3px;background:#979797;color:#fff;font-weight:bold;font-size:4.2px;line-height:5.6px;text-align:center">1</div>
<div class="t" style="left:402px;top:415.9px;color:#444">Светящийся гоночный трек Ма...</div>
<svg class="a" style="left:500px;top:416.3px" width="8" height="7" viewBox="0 0 8 7"><path d="M4.4 0.5 L7 0.3 Q7.6 4.4 5 6.3 Q2.4 7.6 0.9 5.6 Q0.2 4 1.4 2.4 L2.7 3.3 Q2.1 4.4 2.8 5 Q4.4 5.6 5.1 3.4 Q5.3 1.8 4.4 0.5Z" fill="#f0b22c"/><path d="M3.4 1.6 Q3.9 3 3.3 4.2" fill="none" stroke="#f4c24a" stroke-width="0.9"/></svg>
<div class="t" style="left:509.4px;top:415.9px;color:#444">Давидів 81151</div>
<div class="t" style="left:562px;top:415.9px;color:#444">0501690666170</div>
<svg class="a" style="left:612.5px;top:416.8px" width="7" height="6" viewBox="0 0 7 6"><path d="M0.8 3.2 L2.6 4.9 L6.4 1" fill="none" stroke="#3a9032" stroke-width="1.25" stroke-linecap="round" stroke-linejoin="round"/></svg>
<div class="t" style="left:623px;top:415.9px;color:#444">Опт Центр</div>
<div class="t" style="left:26.6px;top:424.1px;color:#6c6c6c;font-size:5.2px">514417</div>
<div class="pill G" style="left:48.7px;top:424.4px;width:50.9px"><span>Завершений</span></div>
<svg class="a" style="left:110.3px;top:424.7px" width="9.8" height="6.2" viewBox="0 0 9.8 6.2"><rect x="0" y="0" width="9.8" height="6.2" rx="1.6" fill="#f6dc80"/><path d="M1.6 0 H8.2 Q9.8 0 9.8 1.6 V3 H0 V1.6 Q0 0 1.6 0Z" fill="#3d60ae"/><rect x="0" y="2.9" width="9.8" height="0.35" fill="#d8dce8"/></svg>
<div class="t" style="left:129.8px;top:424.1px;color:#3e3e3e">Ольга Глущук</div>
<svg class="a" style="left:195px;top:424.3px" width="7" height="7" viewBox="0 0 7 7"><line x1="3.4" y1="3.4" x2="3.4" y2="0.6" stroke="#7ab4ec" stroke-width="0.7" stroke-linecap="round"/><line x1="3.4" y1="3.4" x2="0.98" y2="2" stroke="#7ab4ec" stroke-width="0.7" stroke-linecap="round"/><line x1="3.4" y1="3.4" x2="0.98" y2="4.8" stroke="#7ab4ec" stroke-width="0.7" stroke-linecap="round"/><line x1="3.4" y1="3.4" x2="3.4" y2="6.2" stroke="#7ab4ec" stroke-width="0.7" stroke-linecap="round"/><line x1="3.4" y1="3.4" x2="5.82" y2="4.8" stroke="#7ab4ec" stroke-width="0.7" stroke-linecap="round"/><line x1="3.4" y1="3.4" x2="5.82" y2="2" stroke="#7ab4ec" stroke-width="0.7" stroke-linecap="round"/><circle cx="3.4" cy="3.4" r="0.7" fill="#fff"/></svg>
<div class="t" style="left:203.6px;top:424.1px;color:#6a6a6a">+380</div>
<div class="t" style="left:249.2px;top:424.1px;color:#6a6a6a">0</div>
<div class="t" style="left:266.3px;top:424.1px;color:#3e3e3e">23.12 смс. ОПХ Доставка. ХХХ...</div>
<svg class="a" style="left:358.6px;top:424.9px" width="8" height="6" viewBox="0 0 8 6"><rect x="0.4" y="1.2" width="6.2" height="4.4" rx="0.6" fill="none" stroke="#8a8a8a" stroke-width="0.8"/><rect x="0.6" y="2.4" width="3" height="0.8" fill="#8a8a8a"/><rect x="1" y="4" width="4.6" height="0.6" fill="#b0b0b0"/><rect x="4.9" y="0.3" width="2" height="2" rx="0.4" fill="#5aa8ea"/></svg>
<div class="t" style="left:360px;width:29.8px;text-align:right;top:424.1px;color:#3e3e3e">71.00</div>
<div class="a" style="left:394.4px;top:425px;width:5.4px;height:5.4px;border-radius:1.3px;background:#979797;color:#fff;font-weight:bold;font-size:4.2px;line-height:5.6px;text-align:center">1</div>
<div class="t" style="left:402px;top:424.1px;color:#444">Майка-корсет Waist Trainer *142...</div>
<svg class="a" style="left:500px;top:424.5px" width="8" height="7" viewBox="0 0 8 7"><path d="M4.4 0.5 L7 0.3 Q7.6 4.4 5 6.3 Q2.4 7.6 0.9 5.6 Q0.2 4 1.4 2.4 L2.7 3.3 Q2.1 4.4 2.8 5 Q4.4 5.6 5.1 3.4 Q5.3 1.8 4.4 0.5Z" fill="#f0b22c"/><path d="M3.4 1.6 Q3.9 3 3.3 4.2" fill="none" stroke="#f4c24a" stroke-width="0.9"/></svg>
<div class="t" style="left:509.4px;top:424.1px;color:#444">Лиманка 67803</div>
<div class="t" style="left:562px;top:424.1px;color:#444">0501690663456</div>
<svg class="a" style="left:612.5px;top:425px" width="7" height="6" viewBox="0 0 7 6"><path d="M0.8 3.2 L2.6 4.9 L6.4 1" fill="none" stroke="#3a9032" stroke-width="1.25" stroke-linecap="round" stroke-linejoin="round"/></svg>
<div class="t" style="left:623px;top:424.1px;color:#444">Опт Центр</div>
<div class="t" style="left:26.6px;top:432.3px;color:#6c6c6c;font-size:5.2px">514416</div>
<div class="pill G" style="left:48.7px;top:432.6px;width:50.9px"><span>Завершений</span></div>
<svg class="a" style="left:110.3px;top:432.9px" width="9.8" height="6.2" viewBox="0 0 9.8 6.2"><rect x="0" y="0" width="9.8" height="6.2" rx="1.6" fill="#f6dc80"/><path d="M1.6 0 H8.2 Q9.8 0 9.8 1.6 V3 H0 V1.6 Q0 0 1.6 0Z" fill="#3d60ae"/><rect x="0" y="2.9" width="9.8" height="0.35" fill="#d8dce8"/></svg>
<div class="t" style="left:129.8px;top:432.3px;color:#3e3e3e">Яковлева Оксана</div>
<svg class="a" style="left:195px;top:432.5px" width="7" height="7" viewBox="0 0 7 7"><line x1="3.4" y1="3.4" x2="3.4" y2="0.6" stroke="#7ab4ec" stroke-width="0.7" stroke-linecap="round"/><line x1="3.4" y1="3.4" x2="0.98" y2="2" stroke="#7ab4ec" stroke-width="0.7" stroke-linecap="round"/><line x1="3.4" y1="3.4" x2="0.98" y2="4.8" stroke="#7ab4ec" stroke-width="0.7" stroke-linecap="round"/><line x1="3.4" y1="3.4" x2="3.4" y2="6.2" stroke="#7ab4ec" stroke-width="0.7" stroke-linecap="round"/><line x1="3.4" y1="3.4" x2="5.82" y2="4.8" stroke="#7ab4ec" stroke-width="0.7" stroke-linecap="round"/><line x1="3.4" y1="3.4" x2="5.82" y2="2" stroke="#7ab4ec" stroke-width="0.7" stroke-linecap="round"/><circle cx="3.4" cy="3.4" r="0.7" fill="#fff"/></svg>
<div class="t" style="left:203.6px;top:432.3px;color:#6a6a6a">+380</div>
<div class="t" style="left:249.2px;top:432.3px;color:#6a6a6a">8</div>
<div class="t" style="left:266.3px;top:432.3px;color:#3e3e3e"></div>
<svg class="a" style="left:358.6px;top:432.6px" width="8" height="6" viewBox="0 0 8 6"><rect x="0.5" y="2.2" width="4.6" height="3.4" rx="0.4" fill="none" stroke="#8fbf88" stroke-width="0.8"/><path d="M2.4 3.6 Q3.6 1.4 6 0.8 Q7.6 0.8 7 2.2 Q5.6 3.6 3.4 4.2Z" fill="#2f8a2a"/></svg>
<div class="t" style="left:360px;width:29.8px;text-align:right;top:432.3px;color:#3e3e3e">100.00</div>
<div class="a" style="left:394.4px;top:433.2px;width:5.4px;height:5.4px;border-radius:1.3px;background:#979797;color:#fff;font-weight:bold;font-size:4.2px;line-height:5.6px;text-align:center">5</div>
<div class="t" style="left:402px;top:432.3px;color:#444">Гирлянда электрическая (100 л...</div>
<svg class="a" style="left:500.6px;top:432.8px" width="7" height="7" viewBox="0 0 7 7"><path d="M0.6 0.6 L2.8 3.2 L2 6 L3.2 6 L3.8 3.8 L6.2 3.2 L5.6 1.6 L3 1.8Z" fill="#1e1e1e"/></svg>
<div class="t" style="left:509.4px;top:432.3px;color:#444">Кривой рог</div>
<div class="t" style="left:562px;top:432.3px;color:#444"></div>
<div class="t" style="left:623px;top:432.3px;color:#444">Опт Центр</div>
<div class="t" style="left:26.6px;top:440.5px;color:#6c6c6c;font-size:5.2px">514415</div>
<div class="pill G" style="left:48.7px;top:440.8px;width:50.9px"><span>Завершений</span></div>
<svg class="a" style="left:110.3px;top:441.1px" width="9.8" height="6.2" viewBox="0 0 9.8 6.2"><rect x="0" y="0" width="9.8" height="6.2" rx="1.6" fill="#f6dc80"/><path d="M1.6 0 H8.2 Q9.8 0 9.8 1.6 V3 H0 V1.6 Q0 0 1.6 0Z" fill="#3d60ae"/><rect x="0" y="2.9" width="9.8" height="0.35" fill="#d8dce8"/></svg>
<div class="t" style="left:129.8px;top:440.5px;color:#3e3e3e">Горгулько Христина...</div>
<svg class="a" style="left:195px;top:440.7px" width="7" height="7" viewBox="0 0 7 7"><line x1="3.4" y1="3.4" x2="3.4" y2="0.6" stroke="#7ab4ec" stroke-width="0.7" stroke-linecap="round"/><line x1="3.4" y1="3.4" x2="0.98" y2="2" stroke="#7ab4ec" stroke-width="0.7" stroke-linecap="round"/><line x1="3.4" y1="3.4" x2="0.98" y2="4.8" stroke="#7ab4ec" stroke-width="0.7" stroke-linecap="round"/><line x1="3.4" y1="3.4" x2="3.4" y2="6.2" stroke="#7ab4ec" stroke-width="0.7" stroke-linecap="round"/><line x1="3.4" y1="3.4" x2="5.82" y2="4.8" stroke="#7ab4ec" stroke-width="0.7" stroke-linecap="round"/><line x1="3.4" y1="3.4" x2="5.82" y2="2" stroke="#7ab4ec" stroke-width="0.7" stroke-linecap="round"/><circle cx="3.4" cy="3.4" r="0.7" fill="#fff"/></svg>
<div class="t" style="left:203.6px;top:440.5px;color:#6a6a6a">+380</div>
<div class="t" style="left:249.2px;top:440.5px;color:#6a6a6a">3</div>
<div class="t" style="left:266.3px;top:440.5px;color:#3e3e3e">13.12 смс ОПХ. ХХЛ чорний</div>
<svg class="a" style="left:358.8px;top:440.6px" width="7" height="7" viewBox="0 0 7 7"><circle cx="3.5" cy="3.5" r="3" fill="#e6f4e2" stroke="#4a9a4a" stroke-width="0.9"/><text x="2.2" y="5.3" font-size="4.6" font-family="Liberation Sans" fill="#3a8a3a">$</text></svg>
<div class="t" style="left:360px;width:29.8px;text-align:right;top:440.5px;color:#3e3e3e">71.00</div>
<div class="a" style="left:394.4px;top:441.4px;width:5.4px;height:5.4px;border-radius:1.3px;background:#979797;color:#fff;font-weight:bold;font-size:4.2px;line-height:5.6px;text-align:center">1</div>
<div class="t" style="left:402px;top:440.5px;color:#444">Майка-корсет Waist Trainer *142...</div>
<svg class="a" style="left:500.6px;top:440.9px" width="7" height="7" viewBox="0 0 7 7"><circle cx="3.2" cy="3.2" r="3.4" fill="#fbe4e4"/><circle cx="3.2" cy="3.2" r="1.4" fill="#fff"/><circle cx="3.2" cy="1" r="1.05" fill="#a04040"/><circle cx="3.2" cy="5.4" r="1.05" fill="#a04040"/><circle cx="1" cy="3.2" r="1" fill="#a04040"/><circle cx="5.4" cy="3.2" r="1" fill="#a04040"/></svg>
<div class="t" style="left:509.4px;top:440.5px;color:#444">Камянське(Дні...</div>
<div class="t" style="left:562px;top:440.5px;color:#444">20450631554459</div>
<svg class="a" style="left:612.5px;top:441.4px" width="7" height="6" viewBox="0 0 7 6"><path d="M0.8 3.2 L2.6 4.9 L6.4 1" fill="none" stroke="#3a9032" stroke-width="1.25" stroke-linecap="round" stroke-linejoin="round"/></svg>
<div class="t" style="left:623px;top:440.5px;color:#444">Опт Центр</div>
<div class="t" style="left:26.6px;top:448.7px;color:#6c6c6c;font-size:5.2px">514414</div>
<div class="pill G" style="left:48.7px;top:449px;width:50.9px"><span>Завершений</span></div>
<svg class="a" style="left:110.3px;top:449.3px" width="9.8" height="6.2" viewBox="0 0 9.8 6.2"><rect x="0" y="0" width="9.8" height="6.2" rx="1.6" fill="#f6dc80"/><path d="M1.6 0 H8.2 Q9.8 0 9.8 1.6 V3 H0 V1.6 Q0 0 1.6 0Z" fill="#3d60ae"/><rect x="0" y="2.9" width="9.8" height="0.35" fill="#d8dce8"/></svg>
<div class="t" style="left:129.8px;top:448.7px;color:#3e3e3e">Анна Пастернак</div>
<svg class="a" style="left:194.9px;top:448.8px" width="7" height="7" viewBox="0 0 7 7"><circle cx="3.5" cy="3.5" r="3.3" fill="#f1cc5a"/><text x="1.6" y="5" font-size="3.6" font-family="Liberation Sans" font-weight="bold" fill="#555">lc</text></svg>
<div class="t" style="left:203.6px;top:448.7px;color:#6a6a6a">+380</div>
<div class="t" style="left:249.2px;top:448.7px;color:#6a6a6a">1</div>
<div class="t" style="left:266.3px;top:448.7px;color:#3e3e3e">24.12 смс ОПХ доставка</div>
<svg class="a" style="left:358.6px;top:449px" width="8" height="6" viewBox="0 0 8 6"><rect x="0.5" y="2.2" width="4.6" height="3.4" rx="0.4" fill="none" stroke="#8fbf88" stroke-width="0.8"/><path d="M2.4 3.6 Q3.6 1.4 6 0.8 Q7.6 0.8 7 2.2 Q5.6 3.6 3.4 4.2Z" fill="#2f8a2a"/></svg>
<div class="t" style="left:360px;width:29.8px;text-align:right;top:448.7px;color:#3e3e3e">231.00</div>
<div class="a" style="left:394.4px;top:449.6px;width:5.4px;height:5.4px;border-radius:1.3px;background:#979797;color:#fff;font-weight:bold;font-size:4.2px;line-height:5.6px;text-align:center">1</div>
<div class="t" style="left:402px;top:448.7px;color:#444">Светящийся гоночный трек Ма...</div>
<svg class="a" style="left:500px;top:449.1px" width="8" height="7" viewBox="0 0 8 7"><path d="M4.4 0.5 L7 0.3 Q7.6 4.4 5 6.3 Q2.4 7.6 0.9 5.6 Q0.2 4 1.4 2.4 L2.7 3.3 Q2.1 4.4 2.8 5 Q4.4 5.6 5.1 3.4 Q5.3 1.8 4.4 0.5Z" fill="#f0b22c"/><path d="M3.4 1.6 Q3.9 3 3.3 4.2" fill="none" stroke="#f4c24a" stroke-width="0.9"/></svg>
<div class="t" style="left:509.4px;top:448.7px;color:#444">Гребинки 08662</div>
<div class="t" style="left:562px;top:448.7px;color:#444">0501689531643</div>
<svg class="a" style="left:612.5px;top:449.6px" width="7" height="6" viewBox="0 0 7 6"><path d="M0.8 3.2 L2.6 4.9 L6.4 1" fill="none" stroke="#3a9032" stroke-width="1.25" stroke-linecap="round" stroke-linejoin="round"/></svg>
<div class="t" style="left:623px;top:448.7px;color:#444">Опт Центр</div>
<div class="t" style="left:26.6px;top:456.9px;color:#6c6c6c;font-size:5.2px">514413</div>
<div class="pill G" style="left:48.7px;top:457.2px;width:50.9px"><span>Завершений</span></div>
<svg class="a" style="left:110.3px;top:457.5px" width="9.8" height="6.2" viewBox="0 0 9.8 6.2"><rect x="0" y="0" width="9.8" height="6.2" rx="1.6" fill="#f6dc80"/><path d="M1.6 0 H8.2 Q9.8 0 9.8 1.6 V3 H0 V1.6 Q0 0 1.6 0Z" fill="#3d60ae"/><rect x="0" y="2.9" width="9.8" height="0.35" fill="#d8dce8"/></svg>
<div class="t" style="left:129.8px;top:456.9px;color:#3e3e3e">Яковлева Оксана</div>
<svg class="a" style="left:195px;top:457.1px" width="7" height="7" viewBox="0 0 7 7"><line x1="3.4" y1="3.4" x2="3.4" y2="0.6" stroke="#7ab4ec" stroke-width="0.7" stroke-linecap="round"/><line x1="3.4" y1="3.4" x2="0.98" y2="2" stroke="#7ab4ec" stroke-width="0.7" stroke-linecap="round"/><line x1="3.4" y1="3.4" x2="0.98" y2="4.8" stroke="#7ab4ec" stroke-width="0.7" stroke-linecap="round"/><line x1="3.4" y1="3.4" x2="3.4" y2="6.2" stroke="#7ab4ec" stroke-width="0.7" stroke-linecap="round"/><line x1="3.4" y1="3.4" x2="5.82" y2="4.8" stroke="#7ab4ec" stroke-width="0.7" stroke-linecap="round"/><line x1="3.4" y1="3.4" x2="5.82" y2="2" stroke="#7ab4ec" stroke-width="0.7" stroke-linecap="round"/><circle cx="3.4" cy="3.4" r="0.7" fill="#fff"/></svg>
<div class="t" style="left:203.6px;top:456.9px;color:#6a6a6a">+380</div>
<div class="t" style="left:249.2px;top:456.9px;color:#6a6a6a">8</div>
<div class="t" style="left:266.3px;top:456.9px;color:#3e3e3e"></div>
<svg class="a" style="left:358.6px;top:457.2px" width="8" height="6" viewBox="0 0 8 6"><rect x="0.5" y="2.2" width="4.6" height="3.4" rx="0.4" fill="none" stroke="#8fbf88" stroke-width="0.8"/><path d="M2.4 3.6 Q3.6 1.4 6 0.8 Q7.6 0.8 7 2.2 Q5.6 3.6 3.4 4.2Z" fill="#2f8a2a"/></svg>
<div class="t" style="left:360px;width:29.8px;text-align:right;top:456.9px;color:#3e3e3e">375.00</div>
<div class="a" style="left:394.4px;top:457.8px;width:5.4px;height:5.4px;border-radius:1.3px;background:#979797;color:#fff;font-weight:bold;font-size:4.2px;line-height:5.6px;text-align:center">5</div>
<div class="t" style="left:402px;top:456.9px;color:#444">Гирлянда электрическая (100 л...</div>
<svg class="a" style="left:500.6px;top:457.4px" width="7" height="7" viewBox="0 0 7 7"><path d="M0.6 0.6 L2.8 3.2 L2 6 L3.2 6 L3.8 3.8 L6.2 3.2 L5.6 1.6 L3 1.8Z" fill="#1e1e1e"/></svg>
<div class="t" style="left:509.4px;top:456.9px;color:#444">Кривой рог</div>
<div class="t" style="left:562px;top:456.9px;color:#444"></div>
<div class="t" style="left:623px;top:456.9px;color:#444">Опт Центр</div>
<div class="a" style="left:214.5px;top:52.7px;width:34.4px;height:427.3px;background:#fff"></div>
<div class="a" style="left:0;top:0;width:22.2px;height:466.4px;background:#303030;border-left:1px solid #151515;border-right:1.4px solid #1c1c1c"></div>
<div class="a" style="left:0;top:0;width:652px;height:16.3px;background:#323232"></div>
<div class="a" style="left:21px;top:15.1px;width:631px;height:1.2px;background:#1c1c1c"></div>
<div class="a" style="left:0;top:0;width:0.9px;height:466.4px;background:#151515"></div>
<svg class="a" style="left:0px;top:0px" width="25" height="16" viewBox="0 0 25 16"><defs>
<linearGradient id="lt" x1="0" y1="0" x2="1" y2="0"><stop offset="0" stop-color="#70d890"/><stop offset="0.45" stop-color="#60d0d0"/><stop offset="1" stop-color="#5070d8"/></linearGradient>
<linearGradient id="lt2" x1="0" y1="0" x2="1" y2="0"><stop offset="0" stop-color="#208040"/><stop offset="0.5" stop-color="#106070"/><stop offset="1" stop-color="#202890"/></linearGradient>
<linearGradient id="ll" x1="0" y1="0" x2="0" y2="1"><stop offset="0" stop-color="#d8f080"/><stop offset="0.45" stop-color="#f8c860"/><stop offset="1" stop-color="#e84830"/></linearGradient>
<linearGradient id="lr" x1="0" y1="0" x2="0" y2="1"><stop offset="0" stop-color="#8050d0"/><stop offset="0.45" stop-color="#e070f0"/><stop offset="1" stop-color="#e04860"/></linearGradient></defs>
<path d="M5.2 -1 H19.2 Q20 1.2 19.5 3 Q12.2 5.4 4.9 3 Q4.4 1.2 5.2 -1Z" fill="url(#lt)"/>
<path d="M5.2 -1 H19.2 Q19.6 0.4 19.4 1.2 Q12.2 2.8 5 1.2 Q4.8 0.4 5.2 -1Z" fill="url(#lt2)"/>
<path d="M5 1.4 Q12.2 3 19.4 1.4" fill="none" stroke="#0c1418" stroke-width="0.45" opacity="0.8"/>
<path d="M4.6 2.6 Q6.4 9 11.6 13.8 L12.8 12.7 Q9.6 9 8.4 4.2Z" fill="url(#ll)"/>
<path d="M19.8 2.6 Q18 9 12.8 13.8 L11.6 12.7 Q14.8 9 16 4.2Z" fill="url(#lr)"/></svg>
<svg class="a" style="left:6.8px;top:24.4px" width="9.6" height="7.8" viewBox="0 0 9.6 7.8"><rect x="0.5" y="0.5" width="8.6" height="6.8" rx="1.4" fill="#9a9a9a" stroke="#ececec" stroke-width="1"/><rect x="1.2" y="1.2" width="7.2" height="1.8" fill="#c8c8c8"/><rect x="1.5" y="3.4" width="3.2" height="3" fill="#505050"/><rect x="2" y="4.6" width="1.6" height="0.6" fill="#e0e0e0"/><rect x="2" y="3.8" width="0.7" height="0.6" fill="#e0e0e0"/><path d="M5.4 3.4 H8.1 V6.4 H5.4Z" fill="#111"/><circle cx="6.6" cy="5" r="1.4" fill="#000"/></svg>
<svg class="a" style="left:6.8px;top:40px" width="9.4" height="9.8" viewBox="0 0 9.4 9.8"><path d="M1.2 0.6 L2.6 4 H0Z" fill="#e8e078"/><rect x="3.2" y="1.2" width="6" height="1.1" fill="#e0d870"/><rect x="3.2" y="3" width="6" height="1.1" fill="#e0d870"/><rect x="0" y="5" width="9.2" height="4.6" fill="#c4bc50"/><rect x="0" y="6.9" width="9.2" height="0.5" fill="#9a9440"/></svg>
<svg class="a" style="left:6.6px;top:58px" width="10" height="7.6" viewBox="0 0 10 7.6"><circle cx="2.9" cy="1.6" r="1.6" fill="#e4e4e4"/><circle cx="6.7" cy="1.6" r="1.6" fill="#e4e4e4"/><path d="M0.1 7.2 Q0.1 3.9 3 3.9 Q5.8 3.9 5.9 7.2Z" fill="#e4e4e4"/><path d="M6.6 4 Q9.4 4.2 9.7 7.2 H7.4 L7 5.4Z" fill="#e4e4e4"/></svg>
<svg class="a" style="left:6.6px;top:73px" width="10" height="10.5" viewBox="0 0 10 10.5"><path d="M0.5 3.6 L4.9 0.9 L9.3 3.6" fill="none" stroke="#e4e4e4" stroke-width="1.3"/><circle cx="3.5" cy="5.8" r="1.15" fill="#e4e4e4"/><circle cx="6.3" cy="5.8" r="1.15" fill="#e4e4e4"/><circle cx="1.9" cy="8.8" r="1.15" fill="#e4e4e4"/><circle cx="4.9" cy="8.8" r="1.15" fill="#e4e4e4"/><circle cx="7.9" cy="8.8" r="1.15" fill="#e4e4e4"/></svg>
<svg class="a" style="left:6.6px;top:90.4px" width="10" height="10" viewBox="0 0 10 10"><path d="M0.6 0.8 L3 3.6" stroke="#e4e4e4" stroke-width="1.4" stroke-linecap="round"/><path d="M2.6 3 Q6 1 8.6 1.6 Q9.8 4.2 8.6 6.4 Q6.4 7.4 4.4 9.2 Q2.6 9.6 2.8 7.6 Q2.4 5 2.6 3Z" fill="#d0d0d0"/><circle cx="5.4" cy="3.6" r="1.2" fill="#444"/><circle cx="5.6" cy="3.4" r="0.6" fill="#eee"/><circle cx="3.6" cy="8.2" r="0.7" fill="#555"/></svg>
<svg class="a" style="left:6.6px;top:108px" width="10" height="9.5" viewBox="0 0 10 9.5"><path d="M1 5.4 L8.8 1 V8.4 L1 5.4Z" fill="none" stroke="#e4e4e4" stroke-width="1.2" stroke-linejoin="round"/><path d="M2.2 6 L3.2 8.6 L4.6 7.4" fill="#e4e4e4" stroke="#e4e4e4" stroke-width="0.9"/></svg>
<svg class="a" style="left:6.6px;top:124.4px" width="10" height="10" viewBox="0 0 10 10"><rect x="0.4" y="6.2" width="1.5" height="3.4" fill="#e4e4e4"/><rect x="2.6" y="4.6" width="1.5" height="5" fill="#e4e4e4"/><rect x="4.8" y="3.4" width="1.5" height="6.2" fill="#e4e4e4"/><rect x="7" y="1.2" width="1.7" height="8.4" fill="#e4e4e4"/><path d="M0.4 5 L3.4 2.8 L5.4 3.2 L8.6 0.4" fill="none" stroke="#bbb" stroke-width="0.7"/></svg>
<svg class="a" style="left:6.6px;top:141px" width="10" height="8.6" viewBox="0 0 10 8.6"><path d="M0.4 2.2 H9.4 M0.4 6.2 H9.4" stroke="#e4e4e4" stroke-width="1"/><circle cx="3.6" cy="2.2" r="1.5" fill="#2e2e2e" stroke="#e4e4e4" stroke-width="1.1"/><circle cx="6.6" cy="6.2" r="1.5" fill="#2e2e2e" stroke="#e4e4e4" stroke-width="1.1"/></svg>
<svg class="a" style="left:6.6px;top:158.6px" width="9" height="9" viewBox="0 0 9 9"><circle cx="4.4" cy="4.4" r="3.8" fill="none" stroke="#e4e4e4" stroke-width="1.1"/><rect x="3.85" y="3.6" width="1.1" height="3" fill="#e4e4e4"/><circle cx="4.4" cy="2.4" r="0.65" fill="#e4e4e4"/></svg>
<svg class="a" style="left:5.6px;top:176.2px" width="11" height="8" viewBox="0 0 11 8"><path d="M0.4 3 L2.4 0.8 L5 1.6 L7.6 0.6 L10.4 2.8 L8.6 5.4 L5.6 7.4 L2.6 5.8Z" fill="#e4e4e4"/><path d="M3.6 3.4 L5.4 2.2 L7.4 4" fill="none" stroke="#2e2e2e" stroke-width="0.8"/></svg>
<svg class="a" style="left:6.8px;top:192.8px" width="9.4" height="8" viewBox="0 0 9.4 8"><rect x="0.6" y="0.6" width="8.2" height="7" rx="1.8" fill="none" stroke="#e4e4e4" stroke-width="1.2"/><path d="M3.4 2.6 L6.2 4.1 L3.4 5.6Z" fill="#e4e4e4"/></svg>
<div class="t" style="left:25.8px;top:-2.7px;color:#eee;font-size:6.15px;line-height:8px">Відображено з 200 по <u>250</u> ♥ / 471</div>
<div class="t" style="left:49px;top:6.9px;color:#ccc;font-size:5.6px;line-height:8px">3</div>
<div class="t" style="left:62.2px;top:6.9px;color:#ccc;font-size:5.6px;line-height:8px">4</div>
<div class="t" style="left:75.6px;top:6.9px;color:#8a8a8a;font-size:5.6px;line-height:8px">5</div>
<div class="t" style="left:88.8px;top:6.9px;color:#ccc;font-size:5.6px;line-height:8px">6</div>
<div class="t" style="left:102px;top:6.9px;color:#ccc;font-size:5.6px;line-height:8px">7</div>
<svg class="a" style="left:29px;top:8.8px" width="6.4" height="4.4" viewBox="0 0 6.4 4.4"><rect x="0" y="0" width="0.9" height="4.2" fill="#eee"/><path d="M3.4 0 L0.9 2.1 L3.4 4.2Z M6.2 0 L3.6 2.1 L6.2 4.2Z" fill="#eee"/></svg>
<svg class="a" style="left:118.8px;top:8.8px" width="6.4" height="4.4" viewBox="0 0 6.4 4.4"><rect x="5.4" y="0" width="0.9" height="4.2" fill="#eee"/><path d="M0 0 L2.6 2.1 L0 4.2Z M2.8 0 L5.4 2.1 L2.8 4.2Z" fill="#eee"/></svg>
<div class="t" style="left:31.7px;top:19px;color:#333;font-weight:bold;">Всі <span style="font-size:5px;font-weight:normal">471</span></div>
<div class="a" style="left:28.6px;top:27.3px;width:25.3px;height:2.2px;background:#9a9a9a;border-radius:1px"></div>
<div class="t" style="left:60px;top:19px;color:#444;">Новий <span style="font-size:5px;font-weight:normal">48</span></div>
<div class="a" style="left:57px;top:27.9px;width:33px;height:1px;background:#e8e8e8;border-radius:1px"></div>
<div class="t" style="left:94px;top:19px;color:#444;">Прийнятий <span style="font-size:5px;font-weight:normal">7</span></div>
<div class="a" style="left:91px;top:27.9px;width:42px;height:1px;background:#cfe6c0;border-radius:1px"></div>
<div class="t" style="left:139px;top:19px;color:#444;">Відмова <span style="font-size:5px;font-weight:normal">42</span></div>
<div class="a" style="left:136px;top:27.9px;width:36px;height:1px;background:#f4c4c8;border-radius:1px"></div>
<div class="t" style="left:178.8px;top:19px;color:#444;">Запакований <span style="font-size:5px;font-weight:normal">1</span></div>
<div class="a" style="left:175.6px;top:27.9px;width:47px;height:1px;background:#dddddd;border-radius:1px"></div>
<div class="t" style="left:229.9px;top:19px;color:#444;">Відправлений <span style="font-size:5px;font-weight:normal">12</span></div>
<div class="a" style="left:226px;top:27.9px;width:54px;height:1px;background:#f1eaa0;border-radius:1px"></div>
<div class="t" style="left:285px;top:19px;color:#444;">Завершений <span style="font-size:5px;font-weight:normal">278</span></div>
<div class="a" style="left:282.3px;top:27.9px;width:51.7px;height:1px;background:#8cc860;border-radius:1px"></div>
<div class="t" style="left:339.8px;top:19px;color:#c8c8c8;">Повернення товару (в дорозі) <span style="font-size:5px;font-weight:normal">0</span></div>
<div class="a" style="left:337px;top:27.9px;width:95px;height:1px;background:#f6d0d0;border-radius:1px"></div>
<div class="t" style="left:437.5px;top:19px;color:#333;">Нема в наявності <span style="font-size:5px;font-weight:normal">1</span></div>
<div class="a" style="left:434px;top:27.9px;width:60px;height:1px;background:#a0e0ea;border-radius:1px"></div>
<div class="t" style="left:500.8px;top:19px;color:#444;">Самовивіз <span style="font-size:5px;font-weight:normal">2</span></div>
<div class="a" style="left:497px;top:27.9px;width:41px;height:1px;background:#a8c8d0;border-radius:1px"></div>
<div class="t" style="left:544.7px;top:19px;color:#c8c8c8;">Сервіси <span style="font-size:5px;font-weight:normal">0</span></div>
<div class="a" style="left:541px;top:27.9px;width:34px;height:1px;background:#f4e4c4;border-radius:1px"></div>
<div class="t" style="left:579.8px;top:19px;color:#c8c8c8;">В дорозі додому <span style="font-size:5px;font-weight:normal">0</span></div>
<div class="a" style="left:577px;top:27.9px;width:57px;height:1px;background:#cfe0c8;border-radius:1px"></div>
<div class="t" style="left:639.4px;top:19px;color:#333;">Поверн <span style="font-size:5px;font-weight:normal"></span></div>
<div class="a" style="left:636px;top:27.9px;width:24px;height:1px;background:#e05050;border-radius:1px"></div>
<div class="a" style="left:0;top:466.4px;width:63.5px;height:14px;background:#fff;border-top:0.8px solid #e4e4e4;border-right:0.8px solid #e4e4e4"></div>
<div class="t" style="left:4.9px;top:468.4px;font-size:7.75px;line-height:9px;color:#262626">sip:0672818601</div></div></div></body></html>
